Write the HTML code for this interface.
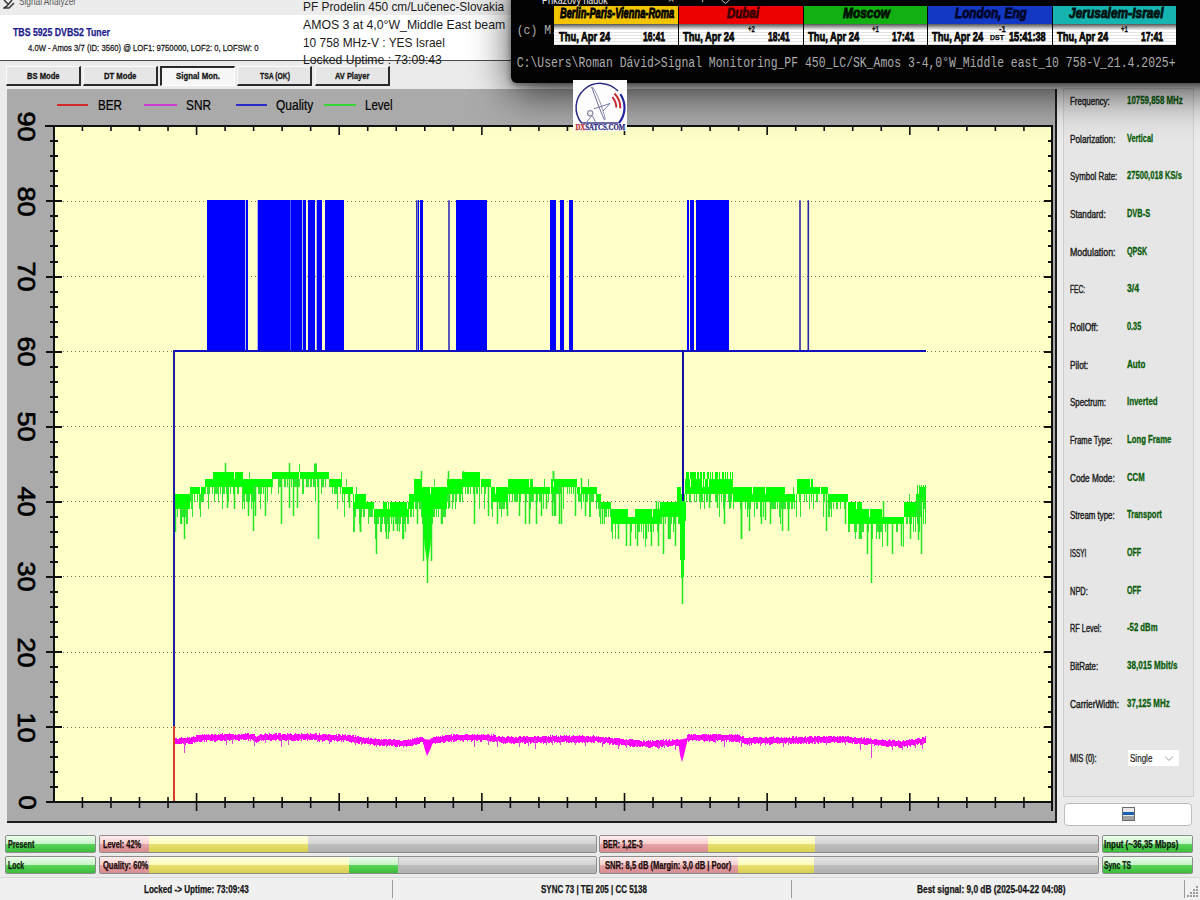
<!DOCTYPE html><html><head><meta charset="utf-8"><style>
html,body{margin:0;padding:0;}
body{width:1200px;height:900px;overflow:hidden;position:relative;background:#f0f0f0;font-family:"Liberation Sans",sans-serif;}
.t{position:absolute;white-space:pre;transform-origin:0 0;}
.b{position:absolute;box-sizing:border-box;}
svg{position:absolute;left:0;top:0;}
</style></head><body>

<div class="b" style="left:0px;top:0px;width:1200px;height:15px;background:#ececec"></div>
<div class="b" style="left:0px;top:15px;width:1200px;height:45px;background:#ffffff"></div>
<div class="b" style="left:0px;top:60px;width:1200px;height:1px;background:#4a4a4a"></div>
<div class="b" style="left:0px;top:61px;width:1200px;height:839px;background:#ebebeb"></div>
<div class="b" style="left:6px;top:66px;width:75px;height:20px;background:#e6e6e6;border-bottom:2px solid #2a2a2a;border-right:2px solid #2a2a2a;border-top:1px solid #fafafa;border-left:1px solid #fafafa"></div>
<div class="b" style="left:83px;top:66px;width:75px;height:20px;background:#e6e6e6;border-bottom:2px solid #2a2a2a;border-right:2px solid #2a2a2a;border-top:1px solid #fafafa;border-left:1px solid #fafafa"></div>
<div class="b" style="left:160px;top:66px;width:75px;height:20px;background:#f6f6f6;border-top:2px solid #2a2a2a;border-left:2px solid #2a2a2a;border-right:1px solid #fff;border-bottom:1px solid #fff"></div>
<div class="b" style="left:237px;top:66px;width:75px;height:20px;background:#e6e6e6;border-bottom:2px solid #2a2a2a;border-right:2px solid #2a2a2a;border-top:1px solid #fafafa;border-left:1px solid #fafafa"></div>
<div class="b" style="left:315px;top:66px;width:75px;height:20px;background:#e6e6e6;border-bottom:2px solid #2a2a2a;border-right:2px solid #2a2a2a;border-top:1px solid #fafafa;border-left:1px solid #fafafa"></div>
<div class="b" style="left:7px;top:89px;width:1050px;height:734px;background:#aaaaaa;border-right:2px solid #1e1e1e;border-bottom:2px solid #1e1e1e"></div>
<div class="b" style="left:53px;top:125px;width:1000px;height:678px;background:#ffffc8"></div>
<div class="b" style="left:1063px;top:88px;width:131px;height:709px;border:1px solid #cfcfcf;background:#e6e6e6"></div>
<div class="b" style="left:1064px;top:803px;width:128px;height:23px;background:#fff;border:1px solid #bdbdbd;border-radius:4px"></div>
<svg width="1200" height="900" viewBox="0 0 1200 900" shape-rendering="crispEdges">
<line x1="55" y1="727.5" x2="1050" y2="727.5" stroke="#7a7a5a" stroke-width="1" stroke-dasharray="1 3"/>
<line x1="55" y1="652.5" x2="1050" y2="652.5" stroke="#7a7a5a" stroke-width="1" stroke-dasharray="1 3"/>
<line x1="55" y1="576.5" x2="1050" y2="576.5" stroke="#7a7a5a" stroke-width="1" stroke-dasharray="1 3"/>
<line x1="55" y1="501.5" x2="1050" y2="501.5" stroke="#7a7a5a" stroke-width="1" stroke-dasharray="1 3"/>
<line x1="55" y1="426.5" x2="1050" y2="426.5" stroke="#7a7a5a" stroke-width="1" stroke-dasharray="1 3"/>
<line x1="55" y1="351.5" x2="1050" y2="351.5" stroke="#7a7a5a" stroke-width="1" stroke-dasharray="1 3"/>
<line x1="55" y1="276.5" x2="1050" y2="276.5" stroke="#7a7a5a" stroke-width="1" stroke-dasharray="1 3"/>
<line x1="55" y1="201.5" x2="1050" y2="201.5" stroke="#7a7a5a" stroke-width="1" stroke-dasharray="1 3"/>
<rect x="799.2" y="200.3" width="1.6" height="151.2" fill="#2828a8" shape-rendering="geometricPrecision"/>
<rect x="807.5" y="200.3" width="1.6" height="151.2" fill="#2828a8" shape-rendering="geometricPrecision"/>
<rect x="416" y="200.3" width="1.6" height="151.2" fill="#3030b8" shape-rendering="geometricPrecision"/>
<rect x="448.2" y="200.3" width="1.6" height="151.2" fill="#3030b8" shape-rendering="geometricPrecision"/>
<rect x="207.0" y="200.3" width="38.0" height="151.2" fill="#0000ff" fill-opacity="1"/>
<rect x="246.3" y="200.3" width="1.4" height="151.2" fill="#0000ff" fill-opacity="1"/>
<rect x="258.3" y="200.3" width="43.4" height="151.2" fill="#0000ff" fill-opacity="1"/>
<rect x="303.0" y="200.3" width="2.7" height="151.2" fill="#0000ff" fill-opacity="1"/>
<rect x="308.3" y="200.3" width="6.7" height="151.2" fill="#0000ff" fill-opacity="1"/>
<rect x="317.0" y="200.3" width="4.7" height="151.2" fill="#0000ff" fill-opacity="1"/>
<rect x="325.0" y="200.3" width="18.7" height="151.2" fill="#0000ff" fill-opacity="1"/>
<rect x="417.6" y="200.3" width="1.4" height="151.2" fill="#0000ff" fill-opacity="1"/>
<rect x="420.0" y="200.3" width="3.0" height="151.2" fill="#0000ff" fill-opacity="1"/>
<rect x="455.8" y="200.3" width="30.9" height="151.2" fill="#0000ff" fill-opacity="1"/>
<rect x="550.0" y="200.3" width="5.8" height="151.2" fill="#0000ff" fill-opacity="1"/>
<rect x="560.0" y="200.3" width="4.0" height="151.2" fill="#0000ff" fill-opacity="1"/>
<rect x="569.0" y="200.3" width="4.0" height="151.2" fill="#0000ff" fill-opacity="1"/>
<rect x="686.7" y="200.3" width="2.3" height="151.2" fill="#0000ff" fill-opacity="1"/>
<rect x="690.0" y="200.3" width="4.0" height="151.2" fill="#0000ff" fill-opacity="1"/>
<rect x="696.0" y="200.3" width="32.7" height="151.2" fill="#0000ff" fill-opacity="1"/>
<rect x="245.2" y="200.3" width="1.0" height="150.2" fill="#8080ff" fill-opacity="0.6"/>
<rect x="257.3" y="200.3" width="1.0" height="150.2" fill="#8080ff" fill-opacity="0.6"/>
<rect x="290.3" y="200.3" width="1.0" height="150.2" fill="#8080ff" fill-opacity="0.6"/>
<rect x="302.0" y="200.3" width="1.0" height="150.2" fill="#8080ff" fill-opacity="0.6"/>
<rect x="316.0" y="200.3" width="1.0" height="150.2" fill="#8080ff" fill-opacity="0.6"/>
<rect x="174" y="350" width="752" height="2" fill="#1010c0"/>
<rect x="174" y="494.3" width="1" height="15.0" fill="#00ff00"/>
<rect x="174" y="509.4" width="1" height="7.5" fill="#30e830"/>
<rect x="175" y="494.3" width="1" height="15.0" fill="#00ff00"/>
<rect x="176" y="494.3" width="1" height="15.0" fill="#00ff00"/>
<rect x="177" y="494.3" width="1" height="15.0" fill="#00ff00"/>
<rect x="177" y="509.4" width="1" height="7.5" fill="#30e830"/>
<rect x="178" y="494.3" width="1" height="15.0" fill="#00ff00"/>
<rect x="179" y="494.3" width="1" height="15.0" fill="#00ff00"/>
<rect x="180" y="494.3" width="1" height="15.0" fill="#00ff00"/>
<rect x="180" y="509.4" width="1" height="15.0" fill="#30e830"/>
<rect x="181" y="494.3" width="1" height="15.0" fill="#00ff00"/>
<rect x="182" y="494.3" width="1" height="15.0" fill="#00ff00"/>
<rect x="182" y="509.4" width="1" height="7.5" fill="#30e830"/>
<rect x="183" y="494.3" width="1" height="15.0" fill="#00ff00"/>
<rect x="183" y="509.4" width="1" height="7.5" fill="#30e830"/>
<rect x="184" y="494.3" width="1" height="15.0" fill="#00ff00"/>
<rect x="184" y="509.4" width="1" height="15.0" fill="#30e830"/>
<rect x="185" y="494.3" width="1" height="15.0" fill="#00ff00"/>
<rect x="185" y="509.4" width="1" height="7.5" fill="#30e830"/>
<rect x="186" y="494.3" width="1" height="15.0" fill="#00ff00"/>
<rect x="186" y="509.4" width="1" height="15.0" fill="#30e830"/>
<rect x="187" y="494.3" width="1" height="15.0" fill="#00ff00"/>
<rect x="187" y="509.4" width="1" height="15.0" fill="#30e830"/>
<rect x="188" y="494.3" width="1" height="15.0" fill="#00ff00"/>
<rect x="189" y="494.3" width="1" height="15.0" fill="#00ff00"/>
<rect x="190" y="486.8" width="1" height="7.5" fill="#00ff00"/>
<rect x="190" y="494.3" width="1" height="7.5" fill="#30e830"/>
<rect x="191" y="486.8" width="1" height="7.5" fill="#00ff00"/>
<rect x="191" y="494.3" width="1" height="15.0" fill="#30e830"/>
<rect x="192" y="486.8" width="1" height="7.5" fill="#00ff00"/>
<rect x="192" y="494.3" width="1" height="22.5" fill="#30e830"/>
<rect x="193" y="486.8" width="1" height="7.5" fill="#00ff00"/>
<rect x="194" y="486.8" width="1" height="7.5" fill="#00ff00"/>
<rect x="194" y="494.3" width="1" height="7.5" fill="#30e830"/>
<rect x="195" y="486.8" width="1" height="7.5" fill="#00ff00"/>
<rect x="196" y="486.8" width="1" height="7.5" fill="#00ff00"/>
<rect x="197" y="486.8" width="1" height="7.5" fill="#00ff00"/>
<rect x="197" y="494.3" width="1" height="7.5" fill="#30e830"/>
<rect x="198" y="486.8" width="1" height="7.5" fill="#00ff00"/>
<rect x="199" y="486.8" width="1" height="7.5" fill="#00ff00"/>
<rect x="199" y="494.3" width="1" height="15.0" fill="#30e830"/>
<rect x="200" y="494.3" width="1" height="0.0" fill="#00ff00"/>
<rect x="200" y="494.3" width="1" height="22.5" fill="#30e830"/>
<rect x="201" y="486.8" width="1" height="7.5" fill="#00ff00"/>
<rect x="201" y="494.3" width="1" height="7.5" fill="#30e830"/>
<rect x="202" y="486.8" width="1" height="7.5" fill="#00ff00"/>
<rect x="202" y="494.3" width="1" height="7.5" fill="#30e830"/>
<rect x="203" y="486.8" width="1" height="7.5" fill="#00ff00"/>
<rect x="203" y="494.3" width="1" height="7.5" fill="#30e830"/>
<rect x="204" y="486.8" width="1" height="7.5" fill="#00ff00"/>
<rect x="205" y="479.3" width="1" height="7.5" fill="#00ff00"/>
<rect x="205" y="486.8" width="1" height="7.5" fill="#30e830"/>
<rect x="206" y="479.3" width="1" height="7.5" fill="#00ff00"/>
<rect x="207" y="479.3" width="1" height="7.5" fill="#00ff00"/>
<rect x="207" y="486.8" width="1" height="7.5" fill="#30e830"/>
<rect x="208" y="479.3" width="1" height="7.5" fill="#00ff00"/>
<rect x="208" y="486.8" width="1" height="22.5" fill="#30e830"/>
<rect x="209" y="479.3" width="1" height="7.5" fill="#00ff00"/>
<rect x="209" y="486.8" width="1" height="7.5" fill="#30e830"/>
<rect x="210" y="479.3" width="1" height="7.5" fill="#00ff00"/>
<rect x="211" y="479.3" width="1" height="7.5" fill="#00ff00"/>
<rect x="212" y="479.3" width="1" height="7.5" fill="#00ff00"/>
<rect x="212" y="486.8" width="1" height="7.5" fill="#30e830"/>
<rect x="213" y="471.8" width="1" height="15.0" fill="#00ff00"/>
<rect x="214" y="471.8" width="1" height="15.0" fill="#00ff00"/>
<rect x="214" y="486.8" width="1" height="15.0" fill="#30e830"/>
<rect x="215" y="471.8" width="1" height="15.0" fill="#00ff00"/>
<rect x="215" y="486.8" width="1" height="7.5" fill="#30e830"/>
<rect x="216" y="471.8" width="1" height="15.0" fill="#00ff00"/>
<rect x="216" y="486.8" width="1" height="7.5" fill="#30e830"/>
<rect x="217" y="471.8" width="1" height="15.0" fill="#00ff00"/>
<rect x="217" y="486.8" width="1" height="7.5" fill="#30e830"/>
<rect x="218" y="471.8" width="1" height="15.0" fill="#00ff00"/>
<rect x="218" y="486.8" width="1" height="15.0" fill="#30e830"/>
<rect x="219" y="471.8" width="1" height="15.0" fill="#00ff00"/>
<rect x="220" y="471.8" width="1" height="15.0" fill="#00ff00"/>
<rect x="220" y="486.8" width="1" height="7.5" fill="#30e830"/>
<rect x="221" y="471.8" width="1" height="15.0" fill="#00ff00"/>
<rect x="222" y="471.8" width="1" height="15.0" fill="#00ff00"/>
<rect x="222" y="486.8" width="1" height="22.5" fill="#30e830"/>
<rect x="223" y="471.8" width="1" height="15.0" fill="#00ff00"/>
<rect x="223" y="486.8" width="1" height="7.5" fill="#30e830"/>
<rect x="224" y="471.8" width="1" height="15.0" fill="#00ff00"/>
<rect x="224" y="486.8" width="1" height="7.5" fill="#30e830"/>
<rect x="225" y="471.8" width="1" height="15.0" fill="#00ff00"/>
<rect x="226" y="471.8" width="1" height="15.0" fill="#00ff00"/>
<rect x="226" y="486.8" width="1" height="7.5" fill="#30e830"/>
<rect x="227" y="471.8" width="1" height="15.0" fill="#00ff00"/>
<rect x="228" y="471.8" width="1" height="15.0" fill="#00ff00"/>
<rect x="228" y="486.8" width="1" height="15.0" fill="#30e830"/>
<rect x="229" y="471.8" width="1" height="15.0" fill="#00ff00"/>
<rect x="230" y="471.8" width="1" height="15.0" fill="#00ff00"/>
<rect x="230" y="486.8" width="1" height="7.5" fill="#30e830"/>
<rect x="231" y="471.8" width="1" height="15.0" fill="#00ff00"/>
<rect x="232" y="471.8" width="1" height="15.0" fill="#00ff00"/>
<rect x="233" y="471.8" width="1" height="15.0" fill="#00ff00"/>
<rect x="233" y="486.8" width="1" height="7.5" fill="#30e830"/>
<rect x="234" y="479.3" width="1" height="7.5" fill="#00ff00"/>
<rect x="234" y="486.8" width="1" height="7.5" fill="#30e830"/>
<rect x="235" y="471.8" width="1" height="15.0" fill="#00ff00"/>
<rect x="236" y="471.8" width="1" height="15.0" fill="#00ff00"/>
<rect x="237" y="471.8" width="1" height="15.0" fill="#00ff00"/>
<rect x="237" y="486.8" width="1" height="7.5" fill="#30e830"/>
<rect x="238" y="471.8" width="1" height="15.0" fill="#00ff00"/>
<rect x="238" y="486.8" width="1" height="7.5" fill="#30e830"/>
<rect x="239" y="471.8" width="1" height="15.0" fill="#00ff00"/>
<rect x="240" y="471.8" width="1" height="15.0" fill="#00ff00"/>
<rect x="241" y="471.8" width="1" height="15.0" fill="#00ff00"/>
<rect x="242" y="471.8" width="1" height="15.0" fill="#00ff00"/>
<rect x="242" y="486.8" width="1" height="22.5" fill="#30e830"/>
<rect x="243" y="479.3" width="1" height="15.0" fill="#00ff00"/>
<rect x="243" y="494.3" width="1" height="7.5" fill="#30e830"/>
<rect x="244" y="479.3" width="1" height="15.0" fill="#00ff00"/>
<rect x="244" y="494.3" width="1" height="15.0" fill="#30e830"/>
<rect x="245" y="479.3" width="1" height="15.0" fill="#00ff00"/>
<rect x="246" y="479.3" width="1" height="15.0" fill="#00ff00"/>
<rect x="246" y="494.3" width="1" height="7.5" fill="#30e830"/>
<rect x="247" y="479.3" width="1" height="15.0" fill="#00ff00"/>
<rect x="247" y="494.3" width="1" height="7.5" fill="#30e830"/>
<rect x="248" y="479.3" width="1" height="15.0" fill="#00ff00"/>
<rect x="249" y="479.3" width="1" height="15.0" fill="#00ff00"/>
<rect x="249" y="494.3" width="1" height="7.5" fill="#30e830"/>
<rect x="249" y="471.8" width="1" height="7.5" fill="#30e830"/>
<rect x="250" y="479.3" width="1" height="15.0" fill="#00ff00"/>
<rect x="251" y="479.3" width="1" height="15.0" fill="#00ff00"/>
<rect x="251" y="494.3" width="1" height="15.0" fill="#30e830"/>
<rect x="252" y="479.3" width="1" height="15.0" fill="#00ff00"/>
<rect x="252" y="494.3" width="1" height="7.5" fill="#30e830"/>
<rect x="253" y="479.3" width="1" height="7.5" fill="#00ff00"/>
<rect x="253" y="486.8" width="1" height="7.5" fill="#30e830"/>
<rect x="254" y="479.3" width="1" height="7.5" fill="#00ff00"/>
<rect x="254" y="486.8" width="1" height="15.0" fill="#30e830"/>
<rect x="255" y="479.3" width="1" height="7.5" fill="#00ff00"/>
<rect x="255" y="486.8" width="1" height="7.5" fill="#30e830"/>
<rect x="256" y="479.3" width="1" height="7.5" fill="#00ff00"/>
<rect x="257" y="479.3" width="1" height="7.5" fill="#00ff00"/>
<rect x="258" y="479.3" width="1" height="7.5" fill="#00ff00"/>
<rect x="258" y="486.8" width="1" height="7.5" fill="#30e830"/>
<rect x="259" y="479.3" width="1" height="7.5" fill="#00ff00"/>
<rect x="259" y="486.8" width="1" height="7.5" fill="#30e830"/>
<rect x="260" y="479.3" width="1" height="7.5" fill="#00ff00"/>
<rect x="260" y="486.8" width="1" height="22.5" fill="#30e830"/>
<rect x="261" y="479.3" width="1" height="7.5" fill="#00ff00"/>
<rect x="261" y="486.8" width="1" height="7.5" fill="#30e830"/>
<rect x="262" y="479.3" width="1" height="7.5" fill="#00ff00"/>
<rect x="263" y="479.3" width="1" height="7.5" fill="#00ff00"/>
<rect x="263" y="486.8" width="1" height="7.5" fill="#30e830"/>
<rect x="264" y="479.3" width="1" height="7.5" fill="#00ff00"/>
<rect x="265" y="479.3" width="1" height="7.5" fill="#00ff00"/>
<rect x="266" y="479.3" width="1" height="7.5" fill="#00ff00"/>
<rect x="267" y="479.3" width="1" height="7.5" fill="#00ff00"/>
<rect x="267" y="486.8" width="1" height="15.0" fill="#30e830"/>
<rect x="268" y="479.3" width="1" height="7.5" fill="#00ff00"/>
<rect x="269" y="479.3" width="1" height="7.5" fill="#00ff00"/>
<rect x="270" y="479.3" width="1" height="7.5" fill="#00ff00"/>
<rect x="271" y="479.3" width="1" height="7.5" fill="#00ff00"/>
<rect x="271" y="486.8" width="1" height="7.5" fill="#30e830"/>
<rect x="272" y="471.8" width="1" height="7.5" fill="#00ff00"/>
<rect x="272" y="479.3" width="1" height="7.5" fill="#30e830"/>
<rect x="273" y="471.8" width="1" height="7.5" fill="#00ff00"/>
<rect x="274" y="471.8" width="1" height="7.5" fill="#00ff00"/>
<rect x="275" y="471.8" width="1" height="7.5" fill="#00ff00"/>
<rect x="276" y="471.8" width="1" height="7.5" fill="#00ff00"/>
<rect x="277" y="471.8" width="1" height="7.5" fill="#00ff00"/>
<rect x="278" y="471.8" width="1" height="7.5" fill="#00ff00"/>
<rect x="278" y="479.3" width="1" height="15.0" fill="#30e830"/>
<rect x="279" y="471.8" width="1" height="7.5" fill="#00ff00"/>
<rect x="279" y="479.3" width="1" height="7.5" fill="#30e830"/>
<rect x="280" y="471.8" width="1" height="7.5" fill="#00ff00"/>
<rect x="280" y="479.3" width="1" height="7.5" fill="#30e830"/>
<rect x="281" y="471.8" width="1" height="7.5" fill="#00ff00"/>
<rect x="281" y="479.3" width="1" height="7.5" fill="#30e830"/>
<rect x="282" y="471.8" width="1" height="7.5" fill="#00ff00"/>
<rect x="283" y="471.8" width="1" height="7.5" fill="#00ff00"/>
<rect x="284" y="471.8" width="1" height="7.5" fill="#00ff00"/>
<rect x="284" y="479.3" width="1" height="7.5" fill="#30e830"/>
<rect x="285" y="471.8" width="1" height="7.5" fill="#00ff00"/>
<rect x="285" y="479.3" width="1" height="7.5" fill="#30e830"/>
<rect x="286" y="471.8" width="1" height="7.5" fill="#00ff00"/>
<rect x="287" y="471.8" width="1" height="7.5" fill="#00ff00"/>
<rect x="287" y="479.3" width="1" height="7.5" fill="#30e830"/>
<rect x="288" y="471.8" width="1" height="7.5" fill="#00ff00"/>
<rect x="289" y="471.8" width="1" height="7.5" fill="#00ff00"/>
<rect x="290" y="471.8" width="1" height="7.5" fill="#00ff00"/>
<rect x="291" y="471.8" width="1" height="7.5" fill="#00ff00"/>
<rect x="291" y="479.3" width="1" height="7.5" fill="#30e830"/>
<rect x="292" y="471.8" width="1" height="7.5" fill="#00ff00"/>
<rect x="293" y="471.8" width="1" height="7.5" fill="#00ff00"/>
<rect x="294" y="471.8" width="1" height="7.5" fill="#00ff00"/>
<rect x="294" y="479.3" width="1" height="7.5" fill="#30e830"/>
<rect x="295" y="471.8" width="1" height="7.5" fill="#00ff00"/>
<rect x="295" y="479.3" width="1" height="7.5" fill="#30e830"/>
<rect x="296" y="471.8" width="1" height="7.5" fill="#00ff00"/>
<rect x="296" y="479.3" width="1" height="7.5" fill="#30e830"/>
<rect x="297" y="471.8" width="1" height="7.5" fill="#00ff00"/>
<rect x="298" y="471.8" width="1" height="7.5" fill="#00ff00"/>
<rect x="298" y="479.3" width="1" height="7.5" fill="#30e830"/>
<rect x="299" y="479.3" width="1" height="0.0" fill="#00ff00"/>
<rect x="299" y="479.3" width="1" height="7.5" fill="#30e830"/>
<rect x="299" y="464.3" width="1" height="7.5" fill="#30e830"/>
<rect x="300" y="471.8" width="1" height="7.5" fill="#00ff00"/>
<rect x="301" y="471.8" width="1" height="7.5" fill="#00ff00"/>
<rect x="302" y="471.8" width="1" height="7.5" fill="#00ff00"/>
<rect x="302" y="479.3" width="1" height="15.0" fill="#30e830"/>
<rect x="303" y="471.8" width="1" height="7.5" fill="#00ff00"/>
<rect x="303" y="479.3" width="1" height="15.0" fill="#30e830"/>
<rect x="304" y="471.8" width="1" height="7.5" fill="#00ff00"/>
<rect x="305" y="471.8" width="1" height="7.5" fill="#00ff00"/>
<rect x="306" y="471.8" width="1" height="7.5" fill="#00ff00"/>
<rect x="306" y="479.3" width="1" height="7.5" fill="#30e830"/>
<rect x="307" y="471.8" width="1" height="7.5" fill="#00ff00"/>
<rect x="307" y="479.3" width="1" height="7.5" fill="#30e830"/>
<rect x="308" y="471.8" width="1" height="7.5" fill="#00ff00"/>
<rect x="308" y="479.3" width="1" height="7.5" fill="#30e830"/>
<rect x="309" y="471.8" width="1" height="7.5" fill="#00ff00"/>
<rect x="310" y="471.8" width="1" height="7.5" fill="#00ff00"/>
<rect x="310" y="479.3" width="1" height="7.5" fill="#30e830"/>
<rect x="311" y="471.8" width="1" height="7.5" fill="#00ff00"/>
<rect x="311" y="479.3" width="1" height="7.5" fill="#30e830"/>
<rect x="312" y="471.8" width="1" height="7.5" fill="#00ff00"/>
<rect x="313" y="471.8" width="1" height="7.5" fill="#00ff00"/>
<rect x="313" y="479.3" width="1" height="7.5" fill="#30e830"/>
<rect x="314" y="471.8" width="1" height="7.5" fill="#00ff00"/>
<rect x="314" y="479.3" width="1" height="7.5" fill="#30e830"/>
<rect x="314" y="464.3" width="1" height="7.5" fill="#30e830"/>
<rect x="315" y="471.8" width="1" height="7.5" fill="#00ff00"/>
<rect x="315" y="479.3" width="1" height="22.5" fill="#30e830"/>
<rect x="316" y="471.8" width="1" height="7.5" fill="#00ff00"/>
<rect x="316" y="464.3" width="1" height="7.5" fill="#30e830"/>
<rect x="317" y="471.8" width="1" height="7.5" fill="#00ff00"/>
<rect x="317" y="479.3" width="1" height="7.5" fill="#30e830"/>
<rect x="318" y="471.8" width="1" height="7.5" fill="#00ff00"/>
<rect x="318" y="479.3" width="1" height="7.5" fill="#30e830"/>
<rect x="319" y="471.8" width="1" height="7.5" fill="#00ff00"/>
<rect x="320" y="471.8" width="1" height="7.5" fill="#00ff00"/>
<rect x="321" y="471.8" width="1" height="7.5" fill="#00ff00"/>
<rect x="321" y="479.3" width="1" height="15.0" fill="#30e830"/>
<rect x="322" y="471.8" width="1" height="7.5" fill="#00ff00"/>
<rect x="322" y="479.3" width="1" height="7.5" fill="#30e830"/>
<rect x="323" y="471.8" width="1" height="7.5" fill="#00ff00"/>
<rect x="323" y="479.3" width="1" height="7.5" fill="#30e830"/>
<rect x="324" y="471.8" width="1" height="7.5" fill="#00ff00"/>
<rect x="325" y="471.8" width="1" height="7.5" fill="#00ff00"/>
<rect x="325" y="479.3" width="1" height="7.5" fill="#30e830"/>
<rect x="326" y="471.8" width="1" height="7.5" fill="#00ff00"/>
<rect x="327" y="471.8" width="1" height="7.5" fill="#00ff00"/>
<rect x="328" y="471.8" width="1" height="7.5" fill="#00ff00"/>
<rect x="329" y="479.3" width="1" height="0.0" fill="#00ff00"/>
<rect x="329" y="479.3" width="1" height="7.5" fill="#30e830"/>
<rect x="330" y="479.3" width="1" height="7.5" fill="#00ff00"/>
<rect x="331" y="479.3" width="1" height="7.5" fill="#00ff00"/>
<rect x="332" y="479.3" width="1" height="7.5" fill="#00ff00"/>
<rect x="332" y="486.8" width="1" height="7.5" fill="#30e830"/>
<rect x="333" y="479.3" width="1" height="7.5" fill="#00ff00"/>
<rect x="334" y="479.3" width="1" height="7.5" fill="#00ff00"/>
<rect x="334" y="486.8" width="1" height="7.5" fill="#30e830"/>
<rect x="335" y="479.3" width="1" height="7.5" fill="#00ff00"/>
<rect x="335" y="486.8" width="1" height="7.5" fill="#30e830"/>
<rect x="336" y="479.3" width="1" height="7.5" fill="#00ff00"/>
<rect x="336" y="486.8" width="1" height="7.5" fill="#30e830"/>
<rect x="337" y="479.3" width="1" height="7.5" fill="#00ff00"/>
<rect x="337" y="486.8" width="1" height="22.5" fill="#30e830"/>
<rect x="338" y="479.3" width="1" height="7.5" fill="#00ff00"/>
<rect x="339" y="479.3" width="1" height="7.5" fill="#00ff00"/>
<rect x="340" y="479.3" width="1" height="7.5" fill="#00ff00"/>
<rect x="340" y="486.8" width="1" height="7.5" fill="#30e830"/>
<rect x="341" y="479.3" width="1" height="7.5" fill="#00ff00"/>
<rect x="341" y="471.8" width="1" height="7.5" fill="#30e830"/>
<rect x="342" y="486.8" width="1" height="7.5" fill="#00ff00"/>
<rect x="342" y="494.3" width="1" height="7.5" fill="#30e830"/>
<rect x="343" y="486.8" width="1" height="7.5" fill="#00ff00"/>
<rect x="344" y="486.8" width="1" height="7.5" fill="#00ff00"/>
<rect x="344" y="494.3" width="1" height="22.5" fill="#30e830"/>
<rect x="345" y="486.8" width="1" height="7.5" fill="#00ff00"/>
<rect x="346" y="486.8" width="1" height="7.5" fill="#00ff00"/>
<rect x="346" y="479.3" width="1" height="7.5" fill="#30e830"/>
<rect x="347" y="486.8" width="1" height="7.5" fill="#00ff00"/>
<rect x="348" y="486.8" width="1" height="7.5" fill="#00ff00"/>
<rect x="348" y="494.3" width="1" height="7.5" fill="#30e830"/>
<rect x="349" y="486.8" width="1" height="7.5" fill="#00ff00"/>
<rect x="349" y="494.3" width="1" height="7.5" fill="#30e830"/>
<rect x="350" y="486.8" width="1" height="7.5" fill="#00ff00"/>
<rect x="351" y="486.8" width="1" height="7.5" fill="#00ff00"/>
<rect x="352" y="486.8" width="1" height="7.5" fill="#00ff00"/>
<rect x="353" y="494.3" width="1" height="15.0" fill="#00ff00"/>
<rect x="353" y="509.4" width="1" height="22.5" fill="#30e830"/>
<rect x="354" y="501.8" width="1" height="7.5" fill="#00ff00"/>
<rect x="354" y="509.4" width="1" height="22.5" fill="#30e830"/>
<rect x="355" y="494.3" width="1" height="15.0" fill="#00ff00"/>
<rect x="355" y="509.4" width="1" height="7.5" fill="#30e830"/>
<rect x="356" y="494.3" width="1" height="15.0" fill="#00ff00"/>
<rect x="356" y="486.8" width="1" height="7.5" fill="#30e830"/>
<rect x="357" y="494.3" width="1" height="15.0" fill="#00ff00"/>
<rect x="358" y="494.3" width="1" height="15.0" fill="#00ff00"/>
<rect x="359" y="494.3" width="1" height="15.0" fill="#00ff00"/>
<rect x="359" y="509.4" width="1" height="15.0" fill="#30e830"/>
<rect x="360" y="494.3" width="1" height="15.0" fill="#00ff00"/>
<rect x="361" y="494.3" width="1" height="15.0" fill="#00ff00"/>
<rect x="361" y="509.4" width="1" height="7.5" fill="#30e830"/>
<rect x="362" y="494.3" width="1" height="15.0" fill="#00ff00"/>
<rect x="363" y="494.3" width="1" height="15.0" fill="#00ff00"/>
<rect x="363" y="509.4" width="1" height="7.5" fill="#30e830"/>
<rect x="364" y="494.3" width="1" height="15.0" fill="#00ff00"/>
<rect x="364" y="509.4" width="1" height="7.5" fill="#30e830"/>
<rect x="365" y="494.3" width="1" height="15.0" fill="#00ff00"/>
<rect x="366" y="501.9" width="1" height="7.5" fill="#00ff00"/>
<rect x="367" y="501.9" width="1" height="7.5" fill="#00ff00"/>
<rect x="368" y="501.9" width="1" height="7.5" fill="#00ff00"/>
<rect x="368" y="509.4" width="1" height="15.0" fill="#30e830"/>
<rect x="369" y="501.9" width="1" height="7.5" fill="#00ff00"/>
<rect x="369" y="509.4" width="1" height="7.5" fill="#30e830"/>
<rect x="370" y="501.9" width="1" height="7.5" fill="#00ff00"/>
<rect x="370" y="509.4" width="1" height="7.5" fill="#30e830"/>
<rect x="371" y="501.9" width="1" height="7.5" fill="#00ff00"/>
<rect x="371" y="509.4" width="1" height="7.5" fill="#30e830"/>
<rect x="372" y="501.9" width="1" height="7.5" fill="#00ff00"/>
<rect x="372" y="509.4" width="1" height="7.5" fill="#30e830"/>
<rect x="373" y="501.9" width="1" height="7.5" fill="#00ff00"/>
<rect x="374" y="509.4" width="1" height="7.5" fill="#00ff00"/>
<rect x="374" y="516.9" width="1" height="7.5" fill="#30e830"/>
<rect x="375" y="509.4" width="1" height="7.5" fill="#00ff00"/>
<rect x="375" y="516.9" width="1" height="22.5" fill="#30e830"/>
<rect x="376" y="509.4" width="1" height="7.5" fill="#00ff00"/>
<rect x="377" y="509.4" width="1" height="7.5" fill="#00ff00"/>
<rect x="377" y="516.9" width="1" height="7.5" fill="#30e830"/>
<rect x="378" y="509.4" width="1" height="7.5" fill="#00ff00"/>
<rect x="378" y="516.9" width="1" height="7.5" fill="#30e830"/>
<rect x="379" y="509.4" width="1" height="7.5" fill="#00ff00"/>
<rect x="380" y="509.4" width="1" height="7.5" fill="#00ff00"/>
<rect x="380" y="516.9" width="1" height="15.0" fill="#30e830"/>
<rect x="381" y="509.4" width="1" height="7.5" fill="#00ff00"/>
<rect x="381" y="516.9" width="1" height="15.0" fill="#30e830"/>
<rect x="382" y="509.4" width="1" height="7.5" fill="#00ff00"/>
<rect x="382" y="516.9" width="1" height="7.5" fill="#30e830"/>
<rect x="383" y="501.9" width="1" height="15.0" fill="#00ff00"/>
<rect x="384" y="501.9" width="1" height="15.0" fill="#00ff00"/>
<rect x="384" y="516.9" width="1" height="7.5" fill="#30e830"/>
<rect x="385" y="501.9" width="1" height="15.0" fill="#00ff00"/>
<rect x="385" y="516.9" width="1" height="15.0" fill="#30e830"/>
<rect x="386" y="501.9" width="1" height="15.0" fill="#00ff00"/>
<rect x="387" y="509.4" width="1" height="7.5" fill="#00ff00"/>
<rect x="387" y="516.9" width="1" height="7.5" fill="#30e830"/>
<rect x="388" y="501.9" width="1" height="15.0" fill="#00ff00"/>
<rect x="388" y="516.9" width="1" height="22.5" fill="#30e830"/>
<rect x="389" y="509.4" width="1" height="7.5" fill="#00ff00"/>
<rect x="389" y="516.9" width="1" height="15.0" fill="#30e830"/>
<rect x="390" y="501.9" width="1" height="15.0" fill="#00ff00"/>
<rect x="391" y="501.9" width="1" height="15.0" fill="#00ff00"/>
<rect x="391" y="516.9" width="1" height="7.5" fill="#30e830"/>
<rect x="392" y="501.9" width="1" height="15.0" fill="#00ff00"/>
<rect x="393" y="501.9" width="1" height="15.0" fill="#00ff00"/>
<rect x="394" y="501.9" width="1" height="15.0" fill="#00ff00"/>
<rect x="395" y="501.9" width="1" height="15.0" fill="#00ff00"/>
<rect x="395" y="516.9" width="1" height="7.5" fill="#30e830"/>
<rect x="396" y="501.9" width="1" height="15.0" fill="#00ff00"/>
<rect x="396" y="516.9" width="1" height="7.5" fill="#30e830"/>
<rect x="397" y="501.9" width="1" height="15.0" fill="#00ff00"/>
<rect x="398" y="501.9" width="1" height="15.0" fill="#00ff00"/>
<rect x="398" y="516.9" width="1" height="7.5" fill="#30e830"/>
<rect x="399" y="501.9" width="1" height="15.0" fill="#00ff00"/>
<rect x="399" y="516.9" width="1" height="15.0" fill="#30e830"/>
<rect x="400" y="501.9" width="1" height="15.0" fill="#00ff00"/>
<rect x="400" y="516.9" width="1" height="7.5" fill="#30e830"/>
<rect x="401" y="501.9" width="1" height="15.0" fill="#00ff00"/>
<rect x="402" y="501.9" width="1" height="15.0" fill="#00ff00"/>
<rect x="402" y="516.9" width="1" height="22.5" fill="#30e830"/>
<rect x="403" y="501.9" width="1" height="15.0" fill="#00ff00"/>
<rect x="404" y="501.9" width="1" height="15.0" fill="#00ff00"/>
<rect x="404" y="516.9" width="1" height="7.5" fill="#30e830"/>
<rect x="405" y="501.9" width="1" height="15.0" fill="#00ff00"/>
<rect x="405" y="516.9" width="1" height="15.0" fill="#30e830"/>
<rect x="406" y="501.9" width="1" height="15.0" fill="#00ff00"/>
<rect x="407" y="509.4" width="1" height="7.5" fill="#00ff00"/>
<rect x="407" y="516.9" width="1" height="7.5" fill="#30e830"/>
<rect x="408" y="501.9" width="1" height="15.0" fill="#00ff00"/>
<rect x="408" y="516.9" width="1" height="7.5" fill="#30e830"/>
<rect x="409" y="494.3" width="1" height="15.0" fill="#00ff00"/>
<rect x="410" y="494.3" width="1" height="15.0" fill="#00ff00"/>
<rect x="410" y="509.4" width="1" height="7.5" fill="#30e830"/>
<rect x="411" y="494.3" width="1" height="15.0" fill="#00ff00"/>
<rect x="411" y="509.4" width="1" height="7.5" fill="#30e830"/>
<rect x="412" y="494.3" width="1" height="15.0" fill="#00ff00"/>
<rect x="413" y="494.3" width="1" height="15.0" fill="#00ff00"/>
<rect x="413" y="509.4" width="1" height="7.5" fill="#30e830"/>
<rect x="414" y="479.3" width="1" height="22.5" fill="#00ff00"/>
<rect x="415" y="479.3" width="1" height="22.5" fill="#00ff00"/>
<rect x="415" y="501.9" width="1" height="7.5" fill="#30e830"/>
<rect x="416" y="479.3" width="1" height="22.5" fill="#00ff00"/>
<rect x="416" y="501.9" width="1" height="7.5" fill="#30e830"/>
<rect x="417" y="479.3" width="1" height="22.5" fill="#00ff00"/>
<rect x="418" y="479.3" width="1" height="22.5" fill="#00ff00"/>
<rect x="419" y="479.3" width="1" height="22.5" fill="#00ff00"/>
<rect x="419" y="501.9" width="1" height="7.5" fill="#30e830"/>
<rect x="420" y="479.3" width="1" height="22.5" fill="#00ff00"/>
<rect x="420" y="501.9" width="1" height="7.5" fill="#30e830"/>
<rect x="421" y="479.3" width="1" height="22.5" fill="#00ff00"/>
<rect x="421" y="501.9" width="1" height="15.0" fill="#30e830"/>
<rect x="422" y="486.8" width="1" height="30.0" fill="#00ff00"/>
<rect x="422" y="516.9" width="1" height="7.5" fill="#30e830"/>
<rect x="423" y="486.8" width="1" height="30.0" fill="#00ff00"/>
<rect x="424" y="486.8" width="1" height="30.0" fill="#00ff00"/>
<rect x="424" y="516.9" width="1" height="7.5" fill="#30e830"/>
<rect x="425" y="486.8" width="1" height="30.0" fill="#00ff00"/>
<rect x="426" y="486.8" width="1" height="30.0" fill="#00ff00"/>
<rect x="426" y="516.9" width="1" height="22.5" fill="#30e830"/>
<rect x="427" y="486.8" width="1" height="30.0" fill="#00ff00"/>
<rect x="427" y="516.9" width="1" height="7.5" fill="#30e830"/>
<rect x="428" y="486.8" width="1" height="30.0" fill="#00ff00"/>
<rect x="428" y="516.9" width="1" height="7.5" fill="#30e830"/>
<rect x="429" y="486.8" width="1" height="30.0" fill="#00ff00"/>
<rect x="430" y="494.3" width="1" height="22.5" fill="#00ff00"/>
<rect x="430" y="516.9" width="1" height="7.5" fill="#30e830"/>
<rect x="431" y="486.8" width="1" height="30.0" fill="#00ff00"/>
<rect x="432" y="486.8" width="1" height="30.0" fill="#00ff00"/>
<rect x="432" y="516.9" width="1" height="7.5" fill="#30e830"/>
<rect x="433" y="486.8" width="1" height="22.5" fill="#00ff00"/>
<rect x="433" y="509.4" width="1" height="7.5" fill="#30e830"/>
<rect x="434" y="486.8" width="1" height="22.5" fill="#00ff00"/>
<rect x="434" y="509.4" width="1" height="7.5" fill="#30e830"/>
<rect x="434" y="479.3" width="1" height="7.5" fill="#30e830"/>
<rect x="435" y="486.8" width="1" height="22.5" fill="#00ff00"/>
<rect x="436" y="486.8" width="1" height="22.5" fill="#00ff00"/>
<rect x="436" y="509.4" width="1" height="7.5" fill="#30e830"/>
<rect x="437" y="486.8" width="1" height="22.5" fill="#00ff00"/>
<rect x="438" y="486.8" width="1" height="22.5" fill="#00ff00"/>
<rect x="438" y="509.4" width="1" height="7.5" fill="#30e830"/>
<rect x="439" y="486.8" width="1" height="22.5" fill="#00ff00"/>
<rect x="440" y="486.8" width="1" height="22.5" fill="#00ff00"/>
<rect x="441" y="486.8" width="1" height="22.5" fill="#00ff00"/>
<rect x="442" y="486.8" width="1" height="22.5" fill="#00ff00"/>
<rect x="442" y="509.4" width="1" height="15.0" fill="#30e830"/>
<rect x="443" y="486.8" width="1" height="22.5" fill="#00ff00"/>
<rect x="443" y="509.4" width="1" height="7.5" fill="#30e830"/>
<rect x="444" y="486.8" width="1" height="22.5" fill="#00ff00"/>
<rect x="444" y="509.4" width="1" height="7.5" fill="#30e830"/>
<rect x="445" y="486.8" width="1" height="22.5" fill="#00ff00"/>
<rect x="445" y="509.4" width="1" height="7.5" fill="#30e830"/>
<rect x="446" y="486.8" width="1" height="22.5" fill="#00ff00"/>
<rect x="447" y="479.3" width="1" height="15.0" fill="#00ff00"/>
<rect x="447" y="494.3" width="1" height="7.5" fill="#30e830"/>
<rect x="448" y="479.3" width="1" height="15.0" fill="#00ff00"/>
<rect x="448" y="494.3" width="1" height="15.0" fill="#30e830"/>
<rect x="449" y="479.3" width="1" height="15.0" fill="#00ff00"/>
<rect x="450" y="479.3" width="1" height="15.0" fill="#00ff00"/>
<rect x="451" y="479.3" width="1" height="15.0" fill="#00ff00"/>
<rect x="452" y="479.3" width="1" height="15.0" fill="#00ff00"/>
<rect x="452" y="494.3" width="1" height="15.0" fill="#30e830"/>
<rect x="453" y="479.3" width="1" height="15.0" fill="#00ff00"/>
<rect x="453" y="494.3" width="1" height="7.5" fill="#30e830"/>
<rect x="454" y="479.3" width="1" height="15.0" fill="#00ff00"/>
<rect x="455" y="479.3" width="1" height="15.0" fill="#00ff00"/>
<rect x="455" y="494.3" width="1" height="15.0" fill="#30e830"/>
<rect x="456" y="479.3" width="1" height="15.0" fill="#00ff00"/>
<rect x="456" y="494.3" width="1" height="7.5" fill="#30e830"/>
<rect x="457" y="479.3" width="1" height="15.0" fill="#00ff00"/>
<rect x="458" y="479.3" width="1" height="15.0" fill="#00ff00"/>
<rect x="459" y="479.3" width="1" height="15.0" fill="#00ff00"/>
<rect x="459" y="494.3" width="1" height="7.5" fill="#30e830"/>
<rect x="460" y="479.3" width="1" height="15.0" fill="#00ff00"/>
<rect x="460" y="494.3" width="1" height="7.5" fill="#30e830"/>
<rect x="461" y="479.3" width="1" height="15.0" fill="#00ff00"/>
<rect x="462" y="471.8" width="1" height="15.0" fill="#00ff00"/>
<rect x="462" y="486.8" width="1" height="15.0" fill="#30e830"/>
<rect x="463" y="471.8" width="1" height="15.0" fill="#00ff00"/>
<rect x="464" y="471.8" width="1" height="15.0" fill="#00ff00"/>
<rect x="465" y="471.8" width="1" height="15.0" fill="#00ff00"/>
<rect x="465" y="486.8" width="1" height="7.5" fill="#30e830"/>
<rect x="466" y="471.8" width="1" height="15.0" fill="#00ff00"/>
<rect x="467" y="471.8" width="1" height="15.0" fill="#00ff00"/>
<rect x="467" y="486.8" width="1" height="7.5" fill="#30e830"/>
<rect x="468" y="471.8" width="1" height="15.0" fill="#00ff00"/>
<rect x="468" y="486.8" width="1" height="7.5" fill="#30e830"/>
<rect x="469" y="471.8" width="1" height="15.0" fill="#00ff00"/>
<rect x="470" y="471.8" width="1" height="15.0" fill="#00ff00"/>
<rect x="470" y="486.8" width="1" height="7.5" fill="#30e830"/>
<rect x="471" y="471.8" width="1" height="15.0" fill="#00ff00"/>
<rect x="472" y="471.8" width="1" height="15.0" fill="#00ff00"/>
<rect x="473" y="471.8" width="1" height="15.0" fill="#00ff00"/>
<rect x="473" y="486.8" width="1" height="7.5" fill="#30e830"/>
<rect x="474" y="471.8" width="1" height="15.0" fill="#00ff00"/>
<rect x="475" y="471.8" width="1" height="15.0" fill="#00ff00"/>
<rect x="476" y="471.8" width="1" height="15.0" fill="#00ff00"/>
<rect x="476" y="486.8" width="1" height="7.5" fill="#30e830"/>
<rect x="477" y="471.8" width="1" height="15.0" fill="#00ff00"/>
<rect x="477" y="486.8" width="1" height="7.5" fill="#30e830"/>
<rect x="478" y="471.8" width="1" height="15.0" fill="#00ff00"/>
<rect x="479" y="471.8" width="1" height="15.0" fill="#00ff00"/>
<rect x="479" y="486.8" width="1" height="22.5" fill="#30e830"/>
<rect x="480" y="486.8" width="1" height="0.0" fill="#00ff00"/>
<rect x="481" y="479.3" width="1" height="7.5" fill="#00ff00"/>
<rect x="481" y="486.8" width="1" height="7.5" fill="#30e830"/>
<rect x="482" y="479.3" width="1" height="7.5" fill="#00ff00"/>
<rect x="483" y="479.3" width="1" height="7.5" fill="#00ff00"/>
<rect x="484" y="479.3" width="1" height="7.5" fill="#00ff00"/>
<rect x="484" y="486.8" width="1" height="22.5" fill="#30e830"/>
<rect x="485" y="479.3" width="1" height="7.5" fill="#00ff00"/>
<rect x="485" y="486.8" width="1" height="7.5" fill="#30e830"/>
<rect x="486" y="479.3" width="1" height="7.5" fill="#00ff00"/>
<rect x="487" y="479.3" width="1" height="7.5" fill="#00ff00"/>
<rect x="488" y="479.3" width="1" height="7.5" fill="#00ff00"/>
<rect x="489" y="479.3" width="1" height="7.5" fill="#00ff00"/>
<rect x="490" y="479.3" width="1" height="7.5" fill="#00ff00"/>
<rect x="491" y="486.8" width="1" height="15.0" fill="#00ff00"/>
<rect x="491" y="501.9" width="1" height="7.5" fill="#30e830"/>
<rect x="492" y="486.8" width="1" height="15.0" fill="#00ff00"/>
<rect x="492" y="501.9" width="1" height="15.0" fill="#30e830"/>
<rect x="493" y="486.8" width="1" height="15.0" fill="#00ff00"/>
<rect x="494" y="486.8" width="1" height="15.0" fill="#00ff00"/>
<rect x="495" y="494.3" width="1" height="7.5" fill="#00ff00"/>
<rect x="496" y="486.8" width="1" height="15.0" fill="#00ff00"/>
<rect x="497" y="486.8" width="1" height="15.0" fill="#00ff00"/>
<rect x="497" y="501.9" width="1" height="15.0" fill="#30e830"/>
<rect x="498" y="486.8" width="1" height="15.0" fill="#00ff00"/>
<rect x="499" y="486.8" width="1" height="15.0" fill="#00ff00"/>
<rect x="499" y="501.9" width="1" height="7.5" fill="#30e830"/>
<rect x="500" y="486.8" width="1" height="15.0" fill="#00ff00"/>
<rect x="500" y="501.9" width="1" height="7.5" fill="#30e830"/>
<rect x="501" y="486.8" width="1" height="15.0" fill="#00ff00"/>
<rect x="501" y="501.9" width="1" height="15.0" fill="#30e830"/>
<rect x="502" y="486.8" width="1" height="15.0" fill="#00ff00"/>
<rect x="502" y="501.9" width="1" height="7.5" fill="#30e830"/>
<rect x="503" y="486.8" width="1" height="15.0" fill="#00ff00"/>
<rect x="503" y="501.9" width="1" height="7.5" fill="#30e830"/>
<rect x="504" y="486.8" width="1" height="15.0" fill="#00ff00"/>
<rect x="504" y="501.9" width="1" height="7.5" fill="#30e830"/>
<rect x="505" y="486.8" width="1" height="15.0" fill="#00ff00"/>
<rect x="506" y="486.8" width="1" height="15.0" fill="#00ff00"/>
<rect x="506" y="501.9" width="1" height="7.5" fill="#30e830"/>
<rect x="507" y="486.8" width="1" height="15.0" fill="#00ff00"/>
<rect x="508" y="479.3" width="1" height="15.0" fill="#00ff00"/>
<rect x="509" y="479.3" width="1" height="15.0" fill="#00ff00"/>
<rect x="509" y="494.3" width="1" height="7.5" fill="#30e830"/>
<rect x="510" y="479.3" width="1" height="15.0" fill="#00ff00"/>
<rect x="511" y="479.3" width="1" height="15.0" fill="#00ff00"/>
<rect x="512" y="479.3" width="1" height="15.0" fill="#00ff00"/>
<rect x="512" y="494.3" width="1" height="7.5" fill="#30e830"/>
<rect x="513" y="479.3" width="1" height="15.0" fill="#00ff00"/>
<rect x="514" y="479.3" width="1" height="15.0" fill="#00ff00"/>
<rect x="514" y="494.3" width="1" height="7.5" fill="#30e830"/>
<rect x="515" y="479.3" width="1" height="15.0" fill="#00ff00"/>
<rect x="515" y="494.3" width="1" height="7.5" fill="#30e830"/>
<rect x="516" y="479.3" width="1" height="15.0" fill="#00ff00"/>
<rect x="516" y="494.3" width="1" height="7.5" fill="#30e830"/>
<rect x="517" y="479.3" width="1" height="15.0" fill="#00ff00"/>
<rect x="517" y="494.3" width="1" height="7.5" fill="#30e830"/>
<rect x="518" y="479.3" width="1" height="15.0" fill="#00ff00"/>
<rect x="519" y="479.3" width="1" height="15.0" fill="#00ff00"/>
<rect x="519" y="494.3" width="1" height="7.5" fill="#30e830"/>
<rect x="520" y="479.3" width="1" height="15.0" fill="#00ff00"/>
<rect x="520" y="494.3" width="1" height="7.5" fill="#30e830"/>
<rect x="521" y="479.3" width="1" height="15.0" fill="#00ff00"/>
<rect x="522" y="479.3" width="1" height="15.0" fill="#00ff00"/>
<rect x="523" y="479.3" width="1" height="15.0" fill="#00ff00"/>
<rect x="524" y="479.3" width="1" height="15.0" fill="#00ff00"/>
<rect x="525" y="479.3" width="1" height="15.0" fill="#00ff00"/>
<rect x="525" y="494.3" width="1" height="15.0" fill="#30e830"/>
<rect x="526" y="479.3" width="1" height="15.0" fill="#00ff00"/>
<rect x="526" y="494.3" width="1" height="7.5" fill="#30e830"/>
<rect x="527" y="479.3" width="1" height="15.0" fill="#00ff00"/>
<rect x="528" y="479.3" width="1" height="15.0" fill="#00ff00"/>
<rect x="529" y="486.8" width="1" height="7.5" fill="#00ff00"/>
<rect x="529" y="494.3" width="1" height="7.5" fill="#30e830"/>
<rect x="530" y="479.3" width="1" height="15.0" fill="#00ff00"/>
<rect x="530" y="494.3" width="1" height="15.0" fill="#30e830"/>
<rect x="531" y="479.3" width="1" height="15.0" fill="#00ff00"/>
<rect x="531" y="494.3" width="1" height="7.5" fill="#30e830"/>
<rect x="532" y="486.8" width="1" height="7.5" fill="#00ff00"/>
<rect x="532" y="494.3" width="1" height="7.5" fill="#30e830"/>
<rect x="532" y="479.3" width="1" height="7.5" fill="#30e830"/>
<rect x="533" y="486.8" width="1" height="7.5" fill="#00ff00"/>
<rect x="533" y="494.3" width="1" height="7.5" fill="#30e830"/>
<rect x="534" y="486.8" width="1" height="7.5" fill="#00ff00"/>
<rect x="535" y="486.8" width="1" height="7.5" fill="#00ff00"/>
<rect x="536" y="486.8" width="1" height="7.5" fill="#00ff00"/>
<rect x="537" y="486.8" width="1" height="7.5" fill="#00ff00"/>
<rect x="537" y="494.3" width="1" height="7.5" fill="#30e830"/>
<rect x="538" y="486.8" width="1" height="7.5" fill="#00ff00"/>
<rect x="539" y="486.8" width="1" height="7.5" fill="#00ff00"/>
<rect x="539" y="494.3" width="1" height="7.5" fill="#30e830"/>
<rect x="540" y="486.8" width="1" height="7.5" fill="#00ff00"/>
<rect x="540" y="494.3" width="1" height="7.5" fill="#30e830"/>
<rect x="541" y="486.8" width="1" height="7.5" fill="#00ff00"/>
<rect x="542" y="486.8" width="1" height="7.5" fill="#00ff00"/>
<rect x="543" y="486.8" width="1" height="7.5" fill="#00ff00"/>
<rect x="543" y="494.3" width="1" height="15.0" fill="#30e830"/>
<rect x="544" y="486.8" width="1" height="7.5" fill="#00ff00"/>
<rect x="544" y="479.3" width="1" height="7.5" fill="#30e830"/>
<rect x="545" y="486.8" width="1" height="7.5" fill="#00ff00"/>
<rect x="546" y="486.8" width="1" height="7.5" fill="#00ff00"/>
<rect x="547" y="486.8" width="1" height="7.5" fill="#00ff00"/>
<rect x="548" y="486.8" width="1" height="7.5" fill="#00ff00"/>
<rect x="548" y="494.3" width="1" height="7.5" fill="#30e830"/>
<rect x="549" y="486.8" width="1" height="7.5" fill="#00ff00"/>
<rect x="550" y="494.3" width="1" height="0.0" fill="#00ff00"/>
<rect x="551" y="479.3" width="1" height="15.0" fill="#00ff00"/>
<rect x="552" y="479.3" width="1" height="15.0" fill="#00ff00"/>
<rect x="552" y="494.3" width="1" height="7.5" fill="#30e830"/>
<rect x="553" y="486.8" width="1" height="7.5" fill="#00ff00"/>
<rect x="553" y="494.3" width="1" height="7.5" fill="#30e830"/>
<rect x="554" y="479.3" width="1" height="15.0" fill="#00ff00"/>
<rect x="555" y="479.3" width="1" height="15.0" fill="#00ff00"/>
<rect x="556" y="479.3" width="1" height="15.0" fill="#00ff00"/>
<rect x="557" y="479.3" width="1" height="15.0" fill="#00ff00"/>
<rect x="558" y="479.3" width="1" height="7.5" fill="#00ff00"/>
<rect x="558" y="486.8" width="1" height="7.5" fill="#30e830"/>
<rect x="559" y="479.3" width="1" height="7.5" fill="#00ff00"/>
<rect x="560" y="479.3" width="1" height="7.5" fill="#00ff00"/>
<rect x="560" y="486.8" width="1" height="7.5" fill="#30e830"/>
<rect x="561" y="479.3" width="1" height="7.5" fill="#00ff00"/>
<rect x="561" y="486.8" width="1" height="7.5" fill="#30e830"/>
<rect x="562" y="479.3" width="1" height="7.5" fill="#00ff00"/>
<rect x="563" y="479.3" width="1" height="7.5" fill="#00ff00"/>
<rect x="563" y="486.8" width="1" height="22.5" fill="#30e830"/>
<rect x="564" y="479.3" width="1" height="7.5" fill="#00ff00"/>
<rect x="565" y="479.3" width="1" height="7.5" fill="#00ff00"/>
<rect x="566" y="479.3" width="1" height="7.5" fill="#00ff00"/>
<rect x="567" y="479.3" width="1" height="7.5" fill="#00ff00"/>
<rect x="567" y="486.8" width="1" height="7.5" fill="#30e830"/>
<rect x="568" y="479.3" width="1" height="7.5" fill="#00ff00"/>
<rect x="569" y="479.3" width="1" height="7.5" fill="#00ff00"/>
<rect x="569" y="486.8" width="1" height="7.5" fill="#30e830"/>
<rect x="570" y="479.3" width="1" height="7.5" fill="#00ff00"/>
<rect x="571" y="479.3" width="1" height="7.5" fill="#00ff00"/>
<rect x="571" y="486.8" width="1" height="7.5" fill="#30e830"/>
<rect x="572" y="479.3" width="1" height="7.5" fill="#00ff00"/>
<rect x="573" y="479.3" width="1" height="7.5" fill="#00ff00"/>
<rect x="573" y="486.8" width="1" height="7.5" fill="#30e830"/>
<rect x="574" y="479.3" width="1" height="7.5" fill="#00ff00"/>
<rect x="575" y="479.3" width="1" height="7.5" fill="#00ff00"/>
<rect x="575" y="486.8" width="1" height="7.5" fill="#30e830"/>
<rect x="576" y="479.3" width="1" height="7.5" fill="#00ff00"/>
<rect x="577" y="486.8" width="1" height="7.5" fill="#00ff00"/>
<rect x="578" y="486.8" width="1" height="7.5" fill="#00ff00"/>
<rect x="578" y="494.3" width="1" height="7.5" fill="#30e830"/>
<rect x="579" y="486.8" width="1" height="7.5" fill="#00ff00"/>
<rect x="579" y="494.3" width="1" height="7.5" fill="#30e830"/>
<rect x="580" y="494.3" width="1" height="0.0" fill="#00ff00"/>
<rect x="580" y="494.3" width="1" height="7.5" fill="#30e830"/>
<rect x="581" y="486.8" width="1" height="7.5" fill="#00ff00"/>
<rect x="581" y="494.3" width="1" height="15.0" fill="#30e830"/>
<rect x="582" y="486.8" width="1" height="7.5" fill="#00ff00"/>
<rect x="583" y="486.8" width="1" height="7.5" fill="#00ff00"/>
<rect x="583" y="494.3" width="1" height="7.5" fill="#30e830"/>
<rect x="584" y="486.8" width="1" height="7.5" fill="#00ff00"/>
<rect x="585" y="486.8" width="1" height="7.5" fill="#00ff00"/>
<rect x="586" y="486.8" width="1" height="7.5" fill="#00ff00"/>
<rect x="586" y="494.3" width="1" height="7.5" fill="#30e830"/>
<rect x="587" y="486.8" width="1" height="7.5" fill="#00ff00"/>
<rect x="587" y="494.3" width="1" height="7.5" fill="#30e830"/>
<rect x="588" y="486.8" width="1" height="7.5" fill="#00ff00"/>
<rect x="588" y="479.3" width="1" height="7.5" fill="#30e830"/>
<rect x="589" y="486.8" width="1" height="7.5" fill="#00ff00"/>
<rect x="589" y="494.3" width="1" height="22.5" fill="#30e830"/>
<rect x="590" y="486.8" width="1" height="7.5" fill="#00ff00"/>
<rect x="590" y="494.3" width="1" height="22.5" fill="#30e830"/>
<rect x="591" y="486.8" width="1" height="7.5" fill="#00ff00"/>
<rect x="591" y="494.3" width="1" height="7.5" fill="#30e830"/>
<rect x="592" y="486.8" width="1" height="7.5" fill="#00ff00"/>
<rect x="592" y="494.3" width="1" height="7.5" fill="#30e830"/>
<rect x="593" y="486.8" width="1" height="7.5" fill="#00ff00"/>
<rect x="593" y="494.3" width="1" height="7.5" fill="#30e830"/>
<rect x="594" y="486.8" width="1" height="7.5" fill="#00ff00"/>
<rect x="595" y="486.8" width="1" height="7.5" fill="#00ff00"/>
<rect x="596" y="486.8" width="1" height="7.5" fill="#00ff00"/>
<rect x="596" y="494.3" width="1" height="15.0" fill="#30e830"/>
<rect x="597" y="494.3" width="1" height="7.5" fill="#00ff00"/>
<rect x="598" y="494.3" width="1" height="7.5" fill="#00ff00"/>
<rect x="598" y="501.9" width="1" height="7.5" fill="#30e830"/>
<rect x="599" y="494.3" width="1" height="7.5" fill="#00ff00"/>
<rect x="599" y="501.9" width="1" height="15.0" fill="#30e830"/>
<rect x="600" y="494.3" width="1" height="7.5" fill="#00ff00"/>
<rect x="600" y="501.9" width="1" height="22.5" fill="#30e830"/>
<rect x="601" y="501.9" width="1" height="7.5" fill="#00ff00"/>
<rect x="602" y="501.9" width="1" height="7.5" fill="#00ff00"/>
<rect x="602" y="509.4" width="1" height="7.5" fill="#30e830"/>
<rect x="603" y="501.9" width="1" height="7.5" fill="#00ff00"/>
<rect x="604" y="501.9" width="1" height="7.5" fill="#00ff00"/>
<rect x="604" y="509.4" width="1" height="15.0" fill="#30e830"/>
<rect x="605" y="501.9" width="1" height="7.5" fill="#00ff00"/>
<rect x="605" y="509.4" width="1" height="7.5" fill="#30e830"/>
<rect x="606" y="501.9" width="1" height="7.5" fill="#00ff00"/>
<rect x="606" y="509.4" width="1" height="7.5" fill="#30e830"/>
<rect x="607" y="501.9" width="1" height="7.5" fill="#00ff00"/>
<rect x="608" y="501.9" width="1" height="7.5" fill="#00ff00"/>
<rect x="608" y="509.4" width="1" height="7.5" fill="#30e830"/>
<rect x="609" y="501.9" width="1" height="7.5" fill="#00ff00"/>
<rect x="610" y="501.9" width="1" height="7.5" fill="#00ff00"/>
<rect x="610" y="509.4" width="1" height="7.5" fill="#30e830"/>
<rect x="611" y="509.4" width="1" height="15.0" fill="#00ff00"/>
<rect x="611" y="524.4" width="1" height="7.5" fill="#30e830"/>
<rect x="612" y="509.4" width="1" height="15.0" fill="#00ff00"/>
<rect x="612" y="524.4" width="1" height="15.0" fill="#30e830"/>
<rect x="613" y="509.4" width="1" height="15.0" fill="#00ff00"/>
<rect x="614" y="509.4" width="1" height="15.0" fill="#00ff00"/>
<rect x="615" y="509.4" width="1" height="15.0" fill="#00ff00"/>
<rect x="615" y="524.4" width="1" height="15.0" fill="#30e830"/>
<rect x="616" y="509.4" width="1" height="15.0" fill="#00ff00"/>
<rect x="617" y="509.4" width="1" height="15.0" fill="#00ff00"/>
<rect x="618" y="509.4" width="1" height="15.0" fill="#00ff00"/>
<rect x="619" y="509.4" width="1" height="15.0" fill="#00ff00"/>
<rect x="620" y="509.4" width="1" height="15.0" fill="#00ff00"/>
<rect x="621" y="509.4" width="1" height="15.0" fill="#00ff00"/>
<rect x="622" y="509.4" width="1" height="15.0" fill="#00ff00"/>
<rect x="623" y="509.4" width="1" height="15.0" fill="#00ff00"/>
<rect x="624" y="509.4" width="1" height="15.0" fill="#00ff00"/>
<rect x="625" y="509.4" width="1" height="15.0" fill="#00ff00"/>
<rect x="626" y="509.4" width="1" height="15.0" fill="#00ff00"/>
<rect x="626" y="524.4" width="1" height="7.5" fill="#30e830"/>
<rect x="627" y="509.4" width="1" height="15.0" fill="#00ff00"/>
<rect x="628" y="516.9" width="1" height="7.5" fill="#00ff00"/>
<rect x="629" y="516.9" width="1" height="7.5" fill="#00ff00"/>
<rect x="630" y="516.9" width="1" height="7.5" fill="#00ff00"/>
<rect x="631" y="516.9" width="1" height="7.5" fill="#00ff00"/>
<rect x="631" y="524.4" width="1" height="7.5" fill="#30e830"/>
<rect x="632" y="516.9" width="1" height="7.5" fill="#00ff00"/>
<rect x="633" y="516.9" width="1" height="7.5" fill="#00ff00"/>
<rect x="634" y="516.9" width="1" height="7.5" fill="#00ff00"/>
<rect x="635" y="509.4" width="1" height="15.0" fill="#00ff00"/>
<rect x="635" y="524.4" width="1" height="15.0" fill="#30e830"/>
<rect x="636" y="509.4" width="1" height="15.0" fill="#00ff00"/>
<rect x="637" y="509.4" width="1" height="15.0" fill="#00ff00"/>
<rect x="637" y="524.4" width="1" height="7.5" fill="#30e830"/>
<rect x="638" y="509.4" width="1" height="15.0" fill="#00ff00"/>
<rect x="638" y="524.4" width="1" height="7.5" fill="#30e830"/>
<rect x="639" y="509.4" width="1" height="15.0" fill="#00ff00"/>
<rect x="639" y="524.4" width="1" height="7.5" fill="#30e830"/>
<rect x="640" y="509.4" width="1" height="15.0" fill="#00ff00"/>
<rect x="641" y="509.4" width="1" height="15.0" fill="#00ff00"/>
<rect x="641" y="524.4" width="1" height="7.5" fill="#30e830"/>
<rect x="642" y="509.4" width="1" height="15.0" fill="#00ff00"/>
<rect x="643" y="509.4" width="1" height="15.0" fill="#00ff00"/>
<rect x="643" y="524.4" width="1" height="15.0" fill="#30e830"/>
<rect x="644" y="509.4" width="1" height="15.0" fill="#00ff00"/>
<rect x="645" y="509.4" width="1" height="15.0" fill="#00ff00"/>
<rect x="645" y="524.4" width="1" height="22.5" fill="#30e830"/>
<rect x="646" y="509.4" width="1" height="15.0" fill="#00ff00"/>
<rect x="647" y="509.4" width="1" height="15.0" fill="#00ff00"/>
<rect x="648" y="509.4" width="1" height="15.0" fill="#00ff00"/>
<rect x="648" y="524.4" width="1" height="7.5" fill="#30e830"/>
<rect x="649" y="509.4" width="1" height="15.0" fill="#00ff00"/>
<rect x="650" y="509.4" width="1" height="15.0" fill="#00ff00"/>
<rect x="650" y="524.4" width="1" height="7.5" fill="#30e830"/>
<rect x="651" y="509.4" width="1" height="15.0" fill="#00ff00"/>
<rect x="651" y="524.4" width="1" height="15.0" fill="#30e830"/>
<rect x="652" y="516.9" width="1" height="7.5" fill="#00ff00"/>
<rect x="653" y="509.4" width="1" height="15.0" fill="#00ff00"/>
<rect x="653" y="524.4" width="1" height="7.5" fill="#30e830"/>
<rect x="654" y="509.4" width="1" height="15.0" fill="#00ff00"/>
<rect x="655" y="509.4" width="1" height="15.0" fill="#00ff00"/>
<rect x="656" y="509.4" width="1" height="15.0" fill="#00ff00"/>
<rect x="657" y="509.4" width="1" height="15.0" fill="#00ff00"/>
<rect x="657" y="524.4" width="1" height="7.5" fill="#30e830"/>
<rect x="658" y="509.4" width="1" height="15.0" fill="#00ff00"/>
<rect x="658" y="524.4" width="1" height="7.5" fill="#30e830"/>
<rect x="658" y="501.9" width="1" height="7.5" fill="#30e830"/>
<rect x="659" y="509.4" width="1" height="15.0" fill="#00ff00"/>
<rect x="660" y="501.9" width="1" height="15.0" fill="#00ff00"/>
<rect x="660" y="516.9" width="1" height="7.5" fill="#30e830"/>
<rect x="661" y="501.9" width="1" height="15.0" fill="#00ff00"/>
<rect x="661" y="516.9" width="1" height="7.5" fill="#30e830"/>
<rect x="662" y="501.9" width="1" height="15.0" fill="#00ff00"/>
<rect x="663" y="501.9" width="1" height="15.0" fill="#00ff00"/>
<rect x="664" y="501.9" width="1" height="15.0" fill="#00ff00"/>
<rect x="665" y="501.9" width="1" height="15.0" fill="#00ff00"/>
<rect x="665" y="516.9" width="1" height="7.5" fill="#30e830"/>
<rect x="666" y="501.9" width="1" height="15.0" fill="#00ff00"/>
<rect x="667" y="501.9" width="1" height="15.0" fill="#00ff00"/>
<rect x="668" y="501.9" width="1" height="15.0" fill="#00ff00"/>
<rect x="668" y="516.9" width="1" height="7.5" fill="#30e830"/>
<rect x="669" y="501.9" width="1" height="15.0" fill="#00ff00"/>
<rect x="669" y="516.9" width="1" height="22.5" fill="#30e830"/>
<rect x="670" y="501.9" width="1" height="15.0" fill="#00ff00"/>
<rect x="670" y="516.9" width="1" height="22.5" fill="#30e830"/>
<rect x="671" y="501.9" width="1" height="15.0" fill="#00ff00"/>
<rect x="671" y="516.9" width="1" height="7.5" fill="#30e830"/>
<rect x="672" y="501.9" width="1" height="15.0" fill="#00ff00"/>
<rect x="673" y="501.9" width="1" height="15.0" fill="#00ff00"/>
<rect x="673" y="516.9" width="1" height="15.0" fill="#30e830"/>
<rect x="674" y="501.9" width="1" height="15.0" fill="#00ff00"/>
<rect x="674" y="516.9" width="1" height="7.5" fill="#30e830"/>
<rect x="675" y="501.9" width="1" height="15.0" fill="#00ff00"/>
<rect x="675" y="516.9" width="1" height="7.5" fill="#30e830"/>
<rect x="676" y="501.9" width="1" height="15.0" fill="#00ff00"/>
<rect x="677" y="486.8" width="1" height="30.0" fill="#00ff00"/>
<rect x="678" y="486.8" width="1" height="30.0" fill="#00ff00"/>
<rect x="678" y="516.9" width="1" height="7.5" fill="#30e830"/>
<rect x="679" y="486.8" width="1" height="30.0" fill="#00ff00"/>
<rect x="679" y="516.9" width="1" height="7.5" fill="#30e830"/>
<rect x="680" y="486.8" width="1" height="30.0" fill="#00ff00"/>
<rect x="680" y="516.9" width="1" height="22.5" fill="#30e830"/>
<rect x="681" y="494.3" width="1" height="37.6" fill="#00ff00"/>
<rect x="681" y="531.9" width="1" height="7.5" fill="#30e830"/>
<rect x="682" y="494.3" width="1" height="37.6" fill="#00ff00"/>
<rect x="683" y="494.3" width="1" height="37.6" fill="#00ff00"/>
<rect x="684" y="494.3" width="1" height="37.6" fill="#00ff00"/>
<rect x="684" y="531.9" width="1" height="7.5" fill="#30e830"/>
<rect x="685" y="479.3" width="1" height="15.0" fill="#00ff00"/>
<rect x="686" y="479.3" width="1" height="15.0" fill="#00ff00"/>
<rect x="686" y="494.3" width="1" height="7.5" fill="#30e830"/>
<rect x="687" y="479.3" width="1" height="15.0" fill="#00ff00"/>
<rect x="688" y="479.3" width="1" height="15.0" fill="#00ff00"/>
<rect x="689" y="479.3" width="1" height="15.0" fill="#00ff00"/>
<rect x="689" y="494.3" width="1" height="7.5" fill="#30e830"/>
<rect x="690" y="486.8" width="1" height="7.5" fill="#00ff00"/>
<rect x="690" y="494.3" width="1" height="7.5" fill="#30e830"/>
<rect x="691" y="479.3" width="1" height="15.0" fill="#00ff00"/>
<rect x="692" y="479.3" width="1" height="15.0" fill="#00ff00"/>
<rect x="693" y="479.3" width="1" height="15.0" fill="#00ff00"/>
<rect x="694" y="479.3" width="1" height="15.0" fill="#00ff00"/>
<rect x="694" y="494.3" width="1" height="7.5" fill="#30e830"/>
<rect x="695" y="479.3" width="1" height="15.0" fill="#00ff00"/>
<rect x="696" y="479.3" width="1" height="15.0" fill="#00ff00"/>
<rect x="696" y="494.3" width="1" height="7.5" fill="#30e830"/>
<rect x="697" y="479.3" width="1" height="15.0" fill="#00ff00"/>
<rect x="698" y="479.3" width="1" height="15.0" fill="#00ff00"/>
<rect x="699" y="479.3" width="1" height="15.0" fill="#00ff00"/>
<rect x="699" y="494.3" width="1" height="7.5" fill="#30e830"/>
<rect x="700" y="479.3" width="1" height="15.0" fill="#00ff00"/>
<rect x="700" y="494.3" width="1" height="15.0" fill="#30e830"/>
<rect x="701" y="479.3" width="1" height="15.0" fill="#00ff00"/>
<rect x="701" y="494.3" width="1" height="7.5" fill="#30e830"/>
<rect x="702" y="486.8" width="1" height="7.5" fill="#00ff00"/>
<rect x="702" y="494.3" width="1" height="7.5" fill="#30e830"/>
<rect x="703" y="479.3" width="1" height="15.0" fill="#00ff00"/>
<rect x="704" y="486.8" width="1" height="7.5" fill="#00ff00"/>
<rect x="704" y="494.3" width="1" height="15.0" fill="#30e830"/>
<rect x="705" y="479.3" width="1" height="15.0" fill="#00ff00"/>
<rect x="706" y="479.3" width="1" height="15.0" fill="#00ff00"/>
<rect x="706" y="494.3" width="1" height="7.5" fill="#30e830"/>
<rect x="707" y="479.3" width="1" height="15.0" fill="#00ff00"/>
<rect x="707" y="494.3" width="1" height="7.5" fill="#30e830"/>
<rect x="707" y="471.8" width="1" height="7.5" fill="#30e830"/>
<rect x="708" y="486.8" width="1" height="7.5" fill="#00ff00"/>
<rect x="709" y="479.3" width="1" height="15.0" fill="#00ff00"/>
<rect x="709" y="494.3" width="1" height="7.5" fill="#30e830"/>
<rect x="710" y="479.3" width="1" height="15.0" fill="#00ff00"/>
<rect x="710" y="494.3" width="1" height="7.5" fill="#30e830"/>
<rect x="711" y="479.3" width="1" height="15.0" fill="#00ff00"/>
<rect x="712" y="479.3" width="1" height="15.0" fill="#00ff00"/>
<rect x="713" y="479.3" width="1" height="15.0" fill="#00ff00"/>
<rect x="714" y="479.3" width="1" height="15.0" fill="#00ff00"/>
<rect x="715" y="479.3" width="1" height="15.0" fill="#00ff00"/>
<rect x="715" y="494.3" width="1" height="7.5" fill="#30e830"/>
<rect x="716" y="479.3" width="1" height="15.0" fill="#00ff00"/>
<rect x="716" y="494.3" width="1" height="7.5" fill="#30e830"/>
<rect x="716" y="471.8" width="1" height="7.5" fill="#30e830"/>
<rect x="717" y="479.3" width="1" height="15.0" fill="#00ff00"/>
<rect x="718" y="479.3" width="1" height="15.0" fill="#00ff00"/>
<rect x="719" y="479.3" width="1" height="15.0" fill="#00ff00"/>
<rect x="719" y="494.3" width="1" height="22.5" fill="#30e830"/>
<rect x="720" y="479.3" width="1" height="15.0" fill="#00ff00"/>
<rect x="721" y="479.3" width="1" height="15.0" fill="#00ff00"/>
<rect x="721" y="494.3" width="1" height="7.5" fill="#30e830"/>
<rect x="722" y="479.3" width="1" height="15.0" fill="#00ff00"/>
<rect x="723" y="479.3" width="1" height="15.0" fill="#00ff00"/>
<rect x="723" y="494.3" width="1" height="15.0" fill="#30e830"/>
<rect x="724" y="479.3" width="1" height="15.0" fill="#00ff00"/>
<rect x="725" y="479.3" width="1" height="15.0" fill="#00ff00"/>
<rect x="725" y="494.3" width="1" height="7.5" fill="#30e830"/>
<rect x="726" y="479.3" width="1" height="15.0" fill="#00ff00"/>
<rect x="727" y="479.3" width="1" height="15.0" fill="#00ff00"/>
<rect x="728" y="479.3" width="1" height="15.0" fill="#00ff00"/>
<rect x="728" y="494.3" width="1" height="7.5" fill="#30e830"/>
<rect x="729" y="479.3" width="1" height="15.0" fill="#00ff00"/>
<rect x="729" y="494.3" width="1" height="15.0" fill="#30e830"/>
<rect x="730" y="479.3" width="1" height="15.0" fill="#00ff00"/>
<rect x="731" y="479.3" width="1" height="15.0" fill="#00ff00"/>
<rect x="731" y="494.3" width="1" height="7.5" fill="#30e830"/>
<rect x="732" y="479.3" width="1" height="15.0" fill="#00ff00"/>
<rect x="733" y="486.8" width="1" height="15.0" fill="#00ff00"/>
<rect x="733" y="501.9" width="1" height="7.5" fill="#30e830"/>
<rect x="734" y="486.8" width="1" height="15.0" fill="#00ff00"/>
<rect x="735" y="486.8" width="1" height="15.0" fill="#00ff00"/>
<rect x="736" y="486.8" width="1" height="15.0" fill="#00ff00"/>
<rect x="737" y="486.8" width="1" height="15.0" fill="#00ff00"/>
<rect x="738" y="486.8" width="1" height="15.0" fill="#00ff00"/>
<rect x="739" y="486.8" width="1" height="15.0" fill="#00ff00"/>
<rect x="740" y="486.8" width="1" height="15.0" fill="#00ff00"/>
<rect x="740" y="501.9" width="1" height="7.5" fill="#30e830"/>
<rect x="741" y="486.8" width="1" height="15.0" fill="#00ff00"/>
<rect x="742" y="486.8" width="1" height="15.0" fill="#00ff00"/>
<rect x="743" y="486.8" width="1" height="15.0" fill="#00ff00"/>
<rect x="744" y="486.8" width="1" height="15.0" fill="#00ff00"/>
<rect x="745" y="486.8" width="1" height="15.0" fill="#00ff00"/>
<rect x="745" y="501.9" width="1" height="7.5" fill="#30e830"/>
<rect x="746" y="486.8" width="1" height="15.0" fill="#00ff00"/>
<rect x="747" y="486.8" width="1" height="15.0" fill="#00ff00"/>
<rect x="747" y="501.9" width="1" height="15.0" fill="#30e830"/>
<rect x="748" y="486.8" width="1" height="15.0" fill="#00ff00"/>
<rect x="748" y="501.9" width="1" height="7.5" fill="#30e830"/>
<rect x="749" y="486.8" width="1" height="15.0" fill="#00ff00"/>
<rect x="749" y="501.9" width="1" height="7.5" fill="#30e830"/>
<rect x="750" y="486.8" width="1" height="15.0" fill="#00ff00"/>
<rect x="750" y="501.9" width="1" height="7.5" fill="#30e830"/>
<rect x="751" y="486.8" width="1" height="15.0" fill="#00ff00"/>
<rect x="752" y="494.3" width="1" height="7.5" fill="#00ff00"/>
<rect x="753" y="486.8" width="1" height="15.0" fill="#00ff00"/>
<rect x="754" y="486.8" width="1" height="15.0" fill="#00ff00"/>
<rect x="754" y="501.9" width="1" height="15.0" fill="#30e830"/>
<rect x="755" y="486.8" width="1" height="15.0" fill="#00ff00"/>
<rect x="756" y="486.8" width="1" height="15.0" fill="#00ff00"/>
<rect x="756" y="501.9" width="1" height="7.5" fill="#30e830"/>
<rect x="757" y="486.8" width="1" height="15.0" fill="#00ff00"/>
<rect x="757" y="501.9" width="1" height="7.5" fill="#30e830"/>
<rect x="758" y="486.8" width="1" height="15.0" fill="#00ff00"/>
<rect x="759" y="486.8" width="1" height="15.0" fill="#00ff00"/>
<rect x="760" y="486.8" width="1" height="15.0" fill="#00ff00"/>
<rect x="760" y="501.9" width="1" height="15.0" fill="#30e830"/>
<rect x="761" y="486.8" width="1" height="15.0" fill="#00ff00"/>
<rect x="761" y="501.9" width="1" height="7.5" fill="#30e830"/>
<rect x="762" y="486.8" width="1" height="15.0" fill="#00ff00"/>
<rect x="763" y="486.8" width="1" height="15.0" fill="#00ff00"/>
<rect x="763" y="501.9" width="1" height="15.0" fill="#30e830"/>
<rect x="764" y="486.8" width="1" height="15.0" fill="#00ff00"/>
<rect x="765" y="494.3" width="1" height="7.5" fill="#00ff00"/>
<rect x="765" y="501.9" width="1" height="7.5" fill="#30e830"/>
<rect x="766" y="486.8" width="1" height="15.0" fill="#00ff00"/>
<rect x="767" y="486.8" width="1" height="15.0" fill="#00ff00"/>
<rect x="768" y="486.8" width="1" height="15.0" fill="#00ff00"/>
<rect x="769" y="486.8" width="1" height="15.0" fill="#00ff00"/>
<rect x="770" y="486.8" width="1" height="15.0" fill="#00ff00"/>
<rect x="770" y="501.9" width="1" height="7.5" fill="#30e830"/>
<rect x="771" y="486.8" width="1" height="15.0" fill="#00ff00"/>
<rect x="771" y="501.9" width="1" height="7.5" fill="#30e830"/>
<rect x="772" y="486.8" width="1" height="15.0" fill="#00ff00"/>
<rect x="772" y="501.9" width="1" height="7.5" fill="#30e830"/>
<rect x="773" y="486.8" width="1" height="15.0" fill="#00ff00"/>
<rect x="773" y="501.9" width="1" height="7.5" fill="#30e830"/>
<rect x="774" y="486.8" width="1" height="15.0" fill="#00ff00"/>
<rect x="774" y="501.9" width="1" height="7.5" fill="#30e830"/>
<rect x="775" y="486.8" width="1" height="15.0" fill="#00ff00"/>
<rect x="775" y="501.9" width="1" height="7.5" fill="#30e830"/>
<rect x="776" y="486.8" width="1" height="15.0" fill="#00ff00"/>
<rect x="777" y="486.8" width="1" height="15.0" fill="#00ff00"/>
<rect x="777" y="501.9" width="1" height="7.5" fill="#30e830"/>
<rect x="778" y="486.8" width="1" height="15.0" fill="#00ff00"/>
<rect x="779" y="486.8" width="1" height="15.0" fill="#00ff00"/>
<rect x="779" y="501.9" width="1" height="15.0" fill="#30e830"/>
<rect x="780" y="486.8" width="1" height="15.0" fill="#00ff00"/>
<rect x="780" y="501.9" width="1" height="22.5" fill="#30e830"/>
<rect x="781" y="486.8" width="1" height="15.0" fill="#00ff00"/>
<rect x="781" y="501.9" width="1" height="7.5" fill="#30e830"/>
<rect x="782" y="486.8" width="1" height="15.0" fill="#00ff00"/>
<rect x="783" y="486.8" width="1" height="15.0" fill="#00ff00"/>
<rect x="783" y="501.9" width="1" height="7.5" fill="#30e830"/>
<rect x="784" y="486.8" width="1" height="15.0" fill="#00ff00"/>
<rect x="784" y="501.9" width="1" height="7.5" fill="#30e830"/>
<rect x="785" y="494.3" width="1" height="7.5" fill="#00ff00"/>
<rect x="785" y="501.9" width="1" height="7.5" fill="#30e830"/>
<rect x="786" y="494.3" width="1" height="7.5" fill="#00ff00"/>
<rect x="787" y="494.3" width="1" height="7.5" fill="#00ff00"/>
<rect x="787" y="501.9" width="1" height="7.5" fill="#30e830"/>
<rect x="788" y="494.3" width="1" height="7.5" fill="#00ff00"/>
<rect x="788" y="501.9" width="1" height="7.5" fill="#30e830"/>
<rect x="789" y="494.3" width="1" height="7.5" fill="#00ff00"/>
<rect x="789" y="501.9" width="1" height="7.5" fill="#30e830"/>
<rect x="790" y="494.3" width="1" height="7.5" fill="#00ff00"/>
<rect x="791" y="494.3" width="1" height="7.5" fill="#00ff00"/>
<rect x="791" y="501.9" width="1" height="7.5" fill="#30e830"/>
<rect x="792" y="494.3" width="1" height="7.5" fill="#00ff00"/>
<rect x="792" y="501.9" width="1" height="7.5" fill="#30e830"/>
<rect x="793" y="494.3" width="1" height="7.5" fill="#00ff00"/>
<rect x="793" y="486.8" width="1" height="7.5" fill="#30e830"/>
<rect x="794" y="494.3" width="1" height="7.5" fill="#00ff00"/>
<rect x="794" y="501.9" width="1" height="7.5" fill="#30e830"/>
<rect x="795" y="501.8" width="1" height="0.0" fill="#00ff00"/>
<rect x="796" y="494.3" width="1" height="7.5" fill="#00ff00"/>
<rect x="796" y="501.9" width="1" height="15.0" fill="#30e830"/>
<rect x="797" y="479.3" width="1" height="15.0" fill="#00ff00"/>
<rect x="798" y="479.3" width="1" height="15.0" fill="#00ff00"/>
<rect x="799" y="479.3" width="1" height="15.0" fill="#00ff00"/>
<rect x="799" y="494.3" width="1" height="7.5" fill="#30e830"/>
<rect x="800" y="479.3" width="1" height="15.0" fill="#00ff00"/>
<rect x="800" y="494.3" width="1" height="22.5" fill="#30e830"/>
<rect x="801" y="479.3" width="1" height="15.0" fill="#00ff00"/>
<rect x="802" y="479.3" width="1" height="15.0" fill="#00ff00"/>
<rect x="803" y="479.3" width="1" height="15.0" fill="#00ff00"/>
<rect x="804" y="479.3" width="1" height="15.0" fill="#00ff00"/>
<rect x="804" y="494.3" width="1" height="7.5" fill="#30e830"/>
<rect x="805" y="479.3" width="1" height="15.0" fill="#00ff00"/>
<rect x="806" y="479.3" width="1" height="15.0" fill="#00ff00"/>
<rect x="806" y="494.3" width="1" height="7.5" fill="#30e830"/>
<rect x="807" y="479.3" width="1" height="15.0" fill="#00ff00"/>
<rect x="808" y="479.3" width="1" height="15.0" fill="#00ff00"/>
<rect x="809" y="479.3" width="1" height="15.0" fill="#00ff00"/>
<rect x="809" y="494.3" width="1" height="15.0" fill="#30e830"/>
<rect x="810" y="486.8" width="1" height="7.5" fill="#00ff00"/>
<rect x="811" y="479.3" width="1" height="15.0" fill="#00ff00"/>
<rect x="811" y="494.3" width="1" height="7.5" fill="#30e830"/>
<rect x="812" y="479.3" width="1" height="15.0" fill="#00ff00"/>
<rect x="813" y="486.8" width="1" height="7.5" fill="#00ff00"/>
<rect x="813" y="494.3" width="1" height="15.0" fill="#30e830"/>
<rect x="814" y="486.8" width="1" height="7.5" fill="#00ff00"/>
<rect x="815" y="486.8" width="1" height="7.5" fill="#00ff00"/>
<rect x="816" y="486.8" width="1" height="7.5" fill="#00ff00"/>
<rect x="816" y="494.3" width="1" height="7.5" fill="#30e830"/>
<rect x="817" y="486.8" width="1" height="7.5" fill="#00ff00"/>
<rect x="817" y="494.3" width="1" height="7.5" fill="#30e830"/>
<rect x="818" y="486.8" width="1" height="7.5" fill="#00ff00"/>
<rect x="819" y="486.8" width="1" height="7.5" fill="#00ff00"/>
<rect x="820" y="494.3" width="1" height="0.0" fill="#00ff00"/>
<rect x="821" y="486.8" width="1" height="7.5" fill="#00ff00"/>
<rect x="822" y="486.8" width="1" height="7.5" fill="#00ff00"/>
<rect x="823" y="486.8" width="1" height="7.5" fill="#00ff00"/>
<rect x="823" y="494.3" width="1" height="22.5" fill="#30e830"/>
<rect x="824" y="486.8" width="1" height="7.5" fill="#00ff00"/>
<rect x="824" y="494.3" width="1" height="7.5" fill="#30e830"/>
<rect x="825" y="486.8" width="1" height="7.5" fill="#00ff00"/>
<rect x="826" y="486.8" width="1" height="7.5" fill="#00ff00"/>
<rect x="827" y="486.8" width="1" height="7.5" fill="#00ff00"/>
<rect x="828" y="494.3" width="1" height="7.5" fill="#00ff00"/>
<rect x="828" y="501.9" width="1" height="15.0" fill="#30e830"/>
<rect x="829" y="494.3" width="1" height="7.5" fill="#00ff00"/>
<rect x="829" y="501.9" width="1" height="15.0" fill="#30e830"/>
<rect x="830" y="494.3" width="1" height="7.5" fill="#00ff00"/>
<rect x="830" y="501.9" width="1" height="7.5" fill="#30e830"/>
<rect x="831" y="494.3" width="1" height="7.5" fill="#00ff00"/>
<rect x="831" y="501.9" width="1" height="15.0" fill="#30e830"/>
<rect x="832" y="494.3" width="1" height="7.5" fill="#00ff00"/>
<rect x="833" y="494.3" width="1" height="7.5" fill="#00ff00"/>
<rect x="833" y="501.9" width="1" height="7.5" fill="#30e830"/>
<rect x="834" y="494.3" width="1" height="7.5" fill="#00ff00"/>
<rect x="835" y="494.3" width="1" height="7.5" fill="#00ff00"/>
<rect x="836" y="494.3" width="1" height="7.5" fill="#00ff00"/>
<rect x="836" y="501.9" width="1" height="7.5" fill="#30e830"/>
<rect x="837" y="494.3" width="1" height="7.5" fill="#00ff00"/>
<rect x="837" y="501.9" width="1" height="7.5" fill="#30e830"/>
<rect x="838" y="494.3" width="1" height="7.5" fill="#00ff00"/>
<rect x="839" y="494.3" width="1" height="7.5" fill="#00ff00"/>
<rect x="840" y="494.3" width="1" height="7.5" fill="#00ff00"/>
<rect x="840" y="501.9" width="1" height="7.5" fill="#30e830"/>
<rect x="841" y="494.3" width="1" height="7.5" fill="#00ff00"/>
<rect x="842" y="494.3" width="1" height="7.5" fill="#00ff00"/>
<rect x="843" y="494.3" width="1" height="7.5" fill="#00ff00"/>
<rect x="844" y="494.3" width="1" height="7.5" fill="#00ff00"/>
<rect x="844" y="501.9" width="1" height="7.5" fill="#30e830"/>
<rect x="845" y="494.3" width="1" height="7.5" fill="#00ff00"/>
<rect x="845" y="501.9" width="1" height="7.5" fill="#30e830"/>
<rect x="846" y="494.3" width="1" height="7.5" fill="#00ff00"/>
<rect x="847" y="494.3" width="1" height="7.5" fill="#00ff00"/>
<rect x="848" y="501.9" width="1" height="22.5" fill="#00ff00"/>
<rect x="848" y="524.4" width="1" height="7.5" fill="#30e830"/>
<rect x="849" y="501.9" width="1" height="22.5" fill="#00ff00"/>
<rect x="849" y="524.4" width="1" height="7.5" fill="#30e830"/>
<rect x="850" y="501.9" width="1" height="22.5" fill="#00ff00"/>
<rect x="851" y="501.9" width="1" height="22.5" fill="#00ff00"/>
<rect x="852" y="501.9" width="1" height="22.5" fill="#00ff00"/>
<rect x="853" y="501.9" width="1" height="22.5" fill="#00ff00"/>
<rect x="854" y="501.9" width="1" height="22.5" fill="#00ff00"/>
<rect x="854" y="524.4" width="1" height="7.5" fill="#30e830"/>
<rect x="855" y="501.9" width="1" height="22.5" fill="#00ff00"/>
<rect x="855" y="524.4" width="1" height="15.0" fill="#30e830"/>
<rect x="856" y="509.4" width="1" height="15.0" fill="#00ff00"/>
<rect x="856" y="524.4" width="1" height="7.5" fill="#30e830"/>
<rect x="857" y="501.9" width="1" height="22.5" fill="#00ff00"/>
<rect x="858" y="501.9" width="1" height="22.5" fill="#00ff00"/>
<rect x="859" y="501.9" width="1" height="22.5" fill="#00ff00"/>
<rect x="859" y="524.4" width="1" height="7.5" fill="#30e830"/>
<rect x="860" y="501.9" width="1" height="22.5" fill="#00ff00"/>
<rect x="860" y="524.4" width="1" height="15.0" fill="#30e830"/>
<rect x="861" y="501.9" width="1" height="22.5" fill="#00ff00"/>
<rect x="861" y="524.4" width="1" height="15.0" fill="#30e830"/>
<rect x="862" y="509.4" width="1" height="15.0" fill="#00ff00"/>
<rect x="862" y="524.4" width="1" height="7.5" fill="#30e830"/>
<rect x="863" y="509.4" width="1" height="15.0" fill="#00ff00"/>
<rect x="863" y="524.4" width="1" height="7.5" fill="#30e830"/>
<rect x="864" y="509.4" width="1" height="15.0" fill="#00ff00"/>
<rect x="865" y="509.4" width="1" height="15.0" fill="#00ff00"/>
<rect x="866" y="509.4" width="1" height="15.0" fill="#00ff00"/>
<rect x="867" y="509.4" width="1" height="15.0" fill="#00ff00"/>
<rect x="868" y="509.4" width="1" height="15.0" fill="#00ff00"/>
<rect x="868" y="524.4" width="1" height="7.5" fill="#30e830"/>
<rect x="869" y="516.9" width="1" height="7.5" fill="#00ff00"/>
<rect x="870" y="509.4" width="1" height="15.0" fill="#00ff00"/>
<rect x="871" y="509.4" width="1" height="15.0" fill="#00ff00"/>
<rect x="872" y="509.4" width="1" height="15.0" fill="#00ff00"/>
<rect x="872" y="524.4" width="1" height="15.0" fill="#30e830"/>
<rect x="873" y="509.4" width="1" height="15.0" fill="#00ff00"/>
<rect x="874" y="509.4" width="1" height="15.0" fill="#00ff00"/>
<rect x="875" y="509.4" width="1" height="15.0" fill="#00ff00"/>
<rect x="876" y="509.4" width="1" height="15.0" fill="#00ff00"/>
<rect x="876" y="524.4" width="1" height="15.0" fill="#30e830"/>
<rect x="877" y="509.4" width="1" height="15.0" fill="#00ff00"/>
<rect x="877" y="524.4" width="1" height="7.5" fill="#30e830"/>
<rect x="878" y="509.4" width="1" height="15.0" fill="#00ff00"/>
<rect x="878" y="524.4" width="1" height="7.5" fill="#30e830"/>
<rect x="879" y="509.4" width="1" height="15.0" fill="#00ff00"/>
<rect x="880" y="509.4" width="1" height="15.0" fill="#00ff00"/>
<rect x="880" y="524.4" width="1" height="7.5" fill="#30e830"/>
<rect x="881" y="509.4" width="1" height="15.0" fill="#00ff00"/>
<rect x="881" y="524.4" width="1" height="7.5" fill="#30e830"/>
<rect x="882" y="516.9" width="1" height="7.5" fill="#00ff00"/>
<rect x="882" y="524.4" width="1" height="22.5" fill="#30e830"/>
<rect x="883" y="516.9" width="1" height="7.5" fill="#00ff00"/>
<rect x="884" y="516.9" width="1" height="7.5" fill="#00ff00"/>
<rect x="885" y="516.9" width="1" height="7.5" fill="#00ff00"/>
<rect x="885" y="524.4" width="1" height="7.5" fill="#30e830"/>
<rect x="886" y="516.9" width="1" height="7.5" fill="#00ff00"/>
<rect x="887" y="516.9" width="1" height="7.5" fill="#00ff00"/>
<rect x="887" y="524.4" width="1" height="7.5" fill="#30e830"/>
<rect x="888" y="516.9" width="1" height="7.5" fill="#00ff00"/>
<rect x="889" y="516.9" width="1" height="7.5" fill="#00ff00"/>
<rect x="890" y="516.9" width="1" height="7.5" fill="#00ff00"/>
<rect x="891" y="516.9" width="1" height="7.5" fill="#00ff00"/>
<rect x="892" y="516.9" width="1" height="7.5" fill="#00ff00"/>
<rect x="892" y="524.4" width="1" height="7.5" fill="#30e830"/>
<rect x="893" y="516.9" width="1" height="7.5" fill="#00ff00"/>
<rect x="894" y="516.9" width="1" height="7.5" fill="#00ff00"/>
<rect x="895" y="516.9" width="1" height="7.5" fill="#00ff00"/>
<rect x="896" y="516.9" width="1" height="7.5" fill="#00ff00"/>
<rect x="896" y="524.4" width="1" height="7.5" fill="#30e830"/>
<rect x="897" y="516.9" width="1" height="7.5" fill="#00ff00"/>
<rect x="897" y="524.4" width="1" height="7.5" fill="#30e830"/>
<rect x="898" y="516.9" width="1" height="7.5" fill="#00ff00"/>
<rect x="899" y="516.9" width="1" height="7.5" fill="#00ff00"/>
<rect x="900" y="516.9" width="1" height="7.5" fill="#00ff00"/>
<rect x="901" y="516.9" width="1" height="7.5" fill="#00ff00"/>
<rect x="901" y="524.4" width="1" height="7.5" fill="#30e830"/>
<rect x="902" y="516.9" width="1" height="7.5" fill="#00ff00"/>
<rect x="903" y="516.9" width="1" height="7.5" fill="#00ff00"/>
<rect x="903" y="524.4" width="1" height="22.5" fill="#30e830"/>
<rect x="904" y="501.9" width="1" height="15.0" fill="#00ff00"/>
<rect x="905" y="501.9" width="1" height="15.0" fill="#00ff00"/>
<rect x="906" y="501.9" width="1" height="15.0" fill="#00ff00"/>
<rect x="906" y="516.9" width="1" height="7.5" fill="#30e830"/>
<rect x="907" y="501.9" width="1" height="15.0" fill="#00ff00"/>
<rect x="907" y="516.9" width="1" height="7.5" fill="#30e830"/>
<rect x="908" y="501.9" width="1" height="15.0" fill="#00ff00"/>
<rect x="909" y="501.9" width="1" height="15.0" fill="#00ff00"/>
<rect x="909" y="516.9" width="1" height="7.5" fill="#30e830"/>
<rect x="909" y="494.4" width="1" height="7.5" fill="#30e830"/>
<rect x="910" y="501.9" width="1" height="15.0" fill="#00ff00"/>
<rect x="910" y="516.9" width="1" height="7.5" fill="#30e830"/>
<rect x="911" y="501.9" width="1" height="15.0" fill="#00ff00"/>
<rect x="911" y="516.9" width="1" height="7.5" fill="#30e830"/>
<rect x="912" y="501.9" width="1" height="15.0" fill="#00ff00"/>
<rect x="913" y="501.9" width="1" height="15.0" fill="#00ff00"/>
<rect x="913" y="516.9" width="1" height="15.0" fill="#30e830"/>
<rect x="914" y="501.9" width="1" height="15.0" fill="#00ff00"/>
<rect x="915" y="501.9" width="1" height="15.0" fill="#00ff00"/>
<rect x="915" y="516.9" width="1" height="15.0" fill="#30e830"/>
<rect x="916" y="494.3" width="1" height="15.0" fill="#00ff00"/>
<rect x="916" y="509.4" width="1" height="7.5" fill="#30e830"/>
<rect x="917" y="494.3" width="1" height="15.0" fill="#00ff00"/>
<rect x="917" y="509.4" width="1" height="7.5" fill="#30e830"/>
<rect x="918" y="494.3" width="1" height="15.0" fill="#00ff00"/>
<rect x="918" y="509.4" width="1" height="7.5" fill="#30e830"/>
<rect x="919" y="494.3" width="1" height="15.0" fill="#00ff00"/>
<rect x="919" y="509.4" width="1" height="22.5" fill="#30e830"/>
<rect x="920" y="486.8" width="1" height="15.0" fill="#00ff00"/>
<rect x="920" y="501.9" width="1" height="15.0" fill="#30e830"/>
<rect x="921" y="486.8" width="1" height="15.0" fill="#00ff00"/>
<rect x="921" y="501.9" width="1" height="7.5" fill="#30e830"/>
<rect x="922" y="486.8" width="1" height="15.0" fill="#00ff00"/>
<rect x="923" y="486.8" width="1" height="15.0" fill="#00ff00"/>
<rect x="923" y="501.9" width="1" height="7.5" fill="#30e830"/>
<rect x="924" y="486.8" width="1" height="15.0" fill="#00ff00"/>
<rect x="924" y="501.9" width="1" height="7.5" fill="#30e830"/>
<rect x="925" y="486.8" width="1" height="15.0" fill="#00ff00"/>
<rect x="686" y="471.8" width="1" height="7.5" fill="#00ff00"/>
<rect x="687" y="471.8" width="1" height="7.5" fill="#00ff00"/>
<rect x="688" y="471.8" width="1" height="7.5" fill="#00ff00"/>
<rect x="690" y="471.8" width="1" height="7.5" fill="#00ff00"/>
<rect x="691" y="471.8" width="1" height="7.5" fill="#00ff00"/>
<rect x="692" y="471.8" width="1" height="7.5" fill="#00ff00"/>
<rect x="693" y="471.8" width="1" height="7.5" fill="#00ff00"/>
<rect x="694" y="471.8" width="1" height="7.5" fill="#00ff00"/>
<rect x="695" y="471.8" width="1" height="7.5" fill="#00ff00"/>
<rect x="697" y="471.8" width="1" height="7.5" fill="#00ff00"/>
<rect x="698" y="471.8" width="1" height="7.5" fill="#00ff00"/>
<rect x="700" y="471.8" width="1" height="7.5" fill="#00ff00"/>
<rect x="701" y="471.8" width="1" height="7.5" fill="#00ff00"/>
<rect x="703" y="471.8" width="1" height="7.5" fill="#00ff00"/>
<rect x="704" y="471.8" width="1" height="7.5" fill="#00ff00"/>
<rect x="707" y="471.8" width="1" height="7.5" fill="#00ff00"/>
<rect x="708" y="471.8" width="1" height="7.5" fill="#00ff00"/>
<rect x="710" y="471.8" width="1" height="7.5" fill="#00ff00"/>
<rect x="712" y="471.8" width="1" height="7.5" fill="#00ff00"/>
<rect x="715" y="471.8" width="1" height="7.5" fill="#00ff00"/>
<rect x="716" y="471.8" width="1" height="7.5" fill="#00ff00"/>
<rect x="717" y="471.8" width="1" height="7.5" fill="#00ff00"/>
<rect x="719" y="471.8" width="1" height="7.5" fill="#00ff00"/>
<rect x="722" y="471.8" width="1" height="7.5" fill="#00ff00"/>
<rect x="723" y="471.8" width="1" height="7.5" fill="#00ff00"/>
<rect x="725" y="471.8" width="1" height="7.5" fill="#00ff00"/>
<rect x="727" y="471.8" width="1" height="7.5" fill="#00ff00"/>
<rect x="730" y="471.8" width="1" height="7.5" fill="#00ff00"/>
<rect x="732" y="471.8" width="1" height="7.5" fill="#00ff00"/>
<polygon points="422,509.4 433,509.4 430.5,545 427.5,565 424.5,545" fill="#00ff00" shape-rendering="geometricPrecision"/>
<polygon points="679,501.9 686,501.9 684.5,560 682.5,595 680.5,560" fill="#00ff00"/>
<rect x="174.75" y="507.4" width="1.5" height="24.6" fill="#22e622" shape-rendering="geometricPrecision"/>
<rect x="180.75" y="507.4" width="1.5" height="16.6" fill="#22e622" shape-rendering="geometricPrecision"/>
<rect x="183.75" y="507.4" width="1.5" height="31.6" fill="#22e622" shape-rendering="geometricPrecision"/>
<rect x="226.75" y="484.8" width="1.5" height="23.2" fill="#22e622" shape-rendering="geometricPrecision"/>
<rect x="233.75" y="484.8" width="1.5" height="24.2" fill="#22e622" shape-rendering="geometricPrecision"/>
<rect x="247.75" y="492.3" width="1.5" height="23.7" fill="#22e622" shape-rendering="geometricPrecision"/>
<rect x="252.75" y="484.8" width="1.5" height="46.2" fill="#22e622" shape-rendering="geometricPrecision"/>
<rect x="254.75" y="484.8" width="1.5" height="31.2" fill="#22e622" shape-rendering="geometricPrecision"/>
<rect x="264.75" y="484.8" width="1.5" height="31.2" fill="#22e622" shape-rendering="geometricPrecision"/>
<rect x="280.75" y="477.3" width="1.5" height="46.7" fill="#22e622" shape-rendering="geometricPrecision"/>
<rect x="288.75" y="477.3" width="1.5" height="30.7" fill="#22e622" shape-rendering="geometricPrecision"/>
<rect x="292.75" y="477.3" width="1.5" height="38.7" fill="#22e622" shape-rendering="geometricPrecision"/>
<rect x="296.75" y="477.3" width="1.5" height="30.7" fill="#22e622" shape-rendering="geometricPrecision"/>
<rect x="317.75" y="477.3" width="1.5" height="61.7" fill="#22e622" shape-rendering="geometricPrecision"/>
<rect x="348.75" y="492.3" width="1.5" height="15.7" fill="#22e622" shape-rendering="geometricPrecision"/>
<rect x="353.75" y="507.4" width="1.5" height="8.6" fill="#22e622" shape-rendering="geometricPrecision"/>
<rect x="359.75" y="507.4" width="1.5" height="23.6" fill="#22e622" shape-rendering="geometricPrecision"/>
<rect x="359.75" y="507.4" width="1.5" height="24.6" fill="#22e622" shape-rendering="geometricPrecision"/>
<rect x="375.75" y="514.9" width="1.5" height="39.1" fill="#22e622" shape-rendering="geometricPrecision"/>
<rect x="385.75" y="514.9" width="1.5" height="24.1" fill="#22e622" shape-rendering="geometricPrecision"/>
<rect x="392.75" y="514.9" width="1.5" height="16.1" fill="#22e622" shape-rendering="geometricPrecision"/>
<rect x="396.75" y="514.9" width="1.5" height="16.1" fill="#22e622" shape-rendering="geometricPrecision"/>
<rect x="402.75" y="514.9" width="1.5" height="24.1" fill="#22e622" shape-rendering="geometricPrecision"/>
<rect x="416.75" y="499.9" width="1.5" height="24.1" fill="#22e622" shape-rendering="geometricPrecision"/>
<rect x="422.75" y="514.9" width="1.5" height="46.1" fill="#22e622" shape-rendering="geometricPrecision"/>
<rect x="426.75" y="514.9" width="1.5" height="68.1" fill="#22e622" shape-rendering="geometricPrecision"/>
<rect x="430.75" y="514.9" width="1.5" height="46.1" fill="#22e622" shape-rendering="geometricPrecision"/>
<rect x="440.75" y="507.4" width="1.5" height="16.6" fill="#22e622" shape-rendering="geometricPrecision"/>
<rect x="448.75" y="492.3" width="1.5" height="15.7" fill="#22e622" shape-rendering="geometricPrecision"/>
<rect x="473.75" y="484.8" width="1.5" height="39.2" fill="#22e622" shape-rendering="geometricPrecision"/>
<rect x="487.75" y="484.8" width="1.5" height="31.2" fill="#22e622" shape-rendering="geometricPrecision"/>
<rect x="496.75" y="499.9" width="1.5" height="24.1" fill="#22e622" shape-rendering="geometricPrecision"/>
<rect x="506.75" y="499.9" width="1.5" height="16.1" fill="#22e622" shape-rendering="geometricPrecision"/>
<rect x="518.75" y="492.3" width="1.5" height="23.7" fill="#22e622" shape-rendering="geometricPrecision"/>
<rect x="524.75" y="492.3" width="1.5" height="31.7" fill="#22e622" shape-rendering="geometricPrecision"/>
<rect x="528.75" y="492.3" width="1.5" height="31.7" fill="#22e622" shape-rendering="geometricPrecision"/>
<rect x="535.75" y="492.3" width="1.5" height="31.7" fill="#22e622" shape-rendering="geometricPrecision"/>
<rect x="540.75" y="492.3" width="1.5" height="23.7" fill="#22e622" shape-rendering="geometricPrecision"/>
<rect x="553.75" y="492.3" width="1.5" height="23.7" fill="#22e622" shape-rendering="geometricPrecision"/>
<rect x="545.75" y="492.3" width="1.5" height="16.7" fill="#22e622" shape-rendering="geometricPrecision"/>
<rect x="551.75" y="492.3" width="1.5" height="23.7" fill="#22e622" shape-rendering="geometricPrecision"/>
<rect x="554.75" y="492.3" width="1.5" height="23.7" fill="#22e622" shape-rendering="geometricPrecision"/>
<rect x="558.75" y="484.8" width="1.5" height="39.2" fill="#22e622" shape-rendering="geometricPrecision"/>
<rect x="560.75" y="484.8" width="1.5" height="39.2" fill="#22e622" shape-rendering="geometricPrecision"/>
<rect x="574.75" y="484.8" width="1.5" height="31.2" fill="#22e622" shape-rendering="geometricPrecision"/>
<rect x="584.75" y="492.3" width="1.5" height="23.7" fill="#22e622" shape-rendering="geometricPrecision"/>
<rect x="601.75" y="507.4" width="1.5" height="16.6" fill="#22e622" shape-rendering="geometricPrecision"/>
<rect x="617.75" y="522.4" width="1.5" height="16.6" fill="#22e622" shape-rendering="geometricPrecision"/>
<rect x="625.75" y="522.4" width="1.5" height="23.6" fill="#22e622" shape-rendering="geometricPrecision"/>
<rect x="629.75" y="522.4" width="1.5" height="23.6" fill="#22e622" shape-rendering="geometricPrecision"/>
<rect x="636.75" y="522.4" width="1.5" height="23.6" fill="#22e622" shape-rendering="geometricPrecision"/>
<rect x="645.75" y="522.4" width="1.5" height="16.6" fill="#22e622" shape-rendering="geometricPrecision"/>
<rect x="650.75" y="522.4" width="1.5" height="23.6" fill="#22e622" shape-rendering="geometricPrecision"/>
<rect x="657.75" y="522.4" width="1.5" height="23.6" fill="#22e622" shape-rendering="geometricPrecision"/>
<rect x="662.75" y="514.9" width="1.5" height="39.1" fill="#22e622" shape-rendering="geometricPrecision"/>
<rect x="667.75" y="514.9" width="1.5" height="24.1" fill="#22e622" shape-rendering="geometricPrecision"/>
<rect x="674.75" y="514.9" width="1.5" height="31.1" fill="#22e622" shape-rendering="geometricPrecision"/>
<rect x="681.75" y="529.9" width="1.5" height="74.1" fill="#22e622" shape-rendering="geometricPrecision"/>
<rect x="708.75" y="492.3" width="1.5" height="15.7" fill="#22e622" shape-rendering="geometricPrecision"/>
<rect x="716.75" y="492.3" width="1.5" height="15.7" fill="#22e622" shape-rendering="geometricPrecision"/>
<rect x="723.75" y="492.3" width="1.5" height="31.7" fill="#22e622" shape-rendering="geometricPrecision"/>
<rect x="729.75" y="492.3" width="1.5" height="15.7" fill="#22e622" shape-rendering="geometricPrecision"/>
<rect x="740.75" y="499.9" width="1.5" height="39.1" fill="#22e622" shape-rendering="geometricPrecision"/>
<rect x="740.75" y="499.9" width="1.5" height="39.1" fill="#22e622" shape-rendering="geometricPrecision"/>
<rect x="748.75" y="499.9" width="1.5" height="31.1" fill="#22e622" shape-rendering="geometricPrecision"/>
<rect x="760.75" y="499.9" width="1.5" height="24.1" fill="#22e622" shape-rendering="geometricPrecision"/>
<rect x="764.75" y="499.9" width="1.5" height="20.1" fill="#22e622" shape-rendering="geometricPrecision"/>
<rect x="769.75" y="499.9" width="1.5" height="24.1" fill="#22e622" shape-rendering="geometricPrecision"/>
<rect x="781.75" y="499.9" width="1.5" height="31.1" fill="#22e622" shape-rendering="geometricPrecision"/>
<rect x="787.75" y="499.9" width="1.5" height="31.1" fill="#22e622" shape-rendering="geometricPrecision"/>
<rect x="825.75" y="492.3" width="1.5" height="38.7" fill="#22e622" shape-rendering="geometricPrecision"/>
<rect x="844.75" y="499.9" width="1.5" height="24.1" fill="#22e622" shape-rendering="geometricPrecision"/>
<rect x="858.75" y="522.4" width="1.5" height="16.6" fill="#22e622" shape-rendering="geometricPrecision"/>
<rect x="866.75" y="522.4" width="1.5" height="31.6" fill="#22e622" shape-rendering="geometricPrecision"/>
<rect x="870.75" y="522.4" width="1.5" height="60.6" fill="#22e622" shape-rendering="geometricPrecision"/>
<rect x="878.75" y="522.4" width="1.5" height="16.6" fill="#22e622" shape-rendering="geometricPrecision"/>
<rect x="886.75" y="522.4" width="1.5" height="23.6" fill="#22e622" shape-rendering="geometricPrecision"/>
<rect x="891.75" y="522.4" width="1.5" height="31.6" fill="#22e622" shape-rendering="geometricPrecision"/>
<rect x="900.75" y="522.4" width="1.5" height="23.6" fill="#22e622" shape-rendering="geometricPrecision"/>
<rect x="909.75" y="514.9" width="1.5" height="24.1" fill="#22e622" shape-rendering="geometricPrecision"/>
<rect x="920.75" y="499.9" width="1.5" height="54.1" fill="#22e622" shape-rendering="geometricPrecision"/>
<rect x="917.75" y="507.4" width="1.5" height="32.6" fill="#22e622" shape-rendering="geometricPrecision"/>
<rect x="917" y="484.6" width="1" height="39.8" fill="#22e622"/>
<rect x="919" y="484.6" width="1" height="39.8" fill="#22e622"/>
<rect x="921" y="484.6" width="1" height="39.8" fill="#22e622"/>
<rect x="923" y="484.6" width="1" height="39.8" fill="#22e622"/>
<rect x="925" y="484.6" width="1" height="39.8" fill="#22e622"/>
<rect x="224.75" y="463.0" width="1.5" height="10.8" fill="#22e622" shape-rendering="geometricPrecision"/>
<rect x="288.75" y="463.0" width="1.5" height="10.8" fill="#22e622" shape-rendering="geometricPrecision"/>
<rect x="314.75" y="463.0" width="1.5" height="10.8" fill="#22e622" shape-rendering="geometricPrecision"/>
<rect x="420.75" y="471.0" width="1.5" height="10.3" fill="#22e622" shape-rendering="geometricPrecision"/>
<rect x="447.75" y="471.0" width="1.5" height="10.3" fill="#22e622" shape-rendering="geometricPrecision"/>
<rect x="462.75" y="471.0" width="1.5" height="2.8" fill="#22e622" shape-rendering="geometricPrecision"/>
<rect x="552.75" y="471.0" width="1.5" height="10.3" fill="#22e622" shape-rendering="geometricPrecision"/>
<rect x="552.75" y="471.0" width="1.5" height="10.3" fill="#22e622" shape-rendering="geometricPrecision"/>
<rect x="580.75" y="478.0" width="1.5" height="10.8" fill="#22e622" shape-rendering="geometricPrecision"/>
<rect x="655.75" y="501.0" width="1.5" height="10.4" fill="#22e622" shape-rendering="geometricPrecision"/>
<rect x="882.75" y="501.0" width="1.5" height="17.9" fill="#22e622" shape-rendering="geometricPrecision"/>
<rect x="924.75" y="486.0" width="1.5" height="2.8" fill="#22e622" shape-rendering="geometricPrecision"/>
<rect x="174" y="738.8" width="1" height="6.1" fill="#ff00ff"/>
<rect x="175" y="738.1" width="1" height="6.3" fill="#ff00ff"/>
<rect x="176" y="737.6" width="1" height="6.3" fill="#ff00ff"/>
<rect x="177" y="738.9" width="1" height="5.2" fill="#ff00ff"/>
<rect x="178" y="738.5" width="1" height="5.1" fill="#ff00ff"/>
<rect x="179" y="738.3" width="1" height="5.8" fill="#ff00ff"/>
<rect x="180" y="738.1" width="1" height="5.8" fill="#ff00ff"/>
<rect x="181" y="737.3" width="1" height="6.6" fill="#ff00ff"/>
<rect x="182" y="737.5" width="1" height="5.9" fill="#ff00ff"/>
<rect x="183" y="738.3" width="1" height="5.4" fill="#ff00ff"/>
<rect x="184" y="737.7" width="1" height="7.4" fill="#ff00ff"/>
<rect x="185" y="738.3" width="1" height="6.6" fill="#ff00ff"/>
<rect x="186" y="738.4" width="1" height="4.8" fill="#ff00ff"/>
<rect x="187" y="737.3" width="1" height="5.6" fill="#ff00ff"/>
<rect x="188" y="737.9" width="1" height="6.3" fill="#ff00ff"/>
<rect x="189" y="737.3" width="1" height="6.3" fill="#ff00ff"/>
<rect x="190" y="737.8" width="1" height="6.4" fill="#ff00ff"/>
<rect x="191" y="736.8" width="1" height="7.5" fill="#ff00ff"/>
<rect x="192" y="736.8" width="1" height="6.8" fill="#ff00ff"/>
<rect x="193" y="736.2" width="1" height="5.9" fill="#ff00ff"/>
<rect x="194" y="737.3" width="1" height="6.0" fill="#ff00ff"/>
<rect x="195" y="736.7" width="1" height="4.8" fill="#ff00ff"/>
<rect x="196" y="735.3" width="1" height="6.3" fill="#ff00ff"/>
<rect x="197" y="735.3" width="1" height="6.3" fill="#ff00ff"/>
<rect x="198" y="735.4" width="1" height="5.4" fill="#ff00ff"/>
<rect x="199" y="735.1" width="1" height="6.9" fill="#ff00ff"/>
<rect x="200" y="734.6" width="1" height="7.6" fill="#ff00ff"/>
<rect x="201" y="735.1" width="1" height="6.6" fill="#ff00ff"/>
<rect x="202" y="734.3" width="1" height="6.5" fill="#ff00ff"/>
<rect x="203" y="734.8" width="1" height="5.6" fill="#ff00ff"/>
<rect x="204" y="733.6" width="1" height="7.9" fill="#ff00ff"/>
<rect x="205" y="735.0" width="1" height="5.3" fill="#ff00ff"/>
<rect x="206" y="733.6" width="1" height="7.9" fill="#ff00ff"/>
<rect x="207" y="734.6" width="1" height="5.0" fill="#ff00ff"/>
<rect x="208" y="734.0" width="1" height="5.8" fill="#ff00ff"/>
<rect x="209" y="734.9" width="1" height="5.1" fill="#ff00ff"/>
<rect x="210" y="735.1" width="1" height="6.1" fill="#ff00ff"/>
<rect x="211" y="733.6" width="1" height="7.4" fill="#ff00ff"/>
<rect x="212" y="734.2" width="1" height="7.0" fill="#ff00ff"/>
<rect x="213" y="734.9" width="1" height="5.2" fill="#ff00ff"/>
<rect x="214" y="733.6" width="1" height="8.0" fill="#ff00ff"/>
<rect x="215" y="734.2" width="1" height="7.4" fill="#ff00ff"/>
<rect x="216" y="734.6" width="1" height="6.5" fill="#ff00ff"/>
<rect x="217" y="734.9" width="1" height="6.0" fill="#ff00ff"/>
<rect x="218" y="734.2" width="1" height="5.3" fill="#ff00ff"/>
<rect x="219" y="734.6" width="1" height="5.7" fill="#ff00ff"/>
<rect x="220" y="734.2" width="1" height="7.2" fill="#ff00ff"/>
<rect x="221" y="733.5" width="1" height="7.5" fill="#ff00ff"/>
<rect x="222" y="733.4" width="1" height="7.5" fill="#ff00ff"/>
<rect x="223" y="734.7" width="1" height="5.2" fill="#ff00ff"/>
<rect x="224" y="734.2" width="1" height="7.2" fill="#ff00ff"/>
<rect x="225" y="734.4" width="1" height="6.1" fill="#ff00ff"/>
<rect x="226" y="733.7" width="1" height="5.7" fill="#ff00ff"/>
<rect x="227" y="733.8" width="1" height="6.3" fill="#ff00ff"/>
<rect x="228" y="733.5" width="1" height="6.4" fill="#ff00ff"/>
<rect x="229" y="733.4" width="1" height="7.4" fill="#ff00ff"/>
<rect x="230" y="734.3" width="1" height="5.3" fill="#ff00ff"/>
<rect x="231" y="733.6" width="1" height="6.8" fill="#ff00ff"/>
<rect x="232" y="733.9" width="1" height="7.4" fill="#ff00ff"/>
<rect x="233" y="733.7" width="1" height="6.1" fill="#ff00ff"/>
<rect x="234" y="734.7" width="1" height="4.7" fill="#ff00ff"/>
<rect x="235" y="734.1" width="1" height="5.8" fill="#ff00ff"/>
<rect x="236" y="734.6" width="1" height="5.8" fill="#ff00ff"/>
<rect x="237" y="734.5" width="1" height="5.0" fill="#ff00ff"/>
<rect x="238" y="734.3" width="1" height="6.2" fill="#ff00ff"/>
<rect x="239" y="733.9" width="1" height="6.9" fill="#ff00ff"/>
<rect x="240" y="734.6" width="1" height="4.8" fill="#ff00ff"/>
<rect x="241" y="733.6" width="1" height="6.3" fill="#ff00ff"/>
<rect x="242" y="733.5" width="1" height="5.8" fill="#ff00ff"/>
<rect x="243" y="733.6" width="1" height="5.9" fill="#ff00ff"/>
<rect x="244" y="734.4" width="1" height="5.8" fill="#ff00ff"/>
<rect x="245" y="733.3" width="1" height="6.5" fill="#ff00ff"/>
<rect x="246" y="733.9" width="1" height="6.0" fill="#ff00ff"/>
<rect x="247" y="733.4" width="1" height="5.9" fill="#ff00ff"/>
<rect x="248" y="733.1" width="1" height="8.3" fill="#ff00ff"/>
<rect x="249" y="734.5" width="1" height="4.8" fill="#ff00ff"/>
<rect x="250" y="734.4" width="1" height="7.0" fill="#ff00ff"/>
<rect x="251" y="734.1" width="1" height="5.2" fill="#ff00ff"/>
<rect x="252" y="734.0" width="1" height="6.1" fill="#ff00ff"/>
<rect x="253" y="733.9" width="1" height="6.9" fill="#ff00ff"/>
<rect x="254" y="734.1" width="1" height="8.1" fill="#ff00ff"/>
<rect x="255" y="735.8" width="1" height="6.3" fill="#ff00ff"/>
<rect x="256" y="736.8" width="1" height="5.8" fill="#ff00ff"/>
<rect x="257" y="736.1" width="1" height="6.1" fill="#ff00ff"/>
<rect x="258" y="736.3" width="1" height="5.8" fill="#ff00ff"/>
<rect x="259" y="734.5" width="1" height="6.5" fill="#ff00ff"/>
<rect x="260" y="733.6" width="1" height="5.9" fill="#ff00ff"/>
<rect x="261" y="734.2" width="1" height="6.8" fill="#ff00ff"/>
<rect x="262" y="734.8" width="1" height="4.7" fill="#ff00ff"/>
<rect x="263" y="734.5" width="1" height="6.5" fill="#ff00ff"/>
<rect x="264" y="734.4" width="1" height="5.4" fill="#ff00ff"/>
<rect x="265" y="733.4" width="1" height="7.6" fill="#ff00ff"/>
<rect x="266" y="733.7" width="1" height="6.3" fill="#ff00ff"/>
<rect x="267" y="734.1" width="1" height="5.9" fill="#ff00ff"/>
<rect x="268" y="734.6" width="1" height="5.1" fill="#ff00ff"/>
<rect x="269" y="733.2" width="1" height="7.2" fill="#ff00ff"/>
<rect x="270" y="734.2" width="1" height="6.8" fill="#ff00ff"/>
<rect x="271" y="734.4" width="1" height="6.8" fill="#ff00ff"/>
<rect x="272" y="734.8" width="1" height="5.4" fill="#ff00ff"/>
<rect x="273" y="734.0" width="1" height="5.5" fill="#ff00ff"/>
<rect x="274" y="733.6" width="1" height="6.8" fill="#ff00ff"/>
<rect x="275" y="733.2" width="1" height="7.4" fill="#ff00ff"/>
<rect x="276" y="733.4" width="1" height="6.7" fill="#ff00ff"/>
<rect x="277" y="734.8" width="1" height="4.5" fill="#ff00ff"/>
<rect x="278" y="733.2" width="1" height="6.9" fill="#ff00ff"/>
<rect x="279" y="733.4" width="1" height="7.3" fill="#ff00ff"/>
<rect x="280" y="733.1" width="1" height="7.9" fill="#ff00ff"/>
<rect x="281" y="734.6" width="1" height="6.3" fill="#ff00ff"/>
<rect x="282" y="733.9" width="1" height="5.9" fill="#ff00ff"/>
<rect x="283" y="734.3" width="1" height="6.0" fill="#ff00ff"/>
<rect x="284" y="733.9" width="1" height="6.0" fill="#ff00ff"/>
<rect x="285" y="733.9" width="1" height="6.7" fill="#ff00ff"/>
<rect x="286" y="734.6" width="1" height="6.6" fill="#ff00ff"/>
<rect x="287" y="733.4" width="1" height="6.4" fill="#ff00ff"/>
<rect x="288" y="733.9" width="1" height="6.5" fill="#ff00ff"/>
<rect x="289" y="733.7" width="1" height="5.8" fill="#ff00ff"/>
<rect x="290" y="733.3" width="1" height="6.6" fill="#ff00ff"/>
<rect x="291" y="733.9" width="1" height="7.4" fill="#ff00ff"/>
<rect x="292" y="734.7" width="1" height="6.4" fill="#ff00ff"/>
<rect x="293" y="734.9" width="1" height="6.5" fill="#ff00ff"/>
<rect x="294" y="734.2" width="1" height="6.7" fill="#ff00ff"/>
<rect x="295" y="733.2" width="1" height="7.4" fill="#ff00ff"/>
<rect x="296" y="734.2" width="1" height="5.6" fill="#ff00ff"/>
<rect x="297" y="734.1" width="1" height="7.2" fill="#ff00ff"/>
<rect x="298" y="734.0" width="1" height="6.6" fill="#ff00ff"/>
<rect x="299" y="733.6" width="1" height="6.3" fill="#ff00ff"/>
<rect x="300" y="734.7" width="1" height="4.5" fill="#ff00ff"/>
<rect x="301" y="733.4" width="1" height="7.2" fill="#ff00ff"/>
<rect x="302" y="733.9" width="1" height="5.4" fill="#ff00ff"/>
<rect x="303" y="734.3" width="1" height="5.7" fill="#ff00ff"/>
<rect x="304" y="734.1" width="1" height="5.9" fill="#ff00ff"/>
<rect x="305" y="734.1" width="1" height="6.3" fill="#ff00ff"/>
<rect x="306" y="733.8" width="1" height="5.5" fill="#ff00ff"/>
<rect x="307" y="733.4" width="1" height="7.7" fill="#ff00ff"/>
<rect x="308" y="734.1" width="1" height="5.3" fill="#ff00ff"/>
<rect x="309" y="734.7" width="1" height="5.0" fill="#ff00ff"/>
<rect x="310" y="733.3" width="1" height="7.0" fill="#ff00ff"/>
<rect x="311" y="733.6" width="1" height="6.7" fill="#ff00ff"/>
<rect x="312" y="734.1" width="1" height="5.5" fill="#ff00ff"/>
<rect x="313" y="734.1" width="1" height="5.2" fill="#ff00ff"/>
<rect x="314" y="734.0" width="1" height="6.4" fill="#ff00ff"/>
<rect x="315" y="733.2" width="1" height="6.8" fill="#ff00ff"/>
<rect x="316" y="733.3" width="1" height="6.9" fill="#ff00ff"/>
<rect x="317" y="734.7" width="1" height="5.7" fill="#ff00ff"/>
<rect x="318" y="734.5" width="1" height="6.5" fill="#ff00ff"/>
<rect x="319" y="733.4" width="1" height="8.1" fill="#ff00ff"/>
<rect x="320" y="734.6" width="1" height="4.9" fill="#ff00ff"/>
<rect x="321" y="734.8" width="1" height="5.4" fill="#ff00ff"/>
<rect x="322" y="733.6" width="1" height="7.9" fill="#ff00ff"/>
<rect x="323" y="734.4" width="1" height="6.8" fill="#ff00ff"/>
<rect x="324" y="733.6" width="1" height="7.5" fill="#ff00ff"/>
<rect x="325" y="733.5" width="1" height="6.4" fill="#ff00ff"/>
<rect x="326" y="734.1" width="1" height="5.4" fill="#ff00ff"/>
<rect x="327" y="734.5" width="1" height="5.4" fill="#ff00ff"/>
<rect x="328" y="734.0" width="1" height="7.1" fill="#ff00ff"/>
<rect x="329" y="734.3" width="1" height="7.3" fill="#ff00ff"/>
<rect x="330" y="734.7" width="1" height="6.9" fill="#ff00ff"/>
<rect x="331" y="734.6" width="1" height="7.1" fill="#ff00ff"/>
<rect x="332" y="735.2" width="1" height="4.8" fill="#ff00ff"/>
<rect x="333" y="735.0" width="1" height="5.4" fill="#ff00ff"/>
<rect x="334" y="735.1" width="1" height="6.2" fill="#ff00ff"/>
<rect x="335" y="735.2" width="1" height="4.8" fill="#ff00ff"/>
<rect x="336" y="734.4" width="1" height="7.0" fill="#ff00ff"/>
<rect x="337" y="735.5" width="1" height="6.0" fill="#ff00ff"/>
<rect x="338" y="733.9" width="1" height="7.3" fill="#ff00ff"/>
<rect x="339" y="734.0" width="1" height="7.1" fill="#ff00ff"/>
<rect x="340" y="735.3" width="1" height="4.8" fill="#ff00ff"/>
<rect x="341" y="735.6" width="1" height="5.9" fill="#ff00ff"/>
<rect x="342" y="734.4" width="1" height="6.0" fill="#ff00ff"/>
<rect x="343" y="734.8" width="1" height="7.1" fill="#ff00ff"/>
<rect x="344" y="735.0" width="1" height="5.2" fill="#ff00ff"/>
<rect x="345" y="734.0" width="1" height="6.2" fill="#ff00ff"/>
<rect x="346" y="735.5" width="1" height="5.0" fill="#ff00ff"/>
<rect x="347" y="735.1" width="1" height="5.7" fill="#ff00ff"/>
<rect x="348" y="735.3" width="1" height="5.6" fill="#ff00ff"/>
<rect x="349" y="734.5" width="1" height="7.8" fill="#ff00ff"/>
<rect x="350" y="735.4" width="1" height="6.6" fill="#ff00ff"/>
<rect x="351" y="736.1" width="1" height="6.7" fill="#ff00ff"/>
<rect x="352" y="734.8" width="1" height="6.8" fill="#ff00ff"/>
<rect x="353" y="735.3" width="1" height="6.9" fill="#ff00ff"/>
<rect x="354" y="736.7" width="1" height="6.3" fill="#ff00ff"/>
<rect x="355" y="735.4" width="1" height="6.4" fill="#ff00ff"/>
<rect x="356" y="737.0" width="1" height="6.1" fill="#ff00ff"/>
<rect x="357" y="736.4" width="1" height="6.4" fill="#ff00ff"/>
<rect x="358" y="736.1" width="1" height="7.7" fill="#ff00ff"/>
<rect x="359" y="736.7" width="1" height="7.3" fill="#ff00ff"/>
<rect x="360" y="737.3" width="1" height="5.1" fill="#ff00ff"/>
<rect x="361" y="737.0" width="1" height="5.9" fill="#ff00ff"/>
<rect x="362" y="738.2" width="1" height="5.7" fill="#ff00ff"/>
<rect x="363" y="736.8" width="1" height="6.3" fill="#ff00ff"/>
<rect x="364" y="737.6" width="1" height="6.4" fill="#ff00ff"/>
<rect x="365" y="738.1" width="1" height="5.9" fill="#ff00ff"/>
<rect x="366" y="737.8" width="1" height="5.4" fill="#ff00ff"/>
<rect x="367" y="738.3" width="1" height="5.7" fill="#ff00ff"/>
<rect x="368" y="737.4" width="1" height="7.0" fill="#ff00ff"/>
<rect x="369" y="739.2" width="1" height="4.3" fill="#ff00ff"/>
<rect x="370" y="737.7" width="1" height="7.3" fill="#ff00ff"/>
<rect x="371" y="738.0" width="1" height="6.1" fill="#ff00ff"/>
<rect x="372" y="738.5" width="1" height="5.7" fill="#ff00ff"/>
<rect x="373" y="738.7" width="1" height="6.2" fill="#ff00ff"/>
<rect x="374" y="739.4" width="1" height="6.6" fill="#ff00ff"/>
<rect x="375" y="737.8" width="1" height="7.2" fill="#ff00ff"/>
<rect x="376" y="739.2" width="1" height="6.6" fill="#ff00ff"/>
<rect x="377" y="739.3" width="1" height="6.1" fill="#ff00ff"/>
<rect x="378" y="739.1" width="1" height="5.7" fill="#ff00ff"/>
<rect x="379" y="738.5" width="1" height="7.3" fill="#ff00ff"/>
<rect x="380" y="739.7" width="1" height="6.6" fill="#ff00ff"/>
<rect x="381" y="739.4" width="1" height="5.5" fill="#ff00ff"/>
<rect x="382" y="739.6" width="1" height="6.3" fill="#ff00ff"/>
<rect x="383" y="739.2" width="1" height="6.5" fill="#ff00ff"/>
<rect x="384" y="739.0" width="1" height="6.6" fill="#ff00ff"/>
<rect x="385" y="739.1" width="1" height="5.4" fill="#ff00ff"/>
<rect x="386" y="739.1" width="1" height="6.1" fill="#ff00ff"/>
<rect x="387" y="740.3" width="1" height="5.3" fill="#ff00ff"/>
<rect x="388" y="739.2" width="1" height="5.9" fill="#ff00ff"/>
<rect x="389" y="739.1" width="1" height="6.4" fill="#ff00ff"/>
<rect x="390" y="738.9" width="1" height="5.8" fill="#ff00ff"/>
<rect x="391" y="740.3" width="1" height="5.5" fill="#ff00ff"/>
<rect x="392" y="739.6" width="1" height="6.5" fill="#ff00ff"/>
<rect x="393" y="739.4" width="1" height="5.8" fill="#ff00ff"/>
<rect x="394" y="739.1" width="1" height="6.6" fill="#ff00ff"/>
<rect x="395" y="739.5" width="1" height="7.1" fill="#ff00ff"/>
<rect x="396" y="740.0" width="1" height="7.2" fill="#ff00ff"/>
<rect x="397" y="739.7" width="1" height="7.5" fill="#ff00ff"/>
<rect x="398" y="740.2" width="1" height="5.1" fill="#ff00ff"/>
<rect x="399" y="739.6" width="1" height="7.0" fill="#ff00ff"/>
<rect x="400" y="741.1" width="1" height="5.0" fill="#ff00ff"/>
<rect x="401" y="740.8" width="1" height="5.6" fill="#ff00ff"/>
<rect x="402" y="741.0" width="1" height="4.6" fill="#ff00ff"/>
<rect x="403" y="740.4" width="1" height="7.2" fill="#ff00ff"/>
<rect x="404" y="740.0" width="1" height="6.1" fill="#ff00ff"/>
<rect x="405" y="739.6" width="1" height="6.3" fill="#ff00ff"/>
<rect x="406" y="739.8" width="1" height="7.1" fill="#ff00ff"/>
<rect x="407" y="739.5" width="1" height="6.5" fill="#ff00ff"/>
<rect x="408" y="739.3" width="1" height="7.0" fill="#ff00ff"/>
<rect x="409" y="740.2" width="1" height="5.9" fill="#ff00ff"/>
<rect x="410" y="738.8" width="1" height="7.3" fill="#ff00ff"/>
<rect x="411" y="739.9" width="1" height="5.6" fill="#ff00ff"/>
<rect x="412" y="738.1" width="1" height="7.7" fill="#ff00ff"/>
<rect x="413" y="739.3" width="1" height="5.2" fill="#ff00ff"/>
<rect x="414" y="737.7" width="1" height="6.2" fill="#ff00ff"/>
<rect x="415" y="738.2" width="1" height="7.0" fill="#ff00ff"/>
<rect x="416" y="738.2" width="1" height="7.0" fill="#ff00ff"/>
<rect x="417" y="737.2" width="1" height="6.4" fill="#ff00ff"/>
<rect x="418" y="737.9" width="1" height="6.1" fill="#ff00ff"/>
<rect x="419" y="737.0" width="1" height="6.8" fill="#ff00ff"/>
<rect x="420" y="736.7" width="1" height="5.5" fill="#ff00ff"/>
<rect x="421" y="736.6" width="1" height="5.4" fill="#ff00ff"/>
<rect x="422" y="736.7" width="1" height="5.6" fill="#ff00ff"/>
<rect x="423" y="737.8" width="1" height="6.5" fill="#ff00ff"/>
<rect x="424" y="738.7" width="1" height="6.6" fill="#ff00ff"/>
<rect x="425" y="739.5" width="1" height="8.1" fill="#ff00ff"/>
<rect x="426" y="741.8" width="1" height="7.3" fill="#ff00ff"/>
<rect x="427" y="742.2" width="1" height="7.3" fill="#ff00ff"/>
<rect x="428" y="742.4" width="1" height="5.5" fill="#ff00ff"/>
<rect x="429" y="740.3" width="1" height="6.2" fill="#ff00ff"/>
<rect x="430" y="739.4" width="1" height="7.5" fill="#ff00ff"/>
<rect x="431" y="738.3" width="1" height="7.7" fill="#ff00ff"/>
<rect x="432" y="737.9" width="1" height="6.5" fill="#ff00ff"/>
<rect x="433" y="737.2" width="1" height="6.2" fill="#ff00ff"/>
<rect x="434" y="737.2" width="1" height="6.2" fill="#ff00ff"/>
<rect x="435" y="736.5" width="1" height="7.1" fill="#ff00ff"/>
<rect x="436" y="736.2" width="1" height="7.2" fill="#ff00ff"/>
<rect x="437" y="737.0" width="1" height="6.4" fill="#ff00ff"/>
<rect x="438" y="736.1" width="1" height="7.2" fill="#ff00ff"/>
<rect x="439" y="737.2" width="1" height="5.3" fill="#ff00ff"/>
<rect x="440" y="735.8" width="1" height="6.7" fill="#ff00ff"/>
<rect x="441" y="736.9" width="1" height="4.6" fill="#ff00ff"/>
<rect x="442" y="735.1" width="1" height="7.1" fill="#ff00ff"/>
<rect x="443" y="736.1" width="1" height="6.6" fill="#ff00ff"/>
<rect x="444" y="735.5" width="1" height="7.6" fill="#ff00ff"/>
<rect x="445" y="735.1" width="1" height="7.3" fill="#ff00ff"/>
<rect x="446" y="734.8" width="1" height="5.9" fill="#ff00ff"/>
<rect x="447" y="734.8" width="1" height="5.9" fill="#ff00ff"/>
<rect x="448" y="735.3" width="1" height="6.4" fill="#ff00ff"/>
<rect x="449" y="734.6" width="1" height="7.8" fill="#ff00ff"/>
<rect x="450" y="734.8" width="1" height="5.7" fill="#ff00ff"/>
<rect x="451" y="734.4" width="1" height="7.4" fill="#ff00ff"/>
<rect x="452" y="735.6" width="1" height="4.7" fill="#ff00ff"/>
<rect x="453" y="733.9" width="1" height="7.7" fill="#ff00ff"/>
<rect x="454" y="734.2" width="1" height="7.8" fill="#ff00ff"/>
<rect x="455" y="734.5" width="1" height="6.6" fill="#ff00ff"/>
<rect x="456" y="734.2" width="1" height="7.2" fill="#ff00ff"/>
<rect x="457" y="734.4" width="1" height="5.9" fill="#ff00ff"/>
<rect x="458" y="735.2" width="1" height="4.6" fill="#ff00ff"/>
<rect x="459" y="734.9" width="1" height="4.8" fill="#ff00ff"/>
<rect x="460" y="734.8" width="1" height="5.8" fill="#ff00ff"/>
<rect x="461" y="735.2" width="1" height="4.6" fill="#ff00ff"/>
<rect x="462" y="734.6" width="1" height="5.9" fill="#ff00ff"/>
<rect x="463" y="735.3" width="1" height="6.5" fill="#ff00ff"/>
<rect x="464" y="734.7" width="1" height="5.4" fill="#ff00ff"/>
<rect x="465" y="734.1" width="1" height="6.1" fill="#ff00ff"/>
<rect x="466" y="734.4" width="1" height="5.8" fill="#ff00ff"/>
<rect x="467" y="734.0" width="1" height="7.4" fill="#ff00ff"/>
<rect x="468" y="734.8" width="1" height="5.5" fill="#ff00ff"/>
<rect x="469" y="735.4" width="1" height="4.7" fill="#ff00ff"/>
<rect x="470" y="734.6" width="1" height="5.3" fill="#ff00ff"/>
<rect x="471" y="735.2" width="1" height="6.4" fill="#ff00ff"/>
<rect x="472" y="734.1" width="1" height="7.2" fill="#ff00ff"/>
<rect x="473" y="735.1" width="1" height="5.2" fill="#ff00ff"/>
<rect x="474" y="734.2" width="1" height="6.5" fill="#ff00ff"/>
<rect x="475" y="735.2" width="1" height="4.8" fill="#ff00ff"/>
<rect x="476" y="734.8" width="1" height="6.1" fill="#ff00ff"/>
<rect x="477" y="734.4" width="1" height="6.5" fill="#ff00ff"/>
<rect x="478" y="735.2" width="1" height="4.9" fill="#ff00ff"/>
<rect x="479" y="735.2" width="1" height="5.2" fill="#ff00ff"/>
<rect x="480" y="735.0" width="1" height="6.6" fill="#ff00ff"/>
<rect x="481" y="733.9" width="1" height="7.7" fill="#ff00ff"/>
<rect x="482" y="735.4" width="1" height="4.9" fill="#ff00ff"/>
<rect x="483" y="733.6" width="1" height="6.2" fill="#ff00ff"/>
<rect x="484" y="735.4" width="1" height="4.3" fill="#ff00ff"/>
<rect x="485" y="735.2" width="1" height="4.7" fill="#ff00ff"/>
<rect x="486" y="734.9" width="1" height="4.9" fill="#ff00ff"/>
<rect x="487" y="733.9" width="1" height="7.3" fill="#ff00ff"/>
<rect x="488" y="733.8" width="1" height="6.6" fill="#ff00ff"/>
<rect x="489" y="735.4" width="1" height="6.0" fill="#ff00ff"/>
<rect x="490" y="735.5" width="1" height="6.7" fill="#ff00ff"/>
<rect x="491" y="734.1" width="1" height="6.5" fill="#ff00ff"/>
<rect x="492" y="735.6" width="1" height="6.2" fill="#ff00ff"/>
<rect x="493" y="734.4" width="1" height="7.1" fill="#ff00ff"/>
<rect x="494" y="734.9" width="1" height="6.6" fill="#ff00ff"/>
<rect x="495" y="734.8" width="1" height="5.9" fill="#ff00ff"/>
<rect x="496" y="736.6" width="1" height="4.9" fill="#ff00ff"/>
<rect x="497" y="736.5" width="1" height="4.7" fill="#ff00ff"/>
<rect x="498" y="735.9" width="1" height="5.4" fill="#ff00ff"/>
<rect x="499" y="736.0" width="1" height="5.6" fill="#ff00ff"/>
<rect x="500" y="736.6" width="1" height="5.1" fill="#ff00ff"/>
<rect x="501" y="736.8" width="1" height="5.8" fill="#ff00ff"/>
<rect x="502" y="735.9" width="1" height="6.6" fill="#ff00ff"/>
<rect x="503" y="736.7" width="1" height="7.2" fill="#ff00ff"/>
<rect x="504" y="736.6" width="1" height="5.9" fill="#ff00ff"/>
<rect x="505" y="737.8" width="1" height="6.3" fill="#ff00ff"/>
<rect x="506" y="737.4" width="1" height="5.3" fill="#ff00ff"/>
<rect x="507" y="736.4" width="1" height="6.3" fill="#ff00ff"/>
<rect x="508" y="736.2" width="1" height="6.0" fill="#ff00ff"/>
<rect x="509" y="736.9" width="1" height="6.0" fill="#ff00ff"/>
<rect x="510" y="737.0" width="1" height="5.8" fill="#ff00ff"/>
<rect x="511" y="736.0" width="1" height="7.6" fill="#ff00ff"/>
<rect x="512" y="737.1" width="1" height="6.1" fill="#ff00ff"/>
<rect x="513" y="736.9" width="1" height="6.6" fill="#ff00ff"/>
<rect x="514" y="737.7" width="1" height="6.2" fill="#ff00ff"/>
<rect x="515" y="737.2" width="1" height="5.6" fill="#ff00ff"/>
<rect x="516" y="736.5" width="1" height="6.4" fill="#ff00ff"/>
<rect x="517" y="737.6" width="1" height="5.1" fill="#ff00ff"/>
<rect x="518" y="736.5" width="1" height="6.2" fill="#ff00ff"/>
<rect x="519" y="736.1" width="1" height="8.0" fill="#ff00ff"/>
<rect x="520" y="735.8" width="1" height="7.4" fill="#ff00ff"/>
<rect x="521" y="737.4" width="1" height="4.9" fill="#ff00ff"/>
<rect x="522" y="736.9" width="1" height="5.8" fill="#ff00ff"/>
<rect x="523" y="736.2" width="1" height="6.0" fill="#ff00ff"/>
<rect x="524" y="735.9" width="1" height="7.7" fill="#ff00ff"/>
<rect x="525" y="737.1" width="1" height="6.7" fill="#ff00ff"/>
<rect x="526" y="735.8" width="1" height="7.5" fill="#ff00ff"/>
<rect x="527" y="736.2" width="1" height="6.9" fill="#ff00ff"/>
<rect x="528" y="736.6" width="1" height="5.7" fill="#ff00ff"/>
<rect x="529" y="737.4" width="1" height="4.3" fill="#ff00ff"/>
<rect x="530" y="736.9" width="1" height="6.6" fill="#ff00ff"/>
<rect x="531" y="736.5" width="1" height="6.4" fill="#ff00ff"/>
<rect x="532" y="737.4" width="1" height="4.7" fill="#ff00ff"/>
<rect x="533" y="736.7" width="1" height="6.6" fill="#ff00ff"/>
<rect x="534" y="736.2" width="1" height="7.0" fill="#ff00ff"/>
<rect x="535" y="736.2" width="1" height="6.5" fill="#ff00ff"/>
<rect x="536" y="736.6" width="1" height="6.5" fill="#ff00ff"/>
<rect x="537" y="736.0" width="1" height="6.9" fill="#ff00ff"/>
<rect x="538" y="736.4" width="1" height="5.5" fill="#ff00ff"/>
<rect x="539" y="736.5" width="1" height="5.5" fill="#ff00ff"/>
<rect x="540" y="737.0" width="1" height="5.5" fill="#ff00ff"/>
<rect x="541" y="736.7" width="1" height="5.9" fill="#ff00ff"/>
<rect x="542" y="736.2" width="1" height="5.7" fill="#ff00ff"/>
<rect x="543" y="735.6" width="1" height="7.9" fill="#ff00ff"/>
<rect x="544" y="736.3" width="1" height="6.3" fill="#ff00ff"/>
<rect x="545" y="736.2" width="1" height="6.9" fill="#ff00ff"/>
<rect x="546" y="735.7" width="1" height="6.0" fill="#ff00ff"/>
<rect x="547" y="736.7" width="1" height="5.6" fill="#ff00ff"/>
<rect x="548" y="736.4" width="1" height="6.8" fill="#ff00ff"/>
<rect x="549" y="736.8" width="1" height="6.4" fill="#ff00ff"/>
<rect x="550" y="735.3" width="1" height="6.8" fill="#ff00ff"/>
<rect x="551" y="736.7" width="1" height="6.4" fill="#ff00ff"/>
<rect x="552" y="735.4" width="1" height="6.1" fill="#ff00ff"/>
<rect x="553" y="735.6" width="1" height="5.8" fill="#ff00ff"/>
<rect x="554" y="735.8" width="1" height="7.2" fill="#ff00ff"/>
<rect x="555" y="736.0" width="1" height="6.1" fill="#ff00ff"/>
<rect x="556" y="735.3" width="1" height="6.8" fill="#ff00ff"/>
<rect x="557" y="736.9" width="1" height="5.8" fill="#ff00ff"/>
<rect x="558" y="735.9" width="1" height="6.3" fill="#ff00ff"/>
<rect x="559" y="736.5" width="1" height="6.3" fill="#ff00ff"/>
<rect x="560" y="735.4" width="1" height="7.3" fill="#ff00ff"/>
<rect x="561" y="735.8" width="1" height="6.5" fill="#ff00ff"/>
<rect x="562" y="735.5" width="1" height="6.4" fill="#ff00ff"/>
<rect x="563" y="735.7" width="1" height="6.3" fill="#ff00ff"/>
<rect x="564" y="735.1" width="1" height="6.4" fill="#ff00ff"/>
<rect x="565" y="736.1" width="1" height="5.1" fill="#ff00ff"/>
<rect x="566" y="735.4" width="1" height="7.3" fill="#ff00ff"/>
<rect x="567" y="735.6" width="1" height="6.3" fill="#ff00ff"/>
<rect x="568" y="735.5" width="1" height="7.5" fill="#ff00ff"/>
<rect x="569" y="735.3" width="1" height="7.3" fill="#ff00ff"/>
<rect x="570" y="736.6" width="1" height="4.9" fill="#ff00ff"/>
<rect x="571" y="735.9" width="1" height="7.1" fill="#ff00ff"/>
<rect x="572" y="736.2" width="1" height="5.7" fill="#ff00ff"/>
<rect x="573" y="735.2" width="1" height="6.9" fill="#ff00ff"/>
<rect x="574" y="735.8" width="1" height="7.0" fill="#ff00ff"/>
<rect x="575" y="735.6" width="1" height="6.4" fill="#ff00ff"/>
<rect x="576" y="736.3" width="1" height="6.7" fill="#ff00ff"/>
<rect x="577" y="735.7" width="1" height="6.3" fill="#ff00ff"/>
<rect x="578" y="736.1" width="1" height="7.1" fill="#ff00ff"/>
<rect x="579" y="735.4" width="1" height="7.9" fill="#ff00ff"/>
<rect x="580" y="736.4" width="1" height="5.6" fill="#ff00ff"/>
<rect x="581" y="736.3" width="1" height="5.6" fill="#ff00ff"/>
<rect x="582" y="735.2" width="1" height="7.6" fill="#ff00ff"/>
<rect x="583" y="735.8" width="1" height="6.5" fill="#ff00ff"/>
<rect x="584" y="736.0" width="1" height="7.2" fill="#ff00ff"/>
<rect x="585" y="736.5" width="1" height="4.7" fill="#ff00ff"/>
<rect x="586" y="736.2" width="1" height="6.0" fill="#ff00ff"/>
<rect x="587" y="735.9" width="1" height="7.1" fill="#ff00ff"/>
<rect x="588" y="735.8" width="1" height="6.3" fill="#ff00ff"/>
<rect x="589" y="736.7" width="1" height="5.4" fill="#ff00ff"/>
<rect x="590" y="736.0" width="1" height="6.3" fill="#ff00ff"/>
<rect x="591" y="736.6" width="1" height="6.1" fill="#ff00ff"/>
<rect x="592" y="736.4" width="1" height="5.6" fill="#ff00ff"/>
<rect x="593" y="735.2" width="1" height="7.5" fill="#ff00ff"/>
<rect x="594" y="736.1" width="1" height="6.8" fill="#ff00ff"/>
<rect x="595" y="736.5" width="1" height="4.9" fill="#ff00ff"/>
<rect x="596" y="735.6" width="1" height="5.8" fill="#ff00ff"/>
<rect x="597" y="736.8" width="1" height="4.8" fill="#ff00ff"/>
<rect x="598" y="735.6" width="1" height="7.6" fill="#ff00ff"/>
<rect x="599" y="736.6" width="1" height="5.1" fill="#ff00ff"/>
<rect x="600" y="736.9" width="1" height="6.4" fill="#ff00ff"/>
<rect x="601" y="736.7" width="1" height="5.3" fill="#ff00ff"/>
<rect x="602" y="737.2" width="1" height="5.7" fill="#ff00ff"/>
<rect x="603" y="737.1" width="1" height="7.2" fill="#ff00ff"/>
<rect x="604" y="737.6" width="1" height="6.5" fill="#ff00ff"/>
<rect x="605" y="736.5" width="1" height="6.5" fill="#ff00ff"/>
<rect x="606" y="737.3" width="1" height="5.1" fill="#ff00ff"/>
<rect x="607" y="738.3" width="1" height="4.9" fill="#ff00ff"/>
<rect x="608" y="737.1" width="1" height="6.2" fill="#ff00ff"/>
<rect x="609" y="737.2" width="1" height="7.5" fill="#ff00ff"/>
<rect x="610" y="737.9" width="1" height="6.2" fill="#ff00ff"/>
<rect x="611" y="737.7" width="1" height="5.4" fill="#ff00ff"/>
<rect x="612" y="737.6" width="1" height="7.4" fill="#ff00ff"/>
<rect x="613" y="738.6" width="1" height="6.5" fill="#ff00ff"/>
<rect x="614" y="737.7" width="1" height="6.0" fill="#ff00ff"/>
<rect x="615" y="737.5" width="1" height="7.1" fill="#ff00ff"/>
<rect x="616" y="738.1" width="1" height="6.4" fill="#ff00ff"/>
<rect x="617" y="738.4" width="1" height="6.5" fill="#ff00ff"/>
<rect x="618" y="738.3" width="1" height="7.2" fill="#ff00ff"/>
<rect x="619" y="738.1" width="1" height="7.8" fill="#ff00ff"/>
<rect x="620" y="738.8" width="1" height="5.1" fill="#ff00ff"/>
<rect x="621" y="738.5" width="1" height="6.7" fill="#ff00ff"/>
<rect x="622" y="738.7" width="1" height="6.6" fill="#ff00ff"/>
<rect x="623" y="738.7" width="1" height="6.0" fill="#ff00ff"/>
<rect x="624" y="739.6" width="1" height="5.2" fill="#ff00ff"/>
<rect x="625" y="739.6" width="1" height="6.6" fill="#ff00ff"/>
<rect x="626" y="739.4" width="1" height="6.0" fill="#ff00ff"/>
<rect x="627" y="740.1" width="1" height="5.3" fill="#ff00ff"/>
<rect x="628" y="740.1" width="1" height="4.6" fill="#ff00ff"/>
<rect x="629" y="739.4" width="1" height="6.7" fill="#ff00ff"/>
<rect x="630" y="738.8" width="1" height="7.9" fill="#ff00ff"/>
<rect x="631" y="739.0" width="1" height="7.2" fill="#ff00ff"/>
<rect x="632" y="739.2" width="1" height="7.8" fill="#ff00ff"/>
<rect x="633" y="740.0" width="1" height="6.8" fill="#ff00ff"/>
<rect x="634" y="740.0" width="1" height="6.7" fill="#ff00ff"/>
<rect x="635" y="740.4" width="1" height="5.5" fill="#ff00ff"/>
<rect x="636" y="739.7" width="1" height="7.5" fill="#ff00ff"/>
<rect x="637" y="739.6" width="1" height="7.8" fill="#ff00ff"/>
<rect x="638" y="739.8" width="1" height="5.9" fill="#ff00ff"/>
<rect x="639" y="739.7" width="1" height="7.6" fill="#ff00ff"/>
<rect x="640" y="741.4" width="1" height="5.2" fill="#ff00ff"/>
<rect x="641" y="740.9" width="1" height="5.4" fill="#ff00ff"/>
<rect x="642" y="741.5" width="1" height="5.9" fill="#ff00ff"/>
<rect x="643" y="740.2" width="1" height="5.9" fill="#ff00ff"/>
<rect x="644" y="741.3" width="1" height="4.8" fill="#ff00ff"/>
<rect x="645" y="741.6" width="1" height="5.2" fill="#ff00ff"/>
<rect x="646" y="740.5" width="1" height="6.9" fill="#ff00ff"/>
<rect x="647" y="740.6" width="1" height="6.7" fill="#ff00ff"/>
<rect x="648" y="740.2" width="1" height="7.8" fill="#ff00ff"/>
<rect x="649" y="740.5" width="1" height="7.4" fill="#ff00ff"/>
<rect x="650" y="740.1" width="1" height="7.6" fill="#ff00ff"/>
<rect x="651" y="741.6" width="1" height="5.1" fill="#ff00ff"/>
<rect x="652" y="739.8" width="1" height="6.8" fill="#ff00ff"/>
<rect x="653" y="740.9" width="1" height="5.4" fill="#ff00ff"/>
<rect x="654" y="740.7" width="1" height="5.2" fill="#ff00ff"/>
<rect x="655" y="740.5" width="1" height="6.8" fill="#ff00ff"/>
<rect x="656" y="740.4" width="1" height="6.8" fill="#ff00ff"/>
<rect x="657" y="739.8" width="1" height="7.7" fill="#ff00ff"/>
<rect x="658" y="739.7" width="1" height="7.9" fill="#ff00ff"/>
<rect x="659" y="741.3" width="1" height="6.4" fill="#ff00ff"/>
<rect x="660" y="740.4" width="1" height="5.7" fill="#ff00ff"/>
<rect x="661" y="740.0" width="1" height="7.1" fill="#ff00ff"/>
<rect x="662" y="740.2" width="1" height="7.2" fill="#ff00ff"/>
<rect x="663" y="739.4" width="1" height="6.9" fill="#ff00ff"/>
<rect x="664" y="740.8" width="1" height="5.8" fill="#ff00ff"/>
<rect x="665" y="740.2" width="1" height="5.2" fill="#ff00ff"/>
<rect x="666" y="739.4" width="1" height="6.4" fill="#ff00ff"/>
<rect x="667" y="740.7" width="1" height="6.3" fill="#ff00ff"/>
<rect x="668" y="739.5" width="1" height="7.7" fill="#ff00ff"/>
<rect x="669" y="739.1" width="1" height="7.3" fill="#ff00ff"/>
<rect x="670" y="740.7" width="1" height="5.1" fill="#ff00ff"/>
<rect x="671" y="740.6" width="1" height="5.8" fill="#ff00ff"/>
<rect x="672" y="739.0" width="1" height="6.7" fill="#ff00ff"/>
<rect x="673" y="739.6" width="1" height="5.8" fill="#ff00ff"/>
<rect x="674" y="740.1" width="1" height="5.1" fill="#ff00ff"/>
<rect x="675" y="740.2" width="1" height="5.3" fill="#ff00ff"/>
<rect x="676" y="738.8" width="1" height="7.2" fill="#ff00ff"/>
<rect x="677" y="738.8" width="1" height="7.1" fill="#ff00ff"/>
<rect x="678" y="740.0" width="1" height="6.0" fill="#ff00ff"/>
<rect x="679" y="741.6" width="1" height="5.2" fill="#ff00ff"/>
<rect x="680" y="743.8" width="1" height="5.3" fill="#ff00ff"/>
<rect x="681" y="746.1" width="1" height="5.1" fill="#ff00ff"/>
<rect x="682" y="748.1" width="1" height="5.8" fill="#ff00ff"/>
<rect x="683" y="745.1" width="1" height="6.9" fill="#ff00ff"/>
<rect x="684" y="742.0" width="1" height="6.1" fill="#ff00ff"/>
<rect x="685" y="740.7" width="1" height="5.1" fill="#ff00ff"/>
<rect x="686" y="737.8" width="1" height="6.5" fill="#ff00ff"/>
<rect x="687" y="734.5" width="1" height="5.5" fill="#ff00ff"/>
<rect x="688" y="733.8" width="1" height="7.9" fill="#ff00ff"/>
<rect x="689" y="733.8" width="1" height="6.9" fill="#ff00ff"/>
<rect x="690" y="734.6" width="1" height="5.3" fill="#ff00ff"/>
<rect x="691" y="734.4" width="1" height="5.5" fill="#ff00ff"/>
<rect x="692" y="734.6" width="1" height="6.2" fill="#ff00ff"/>
<rect x="693" y="734.3" width="1" height="5.8" fill="#ff00ff"/>
<rect x="694" y="734.3" width="1" height="5.7" fill="#ff00ff"/>
<rect x="695" y="733.8" width="1" height="6.3" fill="#ff00ff"/>
<rect x="696" y="735.2" width="1" height="5.6" fill="#ff00ff"/>
<rect x="697" y="735.2" width="1" height="4.4" fill="#ff00ff"/>
<rect x="698" y="735.3" width="1" height="5.4" fill="#ff00ff"/>
<rect x="699" y="735.0" width="1" height="5.9" fill="#ff00ff"/>
<rect x="700" y="734.8" width="1" height="5.3" fill="#ff00ff"/>
<rect x="701" y="735.0" width="1" height="5.0" fill="#ff00ff"/>
<rect x="702" y="734.1" width="1" height="5.6" fill="#ff00ff"/>
<rect x="703" y="734.3" width="1" height="6.5" fill="#ff00ff"/>
<rect x="704" y="734.1" width="1" height="7.5" fill="#ff00ff"/>
<rect x="705" y="733.8" width="1" height="7.2" fill="#ff00ff"/>
<rect x="706" y="734.0" width="1" height="6.9" fill="#ff00ff"/>
<rect x="707" y="735.0" width="1" height="6.2" fill="#ff00ff"/>
<rect x="708" y="733.7" width="1" height="6.5" fill="#ff00ff"/>
<rect x="709" y="734.7" width="1" height="7.2" fill="#ff00ff"/>
<rect x="710" y="733.7" width="1" height="7.3" fill="#ff00ff"/>
<rect x="711" y="734.8" width="1" height="6.6" fill="#ff00ff"/>
<rect x="712" y="734.2" width="1" height="7.2" fill="#ff00ff"/>
<rect x="713" y="734.4" width="1" height="7.3" fill="#ff00ff"/>
<rect x="714" y="733.6" width="1" height="8.1" fill="#ff00ff"/>
<rect x="715" y="734.3" width="1" height="6.2" fill="#ff00ff"/>
<rect x="716" y="733.8" width="1" height="6.4" fill="#ff00ff"/>
<rect x="717" y="734.9" width="1" height="6.2" fill="#ff00ff"/>
<rect x="718" y="733.9" width="1" height="6.5" fill="#ff00ff"/>
<rect x="719" y="733.9" width="1" height="6.2" fill="#ff00ff"/>
<rect x="720" y="734.0" width="1" height="6.4" fill="#ff00ff"/>
<rect x="721" y="735.4" width="1" height="6.5" fill="#ff00ff"/>
<rect x="722" y="735.0" width="1" height="5.7" fill="#ff00ff"/>
<rect x="723" y="734.5" width="1" height="6.9" fill="#ff00ff"/>
<rect x="724" y="735.2" width="1" height="6.1" fill="#ff00ff"/>
<rect x="725" y="734.7" width="1" height="5.3" fill="#ff00ff"/>
<rect x="726" y="734.7" width="1" height="6.8" fill="#ff00ff"/>
<rect x="727" y="735.0" width="1" height="4.8" fill="#ff00ff"/>
<rect x="728" y="734.9" width="1" height="5.5" fill="#ff00ff"/>
<rect x="729" y="733.9" width="1" height="7.9" fill="#ff00ff"/>
<rect x="730" y="734.8" width="1" height="6.5" fill="#ff00ff"/>
<rect x="731" y="733.8" width="1" height="7.7" fill="#ff00ff"/>
<rect x="732" y="735.3" width="1" height="6.4" fill="#ff00ff"/>
<rect x="733" y="734.9" width="1" height="6.6" fill="#ff00ff"/>
<rect x="734" y="735.0" width="1" height="5.9" fill="#ff00ff"/>
<rect x="735" y="734.4" width="1" height="7.1" fill="#ff00ff"/>
<rect x="736" y="735.0" width="1" height="6.6" fill="#ff00ff"/>
<rect x="737" y="734.1" width="1" height="7.7" fill="#ff00ff"/>
<rect x="738" y="734.9" width="1" height="7.2" fill="#ff00ff"/>
<rect x="739" y="734.6" width="1" height="8.0" fill="#ff00ff"/>
<rect x="740" y="736.1" width="1" height="5.2" fill="#ff00ff"/>
<rect x="741" y="736.6" width="1" height="5.0" fill="#ff00ff"/>
<rect x="742" y="735.8" width="1" height="6.7" fill="#ff00ff"/>
<rect x="743" y="736.3" width="1" height="6.7" fill="#ff00ff"/>
<rect x="744" y="737.9" width="1" height="5.9" fill="#ff00ff"/>
<rect x="745" y="737.9" width="1" height="5.6" fill="#ff00ff"/>
<rect x="746" y="738.0" width="1" height="6.4" fill="#ff00ff"/>
<rect x="747" y="737.8" width="1" height="6.9" fill="#ff00ff"/>
<rect x="748" y="738.1" width="1" height="5.4" fill="#ff00ff"/>
<rect x="749" y="736.7" width="1" height="7.3" fill="#ff00ff"/>
<rect x="750" y="738.1" width="1" height="5.3" fill="#ff00ff"/>
<rect x="751" y="737.6" width="1" height="6.9" fill="#ff00ff"/>
<rect x="752" y="738.0" width="1" height="4.6" fill="#ff00ff"/>
<rect x="753" y="737.4" width="1" height="5.2" fill="#ff00ff"/>
<rect x="754" y="736.7" width="1" height="7.7" fill="#ff00ff"/>
<rect x="755" y="737.3" width="1" height="6.6" fill="#ff00ff"/>
<rect x="756" y="737.3" width="1" height="5.9" fill="#ff00ff"/>
<rect x="757" y="736.9" width="1" height="6.4" fill="#ff00ff"/>
<rect x="758" y="738.0" width="1" height="5.9" fill="#ff00ff"/>
<rect x="759" y="737.0" width="1" height="5.7" fill="#ff00ff"/>
<rect x="760" y="737.0" width="1" height="7.1" fill="#ff00ff"/>
<rect x="761" y="737.3" width="1" height="6.7" fill="#ff00ff"/>
<rect x="762" y="737.9" width="1" height="4.8" fill="#ff00ff"/>
<rect x="763" y="737.7" width="1" height="4.9" fill="#ff00ff"/>
<rect x="764" y="737.9" width="1" height="4.9" fill="#ff00ff"/>
<rect x="765" y="736.9" width="1" height="7.7" fill="#ff00ff"/>
<rect x="766" y="737.1" width="1" height="5.9" fill="#ff00ff"/>
<rect x="767" y="738.0" width="1" height="5.8" fill="#ff00ff"/>
<rect x="768" y="738.0" width="1" height="5.3" fill="#ff00ff"/>
<rect x="769" y="737.3" width="1" height="7.3" fill="#ff00ff"/>
<rect x="770" y="737.3" width="1" height="7.4" fill="#ff00ff"/>
<rect x="771" y="736.7" width="1" height="7.6" fill="#ff00ff"/>
<rect x="772" y="736.7" width="1" height="6.9" fill="#ff00ff"/>
<rect x="773" y="736.4" width="1" height="6.4" fill="#ff00ff"/>
<rect x="774" y="738.0" width="1" height="5.3" fill="#ff00ff"/>
<rect x="775" y="737.8" width="1" height="5.1" fill="#ff00ff"/>
<rect x="776" y="737.0" width="1" height="5.6" fill="#ff00ff"/>
<rect x="777" y="737.3" width="1" height="7.0" fill="#ff00ff"/>
<rect x="778" y="737.2" width="1" height="5.9" fill="#ff00ff"/>
<rect x="779" y="738.0" width="1" height="6.4" fill="#ff00ff"/>
<rect x="780" y="737.5" width="1" height="5.0" fill="#ff00ff"/>
<rect x="781" y="737.4" width="1" height="5.9" fill="#ff00ff"/>
<rect x="782" y="738.0" width="1" height="5.1" fill="#ff00ff"/>
<rect x="783" y="737.5" width="1" height="6.3" fill="#ff00ff"/>
<rect x="784" y="736.9" width="1" height="6.5" fill="#ff00ff"/>
<rect x="785" y="737.5" width="1" height="6.9" fill="#ff00ff"/>
<rect x="786" y="737.1" width="1" height="5.9" fill="#ff00ff"/>
<rect x="787" y="738.0" width="1" height="4.4" fill="#ff00ff"/>
<rect x="788" y="737.7" width="1" height="6.1" fill="#ff00ff"/>
<rect x="789" y="737.2" width="1" height="6.0" fill="#ff00ff"/>
<rect x="790" y="737.6" width="1" height="6.7" fill="#ff00ff"/>
<rect x="791" y="737.5" width="1" height="6.4" fill="#ff00ff"/>
<rect x="792" y="736.3" width="1" height="6.7" fill="#ff00ff"/>
<rect x="793" y="736.4" width="1" height="7.9" fill="#ff00ff"/>
<rect x="794" y="737.8" width="1" height="4.7" fill="#ff00ff"/>
<rect x="795" y="737.2" width="1" height="6.3" fill="#ff00ff"/>
<rect x="796" y="736.2" width="1" height="6.8" fill="#ff00ff"/>
<rect x="797" y="737.5" width="1" height="6.1" fill="#ff00ff"/>
<rect x="798" y="736.6" width="1" height="7.2" fill="#ff00ff"/>
<rect x="799" y="736.7" width="1" height="6.7" fill="#ff00ff"/>
<rect x="800" y="736.9" width="1" height="7.5" fill="#ff00ff"/>
<rect x="801" y="737.3" width="1" height="6.7" fill="#ff00ff"/>
<rect x="802" y="737.3" width="1" height="5.7" fill="#ff00ff"/>
<rect x="803" y="737.8" width="1" height="5.9" fill="#ff00ff"/>
<rect x="804" y="737.3" width="1" height="5.4" fill="#ff00ff"/>
<rect x="805" y="736.3" width="1" height="7.0" fill="#ff00ff"/>
<rect x="806" y="737.5" width="1" height="6.3" fill="#ff00ff"/>
<rect x="807" y="736.6" width="1" height="5.7" fill="#ff00ff"/>
<rect x="808" y="736.9" width="1" height="7.1" fill="#ff00ff"/>
<rect x="809" y="736.2" width="1" height="7.4" fill="#ff00ff"/>
<rect x="810" y="736.2" width="1" height="6.4" fill="#ff00ff"/>
<rect x="811" y="736.0" width="1" height="6.6" fill="#ff00ff"/>
<rect x="812" y="736.5" width="1" height="7.5" fill="#ff00ff"/>
<rect x="813" y="737.6" width="1" height="4.7" fill="#ff00ff"/>
<rect x="814" y="736.4" width="1" height="7.6" fill="#ff00ff"/>
<rect x="815" y="736.1" width="1" height="6.4" fill="#ff00ff"/>
<rect x="816" y="736.5" width="1" height="5.5" fill="#ff00ff"/>
<rect x="817" y="736.2" width="1" height="6.4" fill="#ff00ff"/>
<rect x="818" y="736.4" width="1" height="7.5" fill="#ff00ff"/>
<rect x="819" y="736.2" width="1" height="6.0" fill="#ff00ff"/>
<rect x="820" y="737.3" width="1" height="5.4" fill="#ff00ff"/>
<rect x="821" y="737.1" width="1" height="6.0" fill="#ff00ff"/>
<rect x="822" y="737.0" width="1" height="5.3" fill="#ff00ff"/>
<rect x="823" y="735.9" width="1" height="7.5" fill="#ff00ff"/>
<rect x="824" y="736.4" width="1" height="6.4" fill="#ff00ff"/>
<rect x="825" y="736.7" width="1" height="6.5" fill="#ff00ff"/>
<rect x="826" y="736.0" width="1" height="6.3" fill="#ff00ff"/>
<rect x="827" y="737.1" width="1" height="5.6" fill="#ff00ff"/>
<rect x="828" y="736.0" width="1" height="6.9" fill="#ff00ff"/>
<rect x="829" y="735.9" width="1" height="7.3" fill="#ff00ff"/>
<rect x="830" y="735.5" width="1" height="7.8" fill="#ff00ff"/>
<rect x="831" y="736.4" width="1" height="5.8" fill="#ff00ff"/>
<rect x="832" y="737.1" width="1" height="4.9" fill="#ff00ff"/>
<rect x="833" y="735.8" width="1" height="5.7" fill="#ff00ff"/>
<rect x="834" y="736.3" width="1" height="6.7" fill="#ff00ff"/>
<rect x="835" y="736.5" width="1" height="5.7" fill="#ff00ff"/>
<rect x="836" y="736.7" width="1" height="4.8" fill="#ff00ff"/>
<rect x="837" y="735.8" width="1" height="6.9" fill="#ff00ff"/>
<rect x="838" y="737.0" width="1" height="5.7" fill="#ff00ff"/>
<rect x="839" y="736.4" width="1" height="6.5" fill="#ff00ff"/>
<rect x="840" y="735.9" width="1" height="7.5" fill="#ff00ff"/>
<rect x="841" y="736.5" width="1" height="5.4" fill="#ff00ff"/>
<rect x="842" y="735.8" width="1" height="7.1" fill="#ff00ff"/>
<rect x="843" y="735.7" width="1" height="5.8" fill="#ff00ff"/>
<rect x="844" y="736.8" width="1" height="5.7" fill="#ff00ff"/>
<rect x="845" y="736.2" width="1" height="6.6" fill="#ff00ff"/>
<rect x="846" y="737.0" width="1" height="4.7" fill="#ff00ff"/>
<rect x="847" y="736.1" width="1" height="5.5" fill="#ff00ff"/>
<rect x="848" y="736.3" width="1" height="6.4" fill="#ff00ff"/>
<rect x="849" y="737.2" width="1" height="6.0" fill="#ff00ff"/>
<rect x="850" y="736.8" width="1" height="5.9" fill="#ff00ff"/>
<rect x="851" y="736.9" width="1" height="5.6" fill="#ff00ff"/>
<rect x="852" y="737.5" width="1" height="6.3" fill="#ff00ff"/>
<rect x="853" y="737.6" width="1" height="4.8" fill="#ff00ff"/>
<rect x="854" y="737.4" width="1" height="6.5" fill="#ff00ff"/>
<rect x="855" y="737.2" width="1" height="7.2" fill="#ff00ff"/>
<rect x="856" y="738.0" width="1" height="6.1" fill="#ff00ff"/>
<rect x="857" y="738.0" width="1" height="6.0" fill="#ff00ff"/>
<rect x="858" y="738.2" width="1" height="4.7" fill="#ff00ff"/>
<rect x="859" y="738.0" width="1" height="6.4" fill="#ff00ff"/>
<rect x="860" y="737.9" width="1" height="5.5" fill="#ff00ff"/>
<rect x="861" y="737.0" width="1" height="7.3" fill="#ff00ff"/>
<rect x="862" y="738.5" width="1" height="5.1" fill="#ff00ff"/>
<rect x="863" y="737.5" width="1" height="6.1" fill="#ff00ff"/>
<rect x="864" y="737.4" width="1" height="7.4" fill="#ff00ff"/>
<rect x="865" y="739.1" width="1" height="6.1" fill="#ff00ff"/>
<rect x="866" y="738.0" width="1" height="7.0" fill="#ff00ff"/>
<rect x="867" y="737.6" width="1" height="7.8" fill="#ff00ff"/>
<rect x="868" y="738.2" width="1" height="5.4" fill="#ff00ff"/>
<rect x="869" y="738.8" width="1" height="5.2" fill="#ff00ff"/>
<rect x="870" y="738.3" width="1" height="5.6" fill="#ff00ff"/>
<rect x="871" y="738.7" width="1" height="6.5" fill="#ff00ff"/>
<rect x="872" y="739.5" width="1" height="4.6" fill="#ff00ff"/>
<rect x="873" y="739.6" width="1" height="4.8" fill="#ff00ff"/>
<rect x="874" y="738.6" width="1" height="7.0" fill="#ff00ff"/>
<rect x="875" y="738.9" width="1" height="6.1" fill="#ff00ff"/>
<rect x="876" y="739.3" width="1" height="5.5" fill="#ff00ff"/>
<rect x="877" y="739.8" width="1" height="5.1" fill="#ff00ff"/>
<rect x="878" y="740.0" width="1" height="6.3" fill="#ff00ff"/>
<rect x="879" y="739.5" width="1" height="5.1" fill="#ff00ff"/>
<rect x="880" y="740.0" width="1" height="4.7" fill="#ff00ff"/>
<rect x="881" y="739.6" width="1" height="6.1" fill="#ff00ff"/>
<rect x="882" y="738.8" width="1" height="7.3" fill="#ff00ff"/>
<rect x="883" y="740.1" width="1" height="6.0" fill="#ff00ff"/>
<rect x="884" y="739.6" width="1" height="6.5" fill="#ff00ff"/>
<rect x="885" y="740.0" width="1" height="5.5" fill="#ff00ff"/>
<rect x="886" y="740.6" width="1" height="6.7" fill="#ff00ff"/>
<rect x="887" y="740.5" width="1" height="6.8" fill="#ff00ff"/>
<rect x="888" y="739.7" width="1" height="7.7" fill="#ff00ff"/>
<rect x="889" y="739.3" width="1" height="7.0" fill="#ff00ff"/>
<rect x="890" y="739.5" width="1" height="6.8" fill="#ff00ff"/>
<rect x="891" y="740.6" width="1" height="6.4" fill="#ff00ff"/>
<rect x="892" y="740.2" width="1" height="6.0" fill="#ff00ff"/>
<rect x="893" y="739.8" width="1" height="6.6" fill="#ff00ff"/>
<rect x="894" y="740.1" width="1" height="5.9" fill="#ff00ff"/>
<rect x="895" y="740.9" width="1" height="5.9" fill="#ff00ff"/>
<rect x="896" y="740.5" width="1" height="5.7" fill="#ff00ff"/>
<rect x="897" y="741.0" width="1" height="5.2" fill="#ff00ff"/>
<rect x="898" y="740.3" width="1" height="6.8" fill="#ff00ff"/>
<rect x="899" y="741.2" width="1" height="7.0" fill="#ff00ff"/>
<rect x="900" y="741.3" width="1" height="6.8" fill="#ff00ff"/>
<rect x="901" y="741.7" width="1" height="6.0" fill="#ff00ff"/>
<rect x="902" y="741.4" width="1" height="4.8" fill="#ff00ff"/>
<rect x="903" y="740.3" width="1" height="5.7" fill="#ff00ff"/>
<rect x="904" y="741.3" width="1" height="6.1" fill="#ff00ff"/>
<rect x="905" y="740.7" width="1" height="5.5" fill="#ff00ff"/>
<rect x="906" y="740.0" width="1" height="5.7" fill="#ff00ff"/>
<rect x="907" y="740.4" width="1" height="7.1" fill="#ff00ff"/>
<rect x="908" y="739.6" width="1" height="5.6" fill="#ff00ff"/>
<rect x="909" y="739.2" width="1" height="6.5" fill="#ff00ff"/>
<rect x="910" y="740.3" width="1" height="6.2" fill="#ff00ff"/>
<rect x="911" y="739.4" width="1" height="5.4" fill="#ff00ff"/>
<rect x="912" y="738.6" width="1" height="6.2" fill="#ff00ff"/>
<rect x="913" y="739.6" width="1" height="5.7" fill="#ff00ff"/>
<rect x="914" y="739.8" width="1" height="6.3" fill="#ff00ff"/>
<rect x="915" y="739.3" width="1" height="5.7" fill="#ff00ff"/>
<rect x="916" y="739.1" width="1" height="4.8" fill="#ff00ff"/>
<rect x="917" y="737.7" width="1" height="7.1" fill="#ff00ff"/>
<rect x="918" y="738.2" width="1" height="5.6" fill="#ff00ff"/>
<rect x="919" y="737.6" width="1" height="5.6" fill="#ff00ff"/>
<rect x="920" y="738.6" width="1" height="6.0" fill="#ff00ff"/>
<rect x="921" y="738.5" width="1" height="6.6" fill="#ff00ff"/>
<rect x="922" y="737.4" width="1" height="6.9" fill="#ff00ff"/>
<rect x="923" y="737.1" width="1" height="7.2" fill="#ff00ff"/>
<rect x="924" y="737.8" width="1" height="4.8" fill="#ff00ff"/>
<rect x="925" y="736.1" width="1" height="6.5" fill="#ff00ff"/>
<rect x="184" y="740.9" width="1" height="12.1" fill="#e040e0"/>
<rect x="226" y="737.1" width="1" height="7.9" fill="#e040e0"/>
<rect x="232" y="737.0" width="1" height="7.0" fill="#e040e0"/>
<rect x="254" y="738.0" width="1" height="8.0" fill="#e040e0"/>
<rect x="265" y="737.0" width="1" height="6.0" fill="#e040e0"/>
<rect x="281" y="737.0" width="1" height="10.0" fill="#e040e0"/>
<rect x="288" y="737.0" width="1" height="8.0" fill="#e040e0"/>
<rect x="317" y="737.1" width="1" height="4.9" fill="#e040e0"/>
<rect x="329" y="737.4" width="1" height="6.6" fill="#e040e0"/>
<rect x="355" y="739.2" width="1" height="5.8" fill="#e040e0"/>
<rect x="361" y="740.3" width="1" height="4.7" fill="#e040e0"/>
<rect x="376" y="741.7" width="1" height="5.3" fill="#e040e0"/>
<rect x="386" y="742.3" width="1" height="4.7" fill="#e040e0"/>
<rect x="403" y="743.4" width="1" height="4.6" fill="#e040e0"/>
<rect x="474" y="737.5" width="1" height="9.5" fill="#e040e0"/>
<rect x="488" y="737.5" width="1" height="7.5" fill="#e040e0"/>
<rect x="497" y="738.8" width="1" height="8.2" fill="#e040e0"/>
<rect x="519" y="739.7" width="1" height="7.3" fill="#e040e0"/>
<rect x="535" y="739.4" width="1" height="9.6" fill="#e040e0"/>
<rect x="528" y="739.5" width="1" height="6.5" fill="#e040e0"/>
<rect x="546" y="739.2" width="1" height="5.8" fill="#e040e0"/>
<rect x="552" y="739.1" width="1" height="5.9" fill="#e040e0"/>
<rect x="560" y="739.0" width="1" height="6.0" fill="#e040e0"/>
<rect x="575" y="739.0" width="1" height="6.0" fill="#e040e0"/>
<rect x="585" y="739.0" width="1" height="7.0" fill="#e040e0"/>
<rect x="602" y="739.8" width="1" height="7.2" fill="#e040e0"/>
<rect x="618" y="741.5" width="1" height="7.5" fill="#e040e0"/>
<rect x="626" y="742.3" width="1" height="5.7" fill="#e040e0"/>
<rect x="636" y="743.2" width="1" height="3.8" fill="#e040e0"/>
<rect x="645" y="744.0" width="1" height="3.0" fill="#e040e0"/>
<rect x="658" y="743.4" width="1" height="5.6" fill="#e040e0"/>
<rect x="664" y="743.1" width="1" height="4.9" fill="#e040e0"/>
<rect x="675" y="742.6" width="1" height="7.4" fill="#e040e0"/>
<rect x="715" y="737.5" width="1" height="5.5" fill="#e040e0"/>
<rect x="724" y="737.5" width="1" height="9.5" fill="#e040e0"/>
<rect x="741" y="739.0" width="1" height="8.0" fill="#e040e0"/>
<rect x="749" y="740.5" width="1" height="5.5" fill="#e040e0"/>
<rect x="760" y="740.4" width="1" height="5.6" fill="#e040e0"/>
<rect x="783" y="740.2" width="1" height="6.8" fill="#e040e0"/>
<rect x="788" y="740.1" width="1" height="4.9" fill="#e040e0"/>
<rect x="803" y="740.0" width="1" height="4.0" fill="#e040e0"/>
<rect x="815" y="739.7" width="1" height="4.3" fill="#e040e0"/>
<rect x="826" y="739.4" width="1" height="5.6" fill="#e040e0"/>
<rect x="845" y="739.2" width="1" height="5.8" fill="#e040e0"/>
<rect x="860" y="740.7" width="1" height="9.3" fill="#e040e0"/>
<rect x="871" y="741.8" width="1" height="16.2" fill="#e040e0"/>
<rect x="892" y="743.3" width="1" height="6.7" fill="#e040e0"/>
<rect x="902" y="744.0" width="1" height="6.0" fill="#e040e0"/>
<rect x="915" y="741.7" width="1" height="6.3" fill="#e040e0"/>
<rect x="922" y="740.5" width="1" height="8.5" fill="#e040e0"/>
<polygon points="422,739 434,740 430,750 427,756 425,750" fill="#ff00ff" shape-rendering="geometricPrecision"/>
<polygon points="678,740 688,738 684,755 682,762 680,755" fill="#ff00ff" shape-rendering="geometricPrecision"/>
<rect x="173" y="350" width="2" height="376" fill="#2020a0"/>
<rect x="681.5" y="350" width="2" height="151" fill="#1010a0"/>
<rect x="173" y="726" width="2" height="75" fill="#dc3a2a"/>
<rect x="45" y="125" width="1007" height="2" fill="#101010"/>
<rect x="46" y="801" width="1006" height="2" fill="#101010"/>
<rect x="53" y="125" width="2" height="677" fill="#101010"/>
<rect x="1051" y="125" width="2" height="686" fill="#101010"/>
<rect x="46" y="801" width="16" height="2" fill="#101010"/>
<rect x="1044" y="801" width="8" height="2" fill="#101010"/>
<rect x="50" y="786" width="8" height="2" fill="#101010"/>
<rect x="1048" y="786" width="4" height="2" fill="#101010"/>
<rect x="50" y="771" width="8" height="2" fill="#101010"/>
<rect x="1048" y="771" width="4" height="2" fill="#101010"/>
<rect x="50" y="756" width="8" height="2" fill="#101010"/>
<rect x="1048" y="756" width="4" height="2" fill="#101010"/>
<rect x="50" y="741" width="8" height="2" fill="#101010"/>
<rect x="1048" y="741" width="4" height="2" fill="#101010"/>
<rect x="46" y="726" width="16" height="2" fill="#101010"/>
<rect x="1044" y="726" width="8" height="2" fill="#101010"/>
<rect x="50" y="711" width="8" height="2" fill="#101010"/>
<rect x="1048" y="711" width="4" height="2" fill="#101010"/>
<rect x="50" y="696" width="8" height="2" fill="#101010"/>
<rect x="1048" y="696" width="4" height="2" fill="#101010"/>
<rect x="50" y="681" width="8" height="2" fill="#101010"/>
<rect x="1048" y="681" width="4" height="2" fill="#101010"/>
<rect x="50" y="666" width="8" height="2" fill="#101010"/>
<rect x="1048" y="666" width="4" height="2" fill="#101010"/>
<rect x="46" y="651" width="16" height="2" fill="#101010"/>
<rect x="1044" y="651" width="8" height="2" fill="#101010"/>
<rect x="50" y="636" width="8" height="2" fill="#101010"/>
<rect x="1048" y="636" width="4" height="2" fill="#101010"/>
<rect x="50" y="621" width="8" height="2" fill="#101010"/>
<rect x="1048" y="621" width="4" height="2" fill="#101010"/>
<rect x="50" y="606" width="8" height="2" fill="#101010"/>
<rect x="1048" y="606" width="4" height="2" fill="#101010"/>
<rect x="50" y="591" width="8" height="2" fill="#101010"/>
<rect x="1048" y="591" width="4" height="2" fill="#101010"/>
<rect x="46" y="576" width="16" height="2" fill="#101010"/>
<rect x="1044" y="576" width="8" height="2" fill="#101010"/>
<rect x="50" y="561" width="8" height="2" fill="#101010"/>
<rect x="1048" y="561" width="4" height="2" fill="#101010"/>
<rect x="50" y="546" width="8" height="2" fill="#101010"/>
<rect x="1048" y="546" width="4" height="2" fill="#101010"/>
<rect x="50" y="531" width="8" height="2" fill="#101010"/>
<rect x="1048" y="531" width="4" height="2" fill="#101010"/>
<rect x="50" y="516" width="8" height="2" fill="#101010"/>
<rect x="1048" y="516" width="4" height="2" fill="#101010"/>
<rect x="46" y="501" width="16" height="2" fill="#101010"/>
<rect x="1044" y="501" width="8" height="2" fill="#101010"/>
<rect x="50" y="486" width="8" height="2" fill="#101010"/>
<rect x="1048" y="486" width="4" height="2" fill="#101010"/>
<rect x="50" y="471" width="8" height="2" fill="#101010"/>
<rect x="1048" y="471" width="4" height="2" fill="#101010"/>
<rect x="50" y="456" width="8" height="2" fill="#101010"/>
<rect x="1048" y="456" width="4" height="2" fill="#101010"/>
<rect x="50" y="441" width="8" height="2" fill="#101010"/>
<rect x="1048" y="441" width="4" height="2" fill="#101010"/>
<rect x="46" y="426" width="16" height="2" fill="#101010"/>
<rect x="1044" y="426" width="8" height="2" fill="#101010"/>
<rect x="50" y="411" width="8" height="2" fill="#101010"/>
<rect x="1048" y="411" width="4" height="2" fill="#101010"/>
<rect x="50" y="396" width="8" height="2" fill="#101010"/>
<rect x="1048" y="396" width="4" height="2" fill="#101010"/>
<rect x="50" y="381" width="8" height="2" fill="#101010"/>
<rect x="1048" y="381" width="4" height="2" fill="#101010"/>
<rect x="50" y="366" width="8" height="2" fill="#101010"/>
<rect x="1048" y="366" width="4" height="2" fill="#101010"/>
<rect x="46" y="351" width="16" height="2" fill="#101010"/>
<rect x="1044" y="351" width="8" height="2" fill="#101010"/>
<rect x="50" y="336" width="8" height="2" fill="#101010"/>
<rect x="1048" y="336" width="4" height="2" fill="#101010"/>
<rect x="50" y="321" width="8" height="2" fill="#101010"/>
<rect x="1048" y="321" width="4" height="2" fill="#101010"/>
<rect x="50" y="306" width="8" height="2" fill="#101010"/>
<rect x="1048" y="306" width="4" height="2" fill="#101010"/>
<rect x="50" y="291" width="8" height="2" fill="#101010"/>
<rect x="1048" y="291" width="4" height="2" fill="#101010"/>
<rect x="46" y="276" width="16" height="2" fill="#101010"/>
<rect x="1044" y="276" width="8" height="2" fill="#101010"/>
<rect x="50" y="261" width="8" height="2" fill="#101010"/>
<rect x="1048" y="261" width="4" height="2" fill="#101010"/>
<rect x="50" y="245" width="8" height="2" fill="#101010"/>
<rect x="1048" y="245" width="4" height="2" fill="#101010"/>
<rect x="50" y="230" width="8" height="2" fill="#101010"/>
<rect x="1048" y="230" width="4" height="2" fill="#101010"/>
<rect x="50" y="215" width="8" height="2" fill="#101010"/>
<rect x="1048" y="215" width="4" height="2" fill="#101010"/>
<rect x="46" y="200" width="16" height="2" fill="#101010"/>
<rect x="1044" y="200" width="8" height="2" fill="#101010"/>
<rect x="50" y="185" width="8" height="2" fill="#101010"/>
<rect x="1048" y="185" width="4" height="2" fill="#101010"/>
<rect x="50" y="170" width="8" height="2" fill="#101010"/>
<rect x="1048" y="170" width="4" height="2" fill="#101010"/>
<rect x="50" y="155" width="8" height="2" fill="#101010"/>
<rect x="1048" y="155" width="4" height="2" fill="#101010"/>
<rect x="50" y="140" width="8" height="2" fill="#101010"/>
<rect x="1048" y="140" width="4" height="2" fill="#101010"/>
<rect x="46" y="125" width="16" height="2" fill="#101010"/>
<rect x="1044" y="125" width="8" height="2" fill="#101010"/>
<rect x="81.63" y="797" width="1.6" height="11" fill="#101010" shape-rendering="geometricPrecision"/>
<rect x="81.63" y="127" width="1.6" height="4" fill="#101010" shape-rendering="geometricPrecision"/>
<rect x="110.16" y="797" width="1.6" height="11" fill="#101010" shape-rendering="geometricPrecision"/>
<rect x="110.16" y="127" width="1.6" height="4" fill="#101010" shape-rendering="geometricPrecision"/>
<rect x="138.69" y="797" width="1.6" height="11" fill="#101010" shape-rendering="geometricPrecision"/>
<rect x="138.69" y="127" width="1.6" height="4" fill="#101010" shape-rendering="geometricPrecision"/>
<rect x="167.22" y="797" width="1.6" height="11" fill="#101010" shape-rendering="geometricPrecision"/>
<rect x="167.22" y="127" width="1.6" height="4" fill="#101010" shape-rendering="geometricPrecision"/>
<rect x="195.75" y="793" width="1.6" height="18" fill="#101010" shape-rendering="geometricPrecision"/>
<rect x="195.75" y="127" width="1.6" height="8" fill="#101010" shape-rendering="geometricPrecision"/>
<rect x="224.28" y="797" width="1.6" height="11" fill="#101010" shape-rendering="geometricPrecision"/>
<rect x="224.28" y="127" width="1.6" height="4" fill="#101010" shape-rendering="geometricPrecision"/>
<rect x="252.81" y="797" width="1.6" height="11" fill="#101010" shape-rendering="geometricPrecision"/>
<rect x="252.81" y="127" width="1.6" height="4" fill="#101010" shape-rendering="geometricPrecision"/>
<rect x="281.34" y="797" width="1.6" height="11" fill="#101010" shape-rendering="geometricPrecision"/>
<rect x="281.34" y="127" width="1.6" height="4" fill="#101010" shape-rendering="geometricPrecision"/>
<rect x="309.87" y="797" width="1.6" height="11" fill="#101010" shape-rendering="geometricPrecision"/>
<rect x="309.87" y="127" width="1.6" height="4" fill="#101010" shape-rendering="geometricPrecision"/>
<rect x="338.40" y="793" width="1.6" height="18" fill="#101010" shape-rendering="geometricPrecision"/>
<rect x="338.40" y="127" width="1.6" height="8" fill="#101010" shape-rendering="geometricPrecision"/>
<rect x="366.93" y="797" width="1.6" height="11" fill="#101010" shape-rendering="geometricPrecision"/>
<rect x="366.93" y="127" width="1.6" height="4" fill="#101010" shape-rendering="geometricPrecision"/>
<rect x="395.46" y="797" width="1.6" height="11" fill="#101010" shape-rendering="geometricPrecision"/>
<rect x="395.46" y="127" width="1.6" height="4" fill="#101010" shape-rendering="geometricPrecision"/>
<rect x="423.99" y="797" width="1.6" height="11" fill="#101010" shape-rendering="geometricPrecision"/>
<rect x="423.99" y="127" width="1.6" height="4" fill="#101010" shape-rendering="geometricPrecision"/>
<rect x="452.52" y="797" width="1.6" height="11" fill="#101010" shape-rendering="geometricPrecision"/>
<rect x="452.52" y="127" width="1.6" height="4" fill="#101010" shape-rendering="geometricPrecision"/>
<rect x="481.05" y="793" width="1.6" height="18" fill="#101010" shape-rendering="geometricPrecision"/>
<rect x="481.05" y="127" width="1.6" height="8" fill="#101010" shape-rendering="geometricPrecision"/>
<rect x="509.58" y="797" width="1.6" height="11" fill="#101010" shape-rendering="geometricPrecision"/>
<rect x="509.58" y="127" width="1.6" height="4" fill="#101010" shape-rendering="geometricPrecision"/>
<rect x="538.11" y="797" width="1.6" height="11" fill="#101010" shape-rendering="geometricPrecision"/>
<rect x="538.11" y="127" width="1.6" height="4" fill="#101010" shape-rendering="geometricPrecision"/>
<rect x="566.64" y="797" width="1.6" height="11" fill="#101010" shape-rendering="geometricPrecision"/>
<rect x="566.64" y="127" width="1.6" height="4" fill="#101010" shape-rendering="geometricPrecision"/>
<rect x="595.17" y="797" width="1.6" height="11" fill="#101010" shape-rendering="geometricPrecision"/>
<rect x="595.17" y="127" width="1.6" height="4" fill="#101010" shape-rendering="geometricPrecision"/>
<rect x="623.70" y="793" width="1.6" height="18" fill="#101010" shape-rendering="geometricPrecision"/>
<rect x="623.70" y="127" width="1.6" height="8" fill="#101010" shape-rendering="geometricPrecision"/>
<rect x="652.23" y="797" width="1.6" height="11" fill="#101010" shape-rendering="geometricPrecision"/>
<rect x="652.23" y="127" width="1.6" height="4" fill="#101010" shape-rendering="geometricPrecision"/>
<rect x="680.76" y="797" width="1.6" height="11" fill="#101010" shape-rendering="geometricPrecision"/>
<rect x="680.76" y="127" width="1.6" height="4" fill="#101010" shape-rendering="geometricPrecision"/>
<rect x="709.29" y="797" width="1.6" height="11" fill="#101010" shape-rendering="geometricPrecision"/>
<rect x="709.29" y="127" width="1.6" height="4" fill="#101010" shape-rendering="geometricPrecision"/>
<rect x="737.82" y="797" width="1.6" height="11" fill="#101010" shape-rendering="geometricPrecision"/>
<rect x="737.82" y="127" width="1.6" height="4" fill="#101010" shape-rendering="geometricPrecision"/>
<rect x="766.35" y="793" width="1.6" height="18" fill="#101010" shape-rendering="geometricPrecision"/>
<rect x="766.35" y="127" width="1.6" height="8" fill="#101010" shape-rendering="geometricPrecision"/>
<rect x="794.88" y="797" width="1.6" height="11" fill="#101010" shape-rendering="geometricPrecision"/>
<rect x="794.88" y="127" width="1.6" height="4" fill="#101010" shape-rendering="geometricPrecision"/>
<rect x="823.41" y="797" width="1.6" height="11" fill="#101010" shape-rendering="geometricPrecision"/>
<rect x="823.41" y="127" width="1.6" height="4" fill="#101010" shape-rendering="geometricPrecision"/>
<rect x="851.94" y="797" width="1.6" height="11" fill="#101010" shape-rendering="geometricPrecision"/>
<rect x="851.94" y="127" width="1.6" height="4" fill="#101010" shape-rendering="geometricPrecision"/>
<rect x="880.47" y="797" width="1.6" height="11" fill="#101010" shape-rendering="geometricPrecision"/>
<rect x="880.47" y="127" width="1.6" height="4" fill="#101010" shape-rendering="geometricPrecision"/>
<rect x="909.00" y="793" width="1.6" height="18" fill="#101010" shape-rendering="geometricPrecision"/>
<rect x="909.00" y="127" width="1.6" height="8" fill="#101010" shape-rendering="geometricPrecision"/>
<rect x="937.53" y="797" width="1.6" height="11" fill="#101010" shape-rendering="geometricPrecision"/>
<rect x="937.53" y="127" width="1.6" height="4" fill="#101010" shape-rendering="geometricPrecision"/>
<rect x="966.06" y="797" width="1.6" height="11" fill="#101010" shape-rendering="geometricPrecision"/>
<rect x="966.06" y="127" width="1.6" height="4" fill="#101010" shape-rendering="geometricPrecision"/>
<rect x="994.59" y="797" width="1.6" height="11" fill="#101010" shape-rendering="geometricPrecision"/>
<rect x="994.59" y="127" width="1.6" height="4" fill="#101010" shape-rendering="geometricPrecision"/>
<rect x="1023.12" y="797" width="1.6" height="11" fill="#101010" shape-rendering="geometricPrecision"/>
<rect x="1023.12" y="127" width="1.6" height="4" fill="#101010" shape-rendering="geometricPrecision"/>
</svg>
<div class="t" style="left:19.80px;top:790.80px;width:12.79px;height:23.0px;font:normal 23.0px/23.0px 'Liberation Sans';color:#000;transform-origin:50% 50%;transform:rotate(90deg) scaleX(1.094);-webkit-text-stroke:0.7px #000">0</div>
<div class="t" style="left:13.41px;top:715.69px;width:25.58px;height:23.0px;font:normal 23.0px/23.0px 'Liberation Sans';color:#000;transform-origin:50% 50%;transform:rotate(90deg) scaleX(1.173);-webkit-text-stroke:0.7px #000">10</div>
<div class="t" style="left:13.41px;top:640.58px;width:25.58px;height:23.0px;font:normal 23.0px/23.0px 'Liberation Sans';color:#000;transform-origin:50% 50%;transform:rotate(90deg) scaleX(1.173);-webkit-text-stroke:0.7px #000">20</div>
<div class="t" style="left:13.41px;top:565.47px;width:25.58px;height:23.0px;font:normal 23.0px/23.0px 'Liberation Sans';color:#000;transform-origin:50% 50%;transform:rotate(90deg) scaleX(1.173);-webkit-text-stroke:0.7px #000">30</div>
<div class="t" style="left:13.41px;top:490.36px;width:25.58px;height:23.0px;font:normal 23.0px/23.0px 'Liberation Sans';color:#000;transform-origin:50% 50%;transform:rotate(90deg) scaleX(1.173);-webkit-text-stroke:0.7px #000">40</div>
<div class="t" style="left:13.41px;top:415.25px;width:25.58px;height:23.0px;font:normal 23.0px/23.0px 'Liberation Sans';color:#000;transform-origin:50% 50%;transform:rotate(90deg) scaleX(1.173);-webkit-text-stroke:0.7px #000">50</div>
<div class="t" style="left:13.41px;top:340.14px;width:25.58px;height:23.0px;font:normal 23.0px/23.0px 'Liberation Sans';color:#000;transform-origin:50% 50%;transform:rotate(90deg) scaleX(1.173);-webkit-text-stroke:0.7px #000">60</div>
<div class="t" style="left:13.41px;top:265.03px;width:25.58px;height:23.0px;font:normal 23.0px/23.0px 'Liberation Sans';color:#000;transform-origin:50% 50%;transform:rotate(90deg) scaleX(1.173);-webkit-text-stroke:0.7px #000">70</div>
<div class="t" style="left:13.41px;top:189.92px;width:25.58px;height:23.0px;font:normal 23.0px/23.0px 'Liberation Sans';color:#000;transform-origin:50% 50%;transform:rotate(90deg) scaleX(1.173);-webkit-text-stroke:0.7px #000">80</div>
<div class="t" style="left:13.41px;top:114.81px;width:25.58px;height:23.0px;font:normal 23.0px/23.0px 'Liberation Sans';color:#000;transform-origin:50% 50%;transform:rotate(90deg) scaleX(1.173);-webkit-text-stroke:0.7px #000">90</div>
<div class="b" style="left:57px;top:104px;width:31px;height:2px;background:#d42a2a"></div>
<div class="t" style="left:97.70px;top:98.02px;font:normal normal 14.8px/14.8px 'Liberation Sans', sans-serif;color:#000;transform:scaleX(0.7887);-webkit-text-stroke:0.2px #000;">BER</div>
<div class="b" style="left:144px;top:104px;width:33px;height:2px;background:#d13ad1"></div>
<div class="t" style="left:186.00px;top:98.02px;font:normal normal 14.8px/14.8px 'Liberation Sans', sans-serif;color:#000;transform:scaleX(0.8001);-webkit-text-stroke:0.2px #000;">SNR</div>
<div class="b" style="left:236px;top:104px;width:31px;height:2px;background:#2a2ac8"></div>
<div class="t" style="left:275.60px;top:98.02px;font:normal normal 14.8px/14.8px 'Liberation Sans', sans-serif;color:#000;transform:scaleX(0.8098);-webkit-text-stroke:0.2px #000;">Quality</div>
<div class="b" style="left:324px;top:104px;width:32px;height:2px;background:#38d438"></div>
<div class="t" style="left:365.30px;top:98.02px;font:normal normal 14.8px/14.8px 'Liberation Sans', sans-serif;color:#000;transform:scaleX(0.7801);-webkit-text-stroke:0.2px #000;">Level</div>
<div class="t" style="left:13.00px;top:26.73px;font:normal bold 10.9px/10.9px 'Liberation Sans', sans-serif;color:#1c1c8c;transform:scaleX(0.8020);-webkit-text-stroke:0.25px #1c1c8c;">TBS 5925 DVBS2 Tuner</div>
<div class="t" style="left:27.50px;top:42.59px;font:normal normal 9.9px/9.9px 'Liberation Sans', sans-serif;color:#1c1c1c;transform:scaleX(0.7775);-webkit-text-stroke:0.3px #1c1c1c;">4.0W - Amos 3/7 (ID: 3560) @ LOF1: 9750000, LOF2: 0, LOFSW: 0</div>
<div class="t" style="left:19.00px;top:-3.58px;font:normal normal 11.5px/11.5px 'Liberation Sans', sans-serif;color:#5a5a5a;transform:scaleX(0.7191);">Signal Analyzer</div>
<svg style="left:3px;top:0px" width="12" height="9"><path d="M1 0 L5 4 M9 0 L4 6 L1 8 L6 8 L11 3" fill="none" stroke="#3a3a3a" stroke-width="1.6"/></svg>
<div class="t" style="left:26.70px;top:71.27px;font:normal bold 9.8px/9.8px 'Liberation Sans', sans-serif;color:#141414;transform:scaleX(0.7776);-webkit-text-stroke:0.3px #141414;">BS Mode</div>
<div class="t" style="left:104.30px;top:71.27px;font:normal bold 9.8px/9.8px 'Liberation Sans', sans-serif;color:#141414;transform:scaleX(0.7831);-webkit-text-stroke:0.3px #141414;">DT Mode</div>
<div class="t" style="left:176.00px;top:71.27px;font:normal bold 9.8px/9.8px 'Liberation Sans', sans-serif;color:#141414;transform:scaleX(0.8002);-webkit-text-stroke:0.3px #141414;">Signal Mon.</div>
<div class="t" style="left:260.00px;top:71.27px;font:normal bold 9.8px/9.8px 'Liberation Sans', sans-serif;color:#141414;transform:scaleX(0.6947);-webkit-text-stroke:0.3px #141414;">TSA (OK)</div>
<div class="t" style="left:335.00px;top:71.27px;font:normal bold 9.8px/9.8px 'Liberation Sans', sans-serif;color:#141414;transform:scaleX(0.7617);-webkit-text-stroke:0.3px #141414;">AV Player</div>
<div class="t" style="left:1070.20px;top:95.89px;font:normal normal 10.6px/10.6px 'Liberation Sans', sans-serif;color:#1a1a1a;transform:scaleX(0.7506);-webkit-text-stroke:0.4px #1a1a1a">Frequency:</div>
<div class="t" style="left:1126.70px;top:94.99px;font:normal bold 10.6px/10.6px 'Liberation Sans', sans-serif;color:#0a5c0a;transform:scaleX(0.7456);-webkit-text-stroke:0.3px #0a5c0a">10759,858 MHz</div>
<div class="t" style="left:1070.20px;top:133.56px;font:normal normal 10.6px/10.6px 'Liberation Sans', sans-serif;color:#1a1a1a;transform:scaleX(0.7800);-webkit-text-stroke:0.4px #1a1a1a">Polarization:</div>
<div class="t" style="left:1126.70px;top:132.66px;font:normal bold 10.6px/10.6px 'Liberation Sans', sans-serif;color:#0a5c0a;transform:scaleX(0.6893);-webkit-text-stroke:0.3px #0a5c0a">Vertical</div>
<div class="t" style="left:1070.20px;top:171.23px;font:normal normal 10.6px/10.6px 'Liberation Sans', sans-serif;color:#1a1a1a;transform:scaleX(0.7434);-webkit-text-stroke:0.4px #1a1a1a">Symbol Rate:</div>
<div class="t" style="left:1126.70px;top:170.33px;font:normal bold 10.6px/10.6px 'Liberation Sans', sans-serif;color:#0a5c0a;transform:scaleX(0.7165);-webkit-text-stroke:0.3px #0a5c0a">27500,018 KS/s</div>
<div class="t" style="left:1070.20px;top:208.90px;font:normal normal 10.6px/10.6px 'Liberation Sans', sans-serif;color:#1a1a1a;transform:scaleX(0.7766);-webkit-text-stroke:0.4px #1a1a1a">Standard:</div>
<div class="t" style="left:1126.70px;top:208.00px;font:normal bold 10.6px/10.6px 'Liberation Sans', sans-serif;color:#0a5c0a;transform:scaleX(0.7004);-webkit-text-stroke:0.3px #0a5c0a">DVB-S</div>
<div class="t" style="left:1070.20px;top:246.57px;font:normal normal 10.6px/10.6px 'Liberation Sans', sans-serif;color:#1a1a1a;transform:scaleX(0.8303);-webkit-text-stroke:0.4px #1a1a1a">Modulation:</div>
<div class="t" style="left:1126.70px;top:245.67px;font:normal bold 10.6px/10.6px 'Liberation Sans', sans-serif;color:#0a5c0a;transform:scaleX(0.6758);-webkit-text-stroke:0.3px #0a5c0a">QPSK</div>
<div class="t" style="left:1070.20px;top:284.24px;font:normal normal 10.6px/10.6px 'Liberation Sans', sans-serif;color:#1a1a1a;transform:scaleX(0.6295);-webkit-text-stroke:0.4px #1a1a1a">FEC:</div>
<div class="t" style="left:1126.70px;top:283.34px;font:normal bold 10.6px/10.6px 'Liberation Sans', sans-serif;color:#0a5c0a;transform:scaleX(0.8211);-webkit-text-stroke:0.3px #0a5c0a">3/4</div>
<div class="t" style="left:1070.20px;top:321.91px;font:normal normal 10.6px/10.6px 'Liberation Sans', sans-serif;color:#1a1a1a;transform:scaleX(0.8023);-webkit-text-stroke:0.4px #1a1a1a">RollOff:</div>
<div class="t" style="left:1126.70px;top:321.01px;font:normal bold 10.6px/10.6px 'Liberation Sans', sans-serif;color:#0a5c0a;transform:scaleX(0.6931);-webkit-text-stroke:0.3px #0a5c0a">0.35</div>
<div class="t" style="left:1070.20px;top:359.58px;font:normal normal 10.6px/10.6px 'Liberation Sans', sans-serif;color:#1a1a1a;transform:scaleX(0.7766);-webkit-text-stroke:0.4px #1a1a1a">Pilot:</div>
<div class="t" style="left:1126.70px;top:358.68px;font:normal bold 10.6px/10.6px 'Liberation Sans', sans-serif;color:#0a5c0a;transform:scaleX(0.7665);-webkit-text-stroke:0.3px #0a5c0a">Auto</div>
<div class="t" style="left:1070.20px;top:397.25px;font:normal normal 10.6px/10.6px 'Liberation Sans', sans-serif;color:#1a1a1a;transform:scaleX(0.7452);-webkit-text-stroke:0.4px #1a1a1a">Spectrum:</div>
<div class="t" style="left:1126.70px;top:396.35px;font:normal bold 10.6px/10.6px 'Liberation Sans', sans-serif;color:#0a5c0a;transform:scaleX(0.7421);-webkit-text-stroke:0.3px #0a5c0a">Inverted</div>
<div class="t" style="left:1070.20px;top:434.92px;font:normal normal 10.6px/10.6px 'Liberation Sans', sans-serif;color:#1a1a1a;transform:scaleX(0.7133);-webkit-text-stroke:0.4px #1a1a1a">Frame Type:</div>
<div class="t" style="left:1126.70px;top:434.02px;font:normal bold 10.6px/10.6px 'Liberation Sans', sans-serif;color:#0a5c0a;transform:scaleX(0.7319);-webkit-text-stroke:0.3px #0a5c0a">Long Frame</div>
<div class="t" style="left:1070.20px;top:472.59px;font:normal normal 10.6px/10.6px 'Liberation Sans', sans-serif;color:#1a1a1a;transform:scaleX(0.7741);-webkit-text-stroke:0.4px #1a1a1a">Code Mode:</div>
<div class="t" style="left:1126.70px;top:471.69px;font:normal bold 10.6px/10.6px 'Liberation Sans', sans-serif;color:#0a5c0a;transform:scaleX(0.7291);-webkit-text-stroke:0.3px #0a5c0a">CCM</div>
<div class="t" style="left:1070.20px;top:510.26px;font:normal normal 10.6px/10.6px 'Liberation Sans', sans-serif;color:#1a1a1a;transform:scaleX(0.7439);-webkit-text-stroke:0.4px #1a1a1a">Stream type:</div>
<div class="t" style="left:1126.70px;top:509.36px;font:normal bold 10.6px/10.6px 'Liberation Sans', sans-serif;color:#0a5c0a;transform:scaleX(0.7139);-webkit-text-stroke:0.3px #0a5c0a">Transport</div>
<div class="t" style="left:1070.20px;top:547.93px;font:normal normal 10.6px/10.6px 'Liberation Sans', sans-serif;color:#1a1a1a;transform:scaleX(0.6051);-webkit-text-stroke:0.4px #1a1a1a">ISSYI</div>
<div class="t" style="left:1126.70px;top:547.03px;font:normal bold 10.6px/10.6px 'Liberation Sans', sans-serif;color:#0a5c0a;transform:scaleX(0.6652);-webkit-text-stroke:0.3px #0a5c0a">OFF</div>
<div class="t" style="left:1070.20px;top:585.60px;font:normal normal 10.6px/10.6px 'Liberation Sans', sans-serif;color:#1a1a1a;transform:scaleX(0.7029);-webkit-text-stroke:0.4px #1a1a1a">NPD:</div>
<div class="t" style="left:1126.70px;top:584.70px;font:normal bold 10.6px/10.6px 'Liberation Sans', sans-serif;color:#0a5c0a;transform:scaleX(0.6652);-webkit-text-stroke:0.3px #0a5c0a">OFF</div>
<div class="t" style="left:1070.20px;top:623.27px;font:normal normal 10.6px/10.6px 'Liberation Sans', sans-serif;color:#1a1a1a;transform:scaleX(0.6944);-webkit-text-stroke:0.4px #1a1a1a">RF Level:</div>
<div class="t" style="left:1126.70px;top:622.37px;font:normal bold 10.6px/10.6px 'Liberation Sans', sans-serif;color:#0a5c0a;transform:scaleX(0.7317);-webkit-text-stroke:0.3px #0a5c0a">-52 dBm</div>
<div class="t" style="left:1070.20px;top:660.94px;font:normal normal 10.6px/10.6px 'Liberation Sans', sans-serif;color:#1a1a1a;transform:scaleX(0.7452);-webkit-text-stroke:0.4px #1a1a1a">BitRate:</div>
<div class="t" style="left:1126.70px;top:660.04px;font:normal bold 10.6px/10.6px 'Liberation Sans', sans-serif;color:#0a5c0a;transform:scaleX(0.7668);-webkit-text-stroke:0.3px #0a5c0a">38,015 Mbit/s</div>
<div class="t" style="left:1070.20px;top:698.61px;font:normal normal 10.6px/10.6px 'Liberation Sans', sans-serif;color:#1a1a1a;transform:scaleX(0.7865);-webkit-text-stroke:0.4px #1a1a1a">CarrierWidth:</div>
<div class="t" style="left:1126.70px;top:697.71px;font:normal bold 10.6px/10.6px 'Liberation Sans', sans-serif;color:#0a5c0a;transform:scaleX(0.7454);-webkit-text-stroke:0.3px #0a5c0a">37,125 MHz</div>
<div class="t" style="left:1070.00px;top:752.99px;font:normal normal 10.6px/10.6px 'Liberation Sans', sans-serif;color:#1a1a1a;transform:scaleX(0.7084);-webkit-text-stroke:0.4px #1a1a1a">MIS (0):</div>
<div class="b" style="left:1128px;top:750px;width:51px;height:16px;background:#fff"></div>
<div class="t" style="left:1130.30px;top:752.99px;font:normal normal 10.6px/10.6px 'Liberation Sans', sans-serif;color:#222;transform:scaleX(0.7602);-webkit-text-stroke:0.2px #222">Single</div>
<svg style="left:1164px;top:755px" width="10" height="7"><path d="M1 1.5 L5 5.5 L9 1.5" fill="none" stroke="#9a9a9a" stroke-width="1"/></svg>
<svg style="left:1122px;top:807px" width="14" height="15"><rect x="0.5" y="0.5" width="12" height="13" fill="#e8e8e8" stroke="#6a6a6a"/><rect x="1" y="5" width="11" height="3" fill="#1c5fb0"/><rect x="1" y="9" width="11" height="4" fill="#a0a0a0"/></svg>
<div class="b" style="left:5px;top:835px;width:91px;height:18px;border:1px solid #8c8c8c;border-radius:2px;overflow:hidden;background:#bdbdbd"><div style="position:absolute;left:0.0px;top:0;width:89.0px;height:100%;background:linear-gradient(#ecffec 0%,#c4f2c4 52%,#5ad45a 52%,#3cbc3c 100%)"></div></div>
<div class="b" style="left:5px;top:856px;width:91px;height:18px;border:1px solid #8c8c8c;border-radius:2px;overflow:hidden;background:#bdbdbd"><div style="position:absolute;left:0.0px;top:0;width:89.0px;height:100%;background:linear-gradient(#ecffec 0%,#c4f2c4 52%,#5ad45a 52%,#3cbc3c 100%)"></div></div>
<div class="b" style="left:99px;top:835px;width:498px;height:18px;border:1px solid #8c8c8c;border-radius:2px;overflow:hidden;background:#bdbdbd"><div style="position:absolute;left:0.0px;top:0;width:48.5px;height:100%;background:linear-gradient(#fdeeee 0%,#f6cccc 52%,#e6a4a8 52%,#d88c90 100%)"></div><div style="position:absolute;left:48.5px;top:0;width:159.5px;height:100%;background:linear-gradient(#ffffe0 0%,#fafab8 52%,#e8e070 52%,#d8d050 100%)"></div><div style="position:absolute;left:208.0px;top:0;width:288.0px;height:100%;background:linear-gradient(#e4e4e4 0%,#d2d2d2 52%,#bebebe 52%,#b0b0b0 100%)"></div></div>
<div class="b" style="left:99px;top:856px;width:498px;height:18px;border:1px solid #8c8c8c;border-radius:2px;overflow:hidden;background:#bdbdbd"><div style="position:absolute;left:0.0px;top:0;width:48.5px;height:100%;background:linear-gradient(#fdeeee 0%,#f6cccc 52%,#e6a4a8 52%,#d88c90 100%)"></div><div style="position:absolute;left:48.5px;top:0;width:200.2px;height:100%;background:linear-gradient(#ffffe0 0%,#fafab8 52%,#e8e070 52%,#d8d050 100%)"></div><div style="position:absolute;left:248.7px;top:0;width:49.8px;height:100%;background:linear-gradient(#ecffec 0%,#c4f2c4 52%,#5ad45a 52%,#3cbc3c 100%)"></div><div style="position:absolute;left:298.5px;top:0;width:197.5px;height:100%;background:linear-gradient(#e4e4e4 0%,#d2d2d2 52%,#bebebe 52%,#b0b0b0 100%)"></div></div>
<div class="b" style="left:599px;top:835px;width:500px;height:18px;border:1px solid #8c8c8c;border-radius:2px;overflow:hidden;background:#bdbdbd"><div style="position:absolute;left:0.0px;top:0;width:107.5px;height:100%;background:linear-gradient(#fdeeee 0%,#f6cccc 52%,#e6a4a8 52%,#d88c90 100%)"></div><div style="position:absolute;left:107.5px;top:0;width:107.5px;height:100%;background:linear-gradient(#ffffe0 0%,#fafab8 52%,#e8e070 52%,#d8d050 100%)"></div><div style="position:absolute;left:215.0px;top:0;width:283.0px;height:100%;background:linear-gradient(#e4e4e4 0%,#d2d2d2 52%,#bebebe 52%,#b0b0b0 100%)"></div></div>
<div class="b" style="left:599px;top:856px;width:500px;height:18px;border:1px solid #8c8c8c;border-radius:2px;overflow:hidden;background:#bdbdbd"><div style="position:absolute;left:0.0px;top:0;width:137.5px;height:100%;background:linear-gradient(#fdeeee 0%,#f6cccc 52%,#e6a4a8 52%,#d88c90 100%)"></div><div style="position:absolute;left:137.5px;top:0;width:76.2px;height:100%;background:linear-gradient(#ffffe0 0%,#fafab8 52%,#e8e070 52%,#d8d050 100%)"></div><div style="position:absolute;left:213.8px;top:0;width:284.2px;height:100%;background:linear-gradient(#e4e4e4 0%,#d2d2d2 52%,#bebebe 52%,#b0b0b0 100%)"></div></div>
<div class="b" style="left:1102px;top:835px;width:91px;height:18px;border:1px solid #8c8c8c;border-radius:2px;overflow:hidden;background:#bdbdbd"><div style="position:absolute;left:0.0px;top:0;width:89.0px;height:100%;background:linear-gradient(#ecffec 0%,#c4f2c4 52%,#5ad45a 52%,#3cbc3c 100%)"></div></div>
<div class="b" style="left:1102px;top:856px;width:91px;height:18px;border:1px solid #8c8c8c;border-radius:2px;overflow:hidden;background:#bdbdbd"><div style="position:absolute;left:0.0px;top:0;width:89.0px;height:100%;background:linear-gradient(#ecffec 0%,#c4f2c4 52%,#5ad45a 52%,#3cbc3c 100%)"></div></div>
<div class="t" style="left:7.70px;top:840.00px;font:normal bold 10px/10px 'Liberation Sans', sans-serif;color:#0a1a0a;transform:scaleX(0.7170);-webkit-text-stroke:0.25px #0a1a0a;">Present</div>
<div class="t" style="left:7.70px;top:861.30px;font:normal bold 10px/10px 'Liberation Sans', sans-serif;color:#0a1a0a;transform:scaleX(0.6856);-webkit-text-stroke:0.25px #0a1a0a;">Lock</div>
<div class="t" style="left:102.70px;top:840.00px;font:normal bold 10px/10px 'Liberation Sans', sans-serif;color:#1a0a0a;transform:scaleX(0.7351);-webkit-text-stroke:0.25px #1a0a0a;">Level: 42%</div>
<div class="t" style="left:102.70px;top:861.30px;font:normal bold 10px/10px 'Liberation Sans', sans-serif;color:#1a0a0a;transform:scaleX(0.7548);-webkit-text-stroke:0.25px #1a0a0a;">Quality: 60%</div>
<div class="t" style="left:602.50px;top:840.00px;font:normal bold 10px/10px 'Liberation Sans', sans-serif;color:#1a0a0a;transform:scaleX(0.6969);-webkit-text-stroke:0.25px #1a0a0a;">BER: 1,2E-3</div>
<div class="t" style="left:605.00px;top:861.30px;font:normal bold 10px/10px 'Liberation Sans', sans-serif;color:#1a0a0a;transform:scaleX(0.7574);-webkit-text-stroke:0.25px #1a0a0a;">SNR: 8,5 dB (Margin: 3,0 dB | Poor)</div>
<div class="t" style="left:1104.00px;top:840.00px;font:normal bold 10px/10px 'Liberation Sans', sans-serif;color:#0a1a0a;transform:scaleX(0.7937);-webkit-text-stroke:0.25px #0a1a0a;">Input (~36,35 Mbps)</div>
<div class="t" style="left:1104.00px;top:861.30px;font:normal bold 10px/10px 'Liberation Sans', sans-serif;color:#0a1a0a;transform:scaleX(0.6843);-webkit-text-stroke:0.25px #0a1a0a;">Sync TS</div>
<div class="b" style="left:0px;top:877px;width:1200px;height:1px;background:#d8d8d8"></div>
<div class="b" style="left:0px;top:878px;width:1200px;height:22px;background:#f0f0f0"></div>
<div class="b" style="left:392px;top:880px;width:1px;height:18px;background:#9a9a9a"></div>
<div class="b" style="left:791px;top:880px;width:1px;height:18px;background:#9a9a9a"></div>
<div class="b" style="left:1196px;top:886px;width:2px;height:2px;background:#9a9a9a"></div>
<div class="b" style="left:1193px;top:889px;width:2px;height:2px;background:#9a9a9a"></div>
<div class="b" style="left:1196px;top:889px;width:2px;height:2px;background:#9a9a9a"></div>
<div class="b" style="left:1190px;top:892px;width:2px;height:2px;background:#9a9a9a"></div>
<div class="b" style="left:1193px;top:892px;width:2px;height:2px;background:#9a9a9a"></div>
<div class="b" style="left:1196px;top:892px;width:2px;height:2px;background:#9a9a9a"></div>
<div class="b" style="left:1187px;top:895px;width:2px;height:2px;background:#9a9a9a"></div>
<div class="b" style="left:1190px;top:895px;width:2px;height:2px;background:#9a9a9a"></div>
<div class="b" style="left:1193px;top:895px;width:2px;height:2px;background:#9a9a9a"></div>
<div class="b" style="left:1196px;top:895px;width:2px;height:2px;background:#9a9a9a"></div>
<div class="b" style="left:1184px;top:880px;width:1px;height:18px;background:#9a9a9a"></div>
<div class="t" style="left:143.75px;top:885.33px;font:normal bold 10.2px/10.2px 'Liberation Sans', sans-serif;color:#141414;transform:scaleX(0.7932);-webkit-text-stroke:0.25px #141414;">Locked -&gt; Uptime: 73:09:43</div>
<div class="t" style="left:541.00px;top:885.33px;font:normal bold 10.2px/10.2px 'Liberation Sans', sans-serif;color:#141414;transform:scaleX(0.7820);-webkit-text-stroke:0.25px #141414;">SYNC 73 | TEI 205 | CC 5138</div>
<div class="t" style="left:916.70px;top:885.33px;font:normal bold 10.2px/10.2px 'Liberation Sans', sans-serif;color:#141414;transform:scaleX(0.8170);-webkit-text-stroke:0.25px #141414;">Best signal: 9,0 dB (2025-04-22 04:08)</div>
<div class="t" style="left:302.50px;top:0.45px;font:normal normal 13.0px/13.0px 'Liberation Sans', sans-serif;color:#1a1a1a;transform:scaleX(0.9129);">PF Prodelin 450 cm/Lučenec-Slovakia</div>
<div class="t" style="left:302.50px;top:17.70px;font:normal normal 13.0px/13.0px 'Liberation Sans', sans-serif;color:#1a1a1a;transform:scaleX(0.9448);">AMOS 3 at 4,0°W_Middle East beam</div>
<div class="t" style="left:302.50px;top:35.95px;font:normal normal 13.0px/13.0px 'Liberation Sans', sans-serif;color:#1a1a1a;transform:scaleX(0.9142);">10 758 MHz-V : YES Israel</div>
<div class="t" style="left:302.50px;top:53.15px;font:normal normal 13.0px/13.0px 'Liberation Sans', sans-serif;color:#1a1a1a;transform:scaleX(0.9376);">Locked Uptime : 73:09:43</div>
<div class="b" style="left:511px;top:-20px;width:729px;height:103px;background:#030303;border-radius:0 0 0 6px;box-shadow:0 10px 40px rgba(0,0,0,0.7), 0 2px 6px rgba(0,0,0,0.45)"></div>
<div class="t" style="left:542.40px;top:-5.08px;font:normal normal 11.5px/11.5px 'Liberation Sans', sans-serif;color:#f2f2f2;transform:scaleX(0.7718);">Príkazový riadok</div>
<div class="t" style="left:668px;top:-6px;font:normal 11px/11px 'Liberation Sans';color:#ddd">×</div>
<div class="t" style="left:699px;top:-7px;font:normal 12px/12px 'Liberation Sans';color:#ddd">+</div>
<svg style="left:721px;top:0px" width="9" height="5"><path d="M0.5 0 L4.5 3.5 L8.5 0" fill="none" stroke="#ccc" stroke-width="1"/></svg>
<div class="t" style="left:516.7px;top:23.68px;font:normal 11.450px/11.450px 'Liberation Mono';color:#acacac;transform:scaleY(1.151)">(c) M.</div>
<div class="t" style="left:516.7px;top:55.59px;font:normal 11.447px/11.447px 'Liberation Mono';color:#acacac;transform:scaleY(1.231)">C:\Users\Roman Dávid&gt;Signal Monitoring_PF 450_LC/SK_Amos 3-4,0°W_Middle east_10 758-V_21.4.2025+</div>
<div class="b" style="left:554px;top:6px;width:124px;height:18px;background:#f2c400"></div>
<div class="b" style="left:554px;top:24px;width:124px;height:21px;background:repeating-linear-gradient(#ffffff 0px,#ffffff 2px,#e4e4e4 2px,#e4e4e4 3px)"></div>
<div class="b" style="left:554px;top:24px;width:124px;height:5px;background:linear-gradient(#555,#ddd)"></div>
<div class="t" style="left:560.40px;top:7.47px;font:italic bold 13.8px/13.8px 'Liberation Sans', sans-serif;color:#000000;transform:scaleX(0.6728);-webkit-text-stroke:0.9px #000000;">Berlin-Paris-Vienna-Roma</div>
<div class="t" style="left:558.70px;top:29.58px;font:normal bold 13.2px/13.2px 'Liberation Sans', sans-serif;color:#0a0a0a;transform:scaleX(0.7100);-webkit-text-stroke:0.75px #000;">Thu, Apr 24</div>
<div class="t" style="left:643.00px;top:29.58px;font:normal bold 13.2px/13.2px 'Liberation Sans', sans-serif;color:#0a0a0a;transform:scaleX(0.6517);-webkit-text-stroke:0.75px #000;">16:41</div>
<div class="b" style="left:679px;top:6px;width:124px;height:18px;background:#ee0000"></div>
<div class="b" style="left:679px;top:24px;width:124px;height:21px;background:repeating-linear-gradient(#ffffff 0px,#ffffff 2px,#e4e4e4 2px,#e4e4e4 3px)"></div>
<div class="b" style="left:679px;top:24px;width:124px;height:5px;background:linear-gradient(#555,#ddd)"></div>
<div class="t" style="left:727.20px;top:7.47px;font:italic bold 13.8px/13.8px 'Liberation Sans', sans-serif;color:#3a0000;transform:scaleX(0.8322);-webkit-text-stroke:0.9px #3a0000;">Dubai</div>
<div class="t" style="left:682.60px;top:29.58px;font:normal bold 13.2px/13.2px 'Liberation Sans', sans-serif;color:#0a0a0a;transform:scaleX(0.7100);-webkit-text-stroke:0.75px #000;">Thu, Apr 24</div>
<div class="t" style="left:767.80px;top:29.58px;font:normal bold 13.2px/13.2px 'Liberation Sans', sans-serif;color:#0a0a0a;transform:scaleX(0.6399);-webkit-text-stroke:0.75px #000;">18:41</div>
<div class="t" style="left:747.60px;top:25.07px;font:normal bold 8.5px/8.5px 'Liberation Sans', sans-serif;color:#0a0a0a;transform:scaleX(0.7017);-webkit-text-stroke:0.25px #0a0a0a;">+2</div>
<div class="b" style="left:804px;top:6px;width:123px;height:18px;background:#12b012"></div>
<div class="b" style="left:804px;top:24px;width:123px;height:21px;background:repeating-linear-gradient(#ffffff 0px,#ffffff 2px,#e4e4e4 2px,#e4e4e4 3px)"></div>
<div class="b" style="left:804px;top:24px;width:123px;height:5px;background:linear-gradient(#555,#ddd)"></div>
<div class="t" style="left:843.00px;top:7.47px;font:italic bold 13.8px/13.8px 'Liberation Sans', sans-serif;color:#021002;transform:scaleX(0.8634);-webkit-text-stroke:0.9px #021002;">Moscow</div>
<div class="t" style="left:807.50px;top:29.58px;font:normal bold 13.2px/13.2px 'Liberation Sans', sans-serif;color:#0a0a0a;transform:scaleX(0.7100);-webkit-text-stroke:0.75px #000;">Thu, Apr 24</div>
<div class="t" style="left:891.70px;top:29.58px;font:normal bold 13.2px/13.2px 'Liberation Sans', sans-serif;color:#0a0a0a;transform:scaleX(0.6665);-webkit-text-stroke:0.75px #000;">17:41</div>
<div class="t" style="left:872.00px;top:25.07px;font:normal bold 8.5px/8.5px 'Liberation Sans', sans-serif;color:#0a0a0a;transform:scaleX(0.7017);-webkit-text-stroke:0.25px #0a0a0a;">+1</div>
<div class="b" style="left:928px;top:6px;width:124px;height:18px;background:#1238c4"></div>
<div class="b" style="left:928px;top:24px;width:124px;height:21px;background:repeating-linear-gradient(#ffffff 0px,#ffffff 2px,#e4e4e4 2px,#e4e4e4 3px)"></div>
<div class="b" style="left:928px;top:24px;width:124px;height:5px;background:linear-gradient(#555,#ddd)"></div>
<div class="t" style="left:955.00px;top:7.47px;font:italic bold 13.8px/13.8px 'Liberation Sans', sans-serif;color:#00052a;transform:scaleX(0.8516);-webkit-text-stroke:0.9px #00052a;">London, Eng</div>
<div class="t" style="left:932.30px;top:29.58px;font:normal bold 13.2px/13.2px 'Liberation Sans', sans-serif;color:#0a0a0a;transform:scaleX(0.7100);-webkit-text-stroke:0.75px #000;">Thu, Apr 24</div>
<div class="t" style="left:1009.30px;top:29.58px;font:normal bold 13.2px/13.2px 'Liberation Sans', sans-serif;color:#0a0a0a;transform:scaleX(0.6946);-webkit-text-stroke:0.75px #000;">15:41:38</div>
<div class="t" style="left:998.80px;top:25.07px;font:normal bold 8.5px/8.5px 'Liberation Sans', sans-serif;color:#0a0a0a;transform:scaleX(0.8997);-webkit-text-stroke:0.25px #0a0a0a;">-1</div>
<div class="b" style="left:1053px;top:6px;width:123px;height:18px;background:#16b4b0"></div>
<div class="b" style="left:1053px;top:24px;width:123px;height:21px;background:repeating-linear-gradient(#ffffff 0px,#ffffff 2px,#e4e4e4 2px,#e4e4e4 3px)"></div>
<div class="b" style="left:1053px;top:24px;width:123px;height:5px;background:linear-gradient(#555,#ddd)"></div>
<div class="t" style="left:1068.80px;top:7.47px;font:italic bold 13.8px/13.8px 'Liberation Sans', sans-serif;color:#001414;transform:scaleX(0.8675);-webkit-text-stroke:0.9px #001414;">Jerusalem-Israel</div>
<div class="t" style="left:1056.50px;top:29.58px;font:normal bold 13.2px/13.2px 'Liberation Sans', sans-serif;color:#0a0a0a;transform:scaleX(0.7100);-webkit-text-stroke:0.75px #000;">Thu, Apr 24</div>
<div class="t" style="left:1140.50px;top:29.58px;font:normal bold 13.2px/13.2px 'Liberation Sans', sans-serif;color:#0a0a0a;transform:scaleX(0.6547);-webkit-text-stroke:0.75px #000;">17:41</div>
<div class="t" style="left:1121.00px;top:25.07px;font:normal bold 8.5px/8.5px 'Liberation Sans', sans-serif;color:#0a0a0a;transform:scaleX(0.7017);-webkit-text-stroke:0.25px #0a0a0a;">+1</div>
<div class="t" style="left:990.00px;top:34.12px;font:normal bold 7.5px/7.5px 'Liberation Sans', sans-serif;color:#0a0a0a;transform:scaleX(0.9333);-webkit-text-stroke:0.25px #0a0a0a;">DST</div>
<svg style="left:573px;top:80px" width="54" height="51" viewBox="0 0 54 51" shape-rendering="geometricPrecision">
<rect width="54" height="51" fill="#fdfdfd"/>
<path d="M8.76 43.16 A24.2 24.2 0 0 1 45.00 11.10" fill="none" stroke="#2c2c86" stroke-width="1.5"/>
<path d="M47.36 14.07 A24.2 24.2 0 0 1 45.84 43.16" fill="none" stroke="#2020a0" stroke-width="2.1"/>
<line x1="9.2" y1="43" x2="45.2" y2="43" stroke="#3a3a8a" stroke-width="1.3"/>
<path d="M39.38 17.10 A16 16 0 0 1 43.30 27.60" fill="none" stroke="#c8262c" stroke-width="1.9"/>
<path d="M41.44 13.46 A20 20 0 0 1 47.29 28.30" fill="none" stroke="#c8262c" stroke-width="1.9"/>
<path d="M18.6 7 C22 16 26 28 31.5 40" fill="none" stroke="#5a5a8c" stroke-width="0.9"/>
<path d="M19.4 6.8 C24 13 29 26 32.5 39.5" fill="none" stroke="#7878a0" stroke-width="0.8"/>
<path d="M21 28.8 L37 23.5 L30 31" fill="none" stroke="#6a6a98" stroke-width="0.9"/>
<circle cx="17.2" cy="33.3" r="2.6" fill="none" stroke="#8a8aaa" stroke-width="1.2"/>
<path d="M18.5 36 L13 43 M19.5 36 L23 43" stroke="#7a7a9a" stroke-width="1"/>
<text x="2.4" y="50.2" font-family="Liberation Serif" font-weight="bold" font-size="7.4" fill="#2a2a7a" stroke="#2a2a7a" stroke-width="0.25" textLength="49.9" lengthAdjust="spacingAndGlyphs"><tspan fill="#b82a2a" stroke="#b82a2a">DX</tspan>SATCS.COM</text>
</svg>
</body></html>
